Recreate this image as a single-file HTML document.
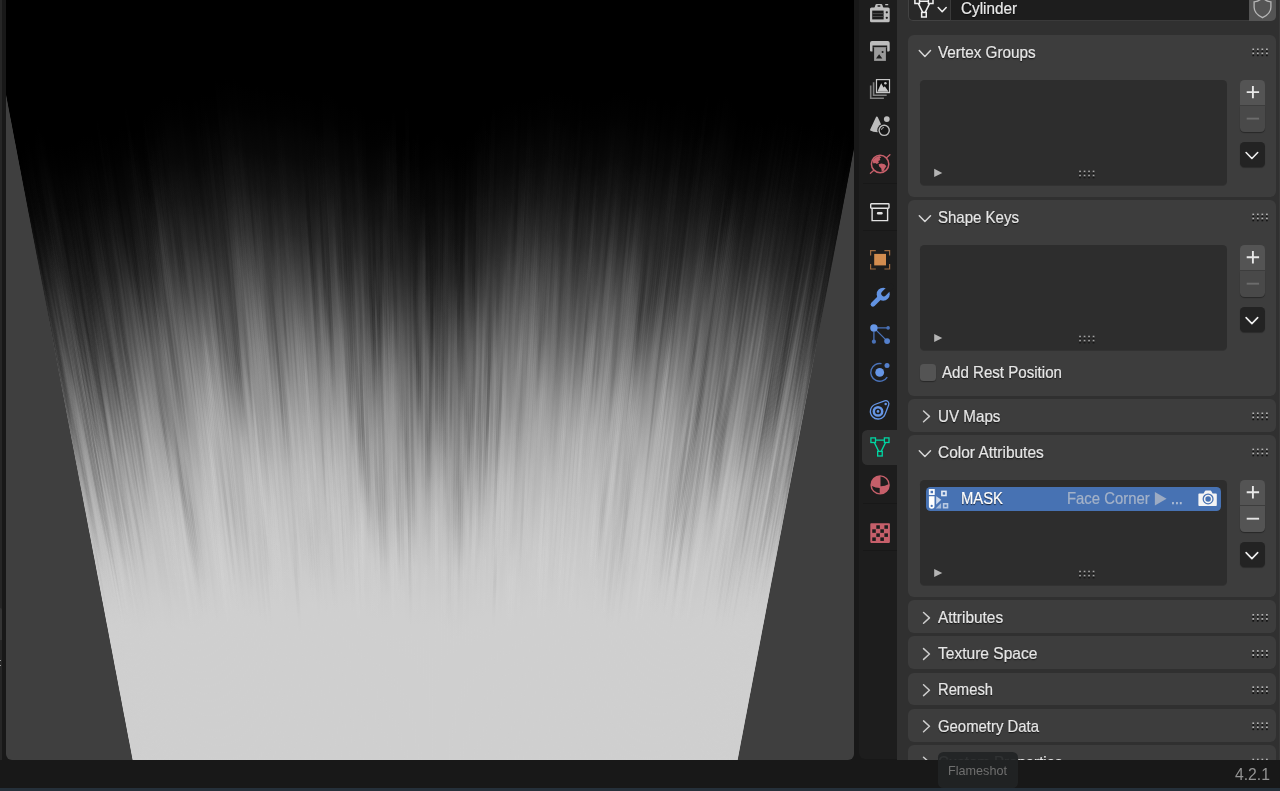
<!DOCTYPE html>
<html lang="en">
<head>
<meta charset="utf-8">
<title>Blender</title>
<style>
html,body{margin:0;padding:0;}
body{width:1280px;height:791px;overflow:hidden;background:#181818;position:relative;font-family:"Liberation Sans",sans-serif;color:#e4e4e4;}
.abs,.abs>*{position:absolute;}
#root{left:0;top:0;width:1280px;height:791px;overflow:hidden;}
#lstrip{left:0;top:0;width:2px;height:759.5px;background:#262626;}
#lblock{left:0;top:607.5px;width:2px;height:32px;background:#343434;border-radius:0 2px 0 0;}
#view{left:6.4px;top:0;width:847.8px;height:759.6px;background:#3f3f3f;border-radius:0 0 6px 6px;overflow:hidden;}
#view svg{position:absolute;left:0;top:0;}
#tabs{left:858.6px;top:0;width:38.8px;height:759.4px;background:#1d1d1d;border-radius:0 0 0 6px;}
#main{left:897.4px;top:0;width:382.6px;height:759.5px;background:#303030;overflow:hidden;}
#redge{left:1278.6px;top:0;width:1.4px;height:759.5px;background:#393939;}
#status{left:0;top:759.6px;width:1280px;height:28.4px;background:#181818;}
#bstrip{left:0;top:787.8px;width:1280px;height:3.2px;background:#25303a;}
.panel{background:#3d3d3d;border-radius:6px;left:907.8px;width:368.3px;}
.list{background:#2d2d2d;border-radius:4.5px;left:919.7px;width:307.3px;box-shadow:0 1px 0 rgba(0,0,0,.18);}
.btn{left:1239.9px;width:24.8px;background:#545454;}
.t{white-space:nowrap;font-size:16.4px;line-height:20px;height:20px;transform-origin:0 0;text-shadow:0 1px 1.2px rgba(0,0,0,.75);color:#e6e6e6;-webkit-text-stroke:0.22px currentColor;}
.ic{left:870px;width:20.4px;height:20.4px;overflow:visible;}
svg{overflow:visible;}
</style>
</head>
<body>
<div id="root" class="abs">
<div id="lstrip"></div><div id="lblock"></div>
<div style="left:0;top:660px;width:1px;height:1.4px;background:#9a9a9a"></div>
<div style="left:0;top:665px;width:1px;height:1.4px;background:#9a9a9a"></div>
<div id="view"><svg width="848" height="760" viewBox="0 0 848 760"><defs><linearGradient id="gb" gradientUnits="userSpaceOnUse" x1="0" x2="0" y1="112.0" y2="618.0"><stop offset="0" stop-color="rgb(0,0,0)"/><stop offset="0.05" stop-color="rgb(2,2,2)"/><stop offset="0.127" stop-color="rgb(9,9,9)"/><stop offset="0.2" stop-color="rgb(21,21,21)"/><stop offset="0.278" stop-color="rgb(40,40,40)"/><stop offset="0.353" stop-color="rgb(65,65,65)"/><stop offset="0.43" stop-color="rgb(92,92,92)"/><stop offset="0.5" stop-color="rgb(117,117,117)"/><stop offset="0.577" stop-color="rgb(142,142,142)"/><stop offset="0.653" stop-color="rgb(164,164,164)"/><stop offset="0.728" stop-color="rgb(180,180,180)"/><stop offset="0.8" stop-color="rgb(191,191,191)"/><stop offset="0.88" stop-color="rgb(200,200,200)"/><stop offset="0.954" stop-color="rgb(205,205,205)"/><stop offset="1" stop-color="rgb(207,207,207)"/></linearGradient><linearGradient id="md" x1="0" x2="0" y1="0" y2="1"><stop offset="0" stop-color="#000" stop-opacity="0"/><stop offset=".14" stop-color="#000" stop-opacity=".12"/><stop offset=".3" stop-color="#000" stop-opacity=".55"/><stop offset=".5" stop-color="#000" stop-opacity="1"/><stop offset=".7" stop-color="#000" stop-opacity=".55"/><stop offset=".86" stop-color="#000" stop-opacity=".12"/><stop offset="1" stop-color="#000" stop-opacity="0"/></linearGradient><linearGradient id="ml" x1="0" x2="0" y1="0" y2="1"><stop offset="0" stop-color="#fff" stop-opacity="0"/><stop offset=".14" stop-color="#fff" stop-opacity=".12"/><stop offset=".3" stop-color="#fff" stop-opacity=".55"/><stop offset=".5" stop-color="#fff" stop-opacity="1"/><stop offset=".7" stop-color="#fff" stop-opacity=".55"/><stop offset=".86" stop-color="#fff" stop-opacity=".12"/><stop offset="1" stop-color="#fff" stop-opacity="0"/></linearGradient><linearGradient id="g0" href="#gb" y1="156" y2="623"/><linearGradient id="g1" href="#gb" y1="157" y2="627"/><linearGradient id="g2" href="#gb" y1="157" y2="628"/><linearGradient id="g3" href="#gb" y1="157" y2="631"/><linearGradient id="g4" href="#gb" y1="150" y2="627"/><linearGradient id="g5" href="#gb" y1="151" y2="628"/><linearGradient id="g6" href="#gb" y1="152" y2="629"/><linearGradient id="g7" href="#gb" y1="146" y2="628"/><linearGradient id="g8" href="#gb" y1="142" y2="631"/><linearGradient id="g9" href="#gb" y1="141" y2="629"/><linearGradient id="g10" href="#gb" y1="143" y2="631"/><linearGradient id="g11" href="#gb" y1="140" y2="626"/><linearGradient id="g12" href="#gb" y1="147" y2="629"/><linearGradient id="g13" href="#gb" y1="148" y2="622"/><linearGradient id="g14" href="#gb" y1="151" y2="627"/><linearGradient id="g15" href="#gb" y1="147" y2="626"/><linearGradient id="g16" href="#gb" y1="144" y2="626"/><linearGradient id="g17" href="#gb" y1="142" y2="626"/><linearGradient id="g18" href="#gb" y1="136" y2="623"/><linearGradient id="g19" href="#gb" y1="132" y2="617"/><linearGradient id="g20" href="#gb" y1="132" y2="621"/><linearGradient id="g21" href="#gb" y1="131" y2="624"/><linearGradient id="g22" href="#gb" y1="126" y2="626"/><linearGradient id="g23" href="#gb" y1="129" y2="627"/><linearGradient id="g24" href="#gb" y1="132" y2="625"/><linearGradient id="g25" href="#gb" y1="136" y2="630"/><linearGradient id="g26" href="#gb" y1="143" y2="628"/><linearGradient id="g27" href="#gb" y1="145" y2="632"/><linearGradient id="g28" href="#gb" y1="146" y2="632"/><linearGradient id="g29" href="#gb" y1="144" y2="631"/><linearGradient id="g30" href="#gb" y1="146" y2="633"/><linearGradient id="g31" href="#gb" y1="150" y2="634"/><linearGradient id="g32" href="#gb" y1="149" y2="632"/><linearGradient id="g33" href="#gb" y1="149" y2="640"/><linearGradient id="g34" href="#gb" y1="145" y2="637"/><linearGradient id="g35" href="#gb" y1="146" y2="635"/><linearGradient id="g36" href="#gb" y1="148" y2="633"/><linearGradient id="g37" href="#gb" y1="147" y2="633"/><linearGradient id="g38" href="#gb" y1="148" y2="633"/><linearGradient id="g39" href="#gb" y1="145" y2="632"/><linearGradient id="g40" href="#gb" y1="147" y2="627"/><linearGradient id="g41" href="#gb" y1="143" y2="629"/><linearGradient id="g42" href="#gb" y1="147" y2="631"/><linearGradient id="g43" href="#gb" y1="143" y2="625"/><linearGradient id="g44" href="#gb" y1="141" y2="630"/><linearGradient id="g45" href="#gb" y1="137" y2="624"/><linearGradient id="g46" href="#gb" y1="137" y2="624"/><linearGradient id="g47" href="#gb" y1="136" y2="625"/><linearGradient id="g48" href="#gb" y1="137" y2="626"/><linearGradient id="g49" href="#gb" y1="135" y2="623"/><linearGradient id="g50" href="#gb" y1="138" y2="627"/><linearGradient id="g51" href="#gb" y1="134" y2="631"/><linearGradient id="g52" href="#gb" y1="142" y2="629"/><linearGradient id="g53" href="#gb" y1="138" y2="634"/><linearGradient id="g54" href="#gb" y1="139" y2="629"/><linearGradient id="g55" href="#gb" y1="137" y2="631"/><linearGradient id="g56" href="#gb" y1="132" y2="624"/><linearGradient id="g57" href="#gb" y1="132" y2="623"/><linearGradient id="g58" href="#gb" y1="137" y2="627"/><linearGradient id="g59" href="#gb" y1="142" y2="629"/><linearGradient id="g60" href="#gb" y1="136" y2="624"/><linearGradient id="g61" href="#gb" y1="136" y2="628"/><linearGradient id="g62" href="#gb" y1="135" y2="630"/><linearGradient id="g63" href="#gb" y1="128" y2="628"/><linearGradient id="g64" href="#gb" y1="126" y2="621"/><linearGradient id="g65" href="#gb" y1="129" y2="624"/><linearGradient id="g66" href="#gb" y1="129" y2="629"/><linearGradient id="g67" href="#gb" y1="128" y2="628"/><linearGradient id="g68" href="#gb" y1="133" y2="628"/><linearGradient id="g69" href="#gb" y1="129" y2="628"/><linearGradient id="g70" href="#gb" y1="130" y2="624"/><linearGradient id="g71" href="#gb" y1="133" y2="622"/><linearGradient id="g72" href="#gb" y1="130" y2="625"/><linearGradient id="g73" href="#gb" y1="115" y2="618"/><linearGradient id="g74" href="#gb" y1="113" y2="617"/><linearGradient id="g75" href="#gb" y1="114" y2="615"/><linearGradient id="g76" href="#gb" y1="107" y2="620"/><linearGradient id="g77" href="#gb" y1="108" y2="620"/><linearGradient id="g78" href="#gb" y1="105" y2="618"/><linearGradient id="g79" href="#gb" y1="101" y2="618"/><linearGradient id="g80" href="#gb" y1="96" y2="607"/><linearGradient id="g81" href="#gb" y1="96" y2="611"/><linearGradient id="g82" href="#gb" y1="98" y2="609"/><linearGradient id="g83" href="#gb" y1="100" y2="606"/><linearGradient id="g84" href="#gb" y1="99" y2="604"/><linearGradient id="g85" href="#gb" y1="94" y2="609"/><linearGradient id="g86" href="#gb" y1="100" y2="607"/><linearGradient id="g87" href="#gb" y1="101" y2="613"/><linearGradient id="g88" href="#gb" y1="105" y2="616"/><linearGradient id="g89" href="#gb" y1="103" y2="619"/><linearGradient id="g90" href="#gb" y1="97" y2="617"/><linearGradient id="g91" href="#gb" y1="102" y2="619"/><linearGradient id="g92" href="#gb" y1="94" y2="617"/><linearGradient id="g93" href="#gb" y1="95" y2="618"/><linearGradient id="g94" href="#gb" y1="96" y2="622"/><linearGradient id="g95" href="#gb" y1="94" y2="620"/><linearGradient id="g96" href="#gb" y1="95" y2="619"/><linearGradient id="g97" href="#gb" y1="80" y2="612"/><linearGradient id="g98" href="#gb" y1="82" y2="616"/><linearGradient id="g99" href="#gb" y1="81" y2="607"/><linearGradient id="g100" href="#gb" y1="78" y2="607"/><linearGradient id="g101" href="#gb" y1="82" y2="608"/><linearGradient id="g102" href="#gb" y1="78" y2="608"/><linearGradient id="g103" href="#gb" y1="83" y2="606"/><linearGradient id="g104" href="#gb" y1="85" y2="616"/><linearGradient id="g105" href="#gb" y1="85" y2="614"/><linearGradient id="g106" href="#gb" y1="87" y2="614"/><linearGradient id="g107" href="#gb" y1="88" y2="613"/><linearGradient id="g108" href="#gb" y1="85" y2="619"/><linearGradient id="g109" href="#gb" y1="89" y2="615"/><linearGradient id="g110" href="#gb" y1="87" y2="611"/><linearGradient id="g111" href="#gb" y1="92" y2="608"/><linearGradient id="g112" href="#gb" y1="93" y2="605"/><linearGradient id="g113" href="#gb" y1="91" y2="604"/><linearGradient id="g114" href="#gb" y1="90" y2="604"/><linearGradient id="g115" href="#gb" y1="89" y2="605"/><linearGradient id="g116" href="#gb" y1="91" y2="601"/><linearGradient id="g117" href="#gb" y1="92" y2="609"/><linearGradient id="g118" href="#gb" y1="95" y2="609"/><linearGradient id="g119" href="#gb" y1="92" y2="609"/><linearGradient id="g120" href="#gb" y1="95" y2="611"/><linearGradient id="g121" href="#gb" y1="97" y2="613"/><linearGradient id="g122" href="#gb" y1="97" y2="612"/><linearGradient id="g123" href="#gb" y1="100" y2="608"/><linearGradient id="g124" href="#gb" y1="104" y2="611"/><linearGradient id="g125" href="#gb" y1="101" y2="610"/><linearGradient id="g126" href="#gb" y1="91" y2="607"/><linearGradient id="g127" href="#gb" y1="92" y2="604"/><linearGradient id="g128" href="#gb" y1="94" y2="607"/><linearGradient id="g129" href="#gb" y1="98" y2="614"/><linearGradient id="g130" href="#gb" y1="106" y2="614"/><linearGradient id="g131" href="#gb" y1="105" y2="613"/><linearGradient id="g132" href="#gb" y1="106" y2="618"/><linearGradient id="g133" href="#gb" y1="108" y2="619"/><linearGradient id="g134" href="#gb" y1="104" y2="619"/><linearGradient id="g135" href="#gb" y1="109" y2="620"/><linearGradient id="g136" href="#gb" y1="115" y2="620"/><linearGradient id="g137" href="#gb" y1="123" y2="624"/><linearGradient id="g138" href="#gb" y1="121" y2="624"/><linearGradient id="g139" href="#gb" y1="120" y2="623"/><linearGradient id="g140" href="#gb" y1="118" y2="621"/><linearGradient id="g141" href="#gb" y1="117" y2="615"/><linearGradient id="g142" href="#gb" y1="118" y2="616"/><linearGradient id="g143" href="#gb" y1="119" y2="616"/><linearGradient id="g144" href="#gb" y1="121" y2="614"/><linearGradient id="g145" href="#gb" y1="131" y2="622"/><linearGradient id="g146" href="#gb" y1="135" y2="624"/><linearGradient id="g147" href="#gb" y1="138" y2="623"/><linearGradient id="g148" href="#gb" y1="143" y2="625"/><linearGradient id="g149" href="#gb" y1="144" y2="627"/><linearGradient id="g150" href="#gb" y1="141" y2="624"/><linearGradient id="g151" href="#gb" y1="145" y2="626"/><linearGradient id="g152" href="#gb" y1="142" y2="626"/><linearGradient id="g153" href="#gb" y1="140" y2="623"/><linearGradient id="g154" href="#gb" y1="137" y2="624"/><linearGradient id="g155" href="#gb" y1="133" y2="619"/><linearGradient id="g156" href="#gb" y1="136" y2="625"/><linearGradient id="g157" href="#gb" y1="140" y2="625"/><linearGradient id="g158" href="#gb" y1="143" y2="630"/><linearGradient id="g159" href="#gb" y1="143" y2="630"/><linearGradient id="g160" href="#gb" y1="147" y2="640"/><linearGradient id="g161" href="#gb" y1="141" y2="635"/><linearGradient id="g162" href="#gb" y1="144" y2="639"/><linearGradient id="g163" href="#gb" y1="135" y2="635"/><linearGradient id="g164" href="#gb" y1="135" y2="627"/><linearGradient id="g165" href="#gb" y1="130" y2="629"/><linearGradient id="g166" href="#gb" y1="124" y2="620"/><linearGradient id="g167" href="#gb" y1="116" y2="618"/><linearGradient id="g168" href="#gb" y1="124" y2="619"/><linearGradient id="g169" href="#gb" y1="113" y2="619"/><linearGradient id="g170" href="#gb" y1="110" y2="619"/><linearGradient id="g171" href="#gb" y1="108" y2="615"/><linearGradient id="g172" href="#gb" y1="104" y2="616"/><linearGradient id="g173" href="#gb" y1="103" y2="613"/><linearGradient id="g174" href="#gb" y1="102" y2="614"/><linearGradient id="g175" href="#gb" y1="100" y2="613"/><linearGradient id="g176" href="#gb" y1="106" y2="619"/><linearGradient id="g177" href="#gb" y1="100" y2="611"/><linearGradient id="g178" href="#gb" y1="101" y2="617"/><linearGradient id="g179" href="#gb" y1="100" y2="617"/><linearGradient id="g180" href="#gb" y1="100" y2="616"/><linearGradient id="g181" href="#gb" y1="96" y2="618"/><linearGradient id="g182" href="#gb" y1="95" y2="613"/><linearGradient id="g183" href="#gb" y1="95" y2="618"/><linearGradient id="g184" href="#gb" y1="90" y2="614"/><linearGradient id="g185" href="#gb" y1="93" y2="611"/><linearGradient id="g186" href="#gb" y1="92" y2="610"/><linearGradient id="g187" href="#gb" y1="93" y2="612"/><linearGradient id="g188" href="#gb" y1="96" y2="612"/><linearGradient id="g189" href="#gb" y1="94" y2="614"/><linearGradient id="g190" href="#gb" y1="99" y2="614"/><linearGradient id="g191" href="#gb" y1="102" y2="616"/><linearGradient id="g192" href="#gb" y1="97" y2="612"/><linearGradient id="g193" href="#gb" y1="105" y2="616"/><linearGradient id="g194" href="#gb" y1="101" y2="612"/><linearGradient id="g195" href="#gb" y1="104" y2="616"/><linearGradient id="g196" href="#gb" y1="103" y2="610"/><linearGradient id="g197" href="#gb" y1="103" y2="612"/><linearGradient id="g198" href="#gb" y1="100" y2="609"/><linearGradient id="g199" href="#gb" y1="101" y2="611"/><linearGradient id="g200" href="#gb" y1="97" y2="610"/><linearGradient id="g201" href="#gb" y1="91" y2="606"/><linearGradient id="g202" href="#gb" y1="92" y2="609"/><linearGradient id="g203" href="#gb" y1="90" y2="603"/><linearGradient id="g204" href="#gb" y1="91" y2="608"/><linearGradient id="g205" href="#gb" y1="91" y2="609"/><linearGradient id="g206" href="#gb" y1="101" y2="614"/><linearGradient id="g207" href="#gb" y1="99" y2="614"/><linearGradient id="g208" href="#gb" y1="103" y2="621"/><linearGradient id="g209" href="#gb" y1="98" y2="618"/><linearGradient id="g210" href="#gb" y1="101" y2="619"/><linearGradient id="g211" href="#gb" y1="93" y2="617"/><linearGradient id="g212" href="#gb" y1="99" y2="619"/><linearGradient id="g213" href="#gb" y1="97" y2="615"/><linearGradient id="g214" href="#gb" y1="104" y2="622"/><linearGradient id="g215" href="#gb" y1="108" y2="625"/><linearGradient id="g216" href="#gb" y1="100" y2="619"/><linearGradient id="g217" href="#gb" y1="102" y2="617"/><linearGradient id="g218" href="#gb" y1="106" y2="616"/><linearGradient id="g219" href="#gb" y1="104" y2="618"/><linearGradient id="g220" href="#gb" y1="99" y2="614"/><linearGradient id="g221" href="#gb" y1="103" y2="609"/><linearGradient id="g222" href="#gb" y1="102" y2="608"/><linearGradient id="g223" href="#gb" y1="109" y2="615"/><linearGradient id="g224" href="#gb" y1="110" y2="616"/><linearGradient id="g225" href="#gb" y1="108" y2="612"/><linearGradient id="g226" href="#gb" y1="110" y2="614"/><linearGradient id="g227" href="#gb" y1="115" y2="616"/><linearGradient id="g228" href="#gb" y1="108" y2="610"/><linearGradient id="g229" href="#gb" y1="110" y2="608"/><linearGradient id="g230" href="#gb" y1="110" y2="611"/><linearGradient id="g231" href="#gb" y1="107" y2="610"/><linearGradient id="g232" href="#gb" y1="106" y2="617"/><linearGradient id="g233" href="#gb" y1="98" y2="615"/><linearGradient id="g234" href="#gb" y1="104" y2="612"/><linearGradient id="g235" href="#gb" y1="95" y2="612"/><linearGradient id="g236" href="#gb" y1="97" y2="616"/><linearGradient id="g237" href="#gb" y1="102" y2="614"/><linearGradient id="g238" href="#gb" y1="107" y2="615"/><linearGradient id="g239" href="#gb" y1="108" y2="613"/><linearGradient id="g240" href="#gb" y1="113" y2="616"/><linearGradient id="g241" href="#gb" y1="123" y2="618"/><linearGradient id="g242" href="#gb" y1="120" y2="619"/><linearGradient id="g243" href="#gb" y1="118" y2="614"/><linearGradient id="g244" href="#gb" y1="124" y2="621"/><linearGradient id="g245" href="#gb" y1="121" y2="620"/><linearGradient id="g246" href="#gb" y1="122" y2="617"/><linearGradient id="g247" href="#gb" y1="126" y2="619"/><linearGradient id="g248" href="#gb" y1="119" y2="623"/><linearGradient id="g249" href="#gb" y1="122" y2="619"/><linearGradient id="g250" href="#gb" y1="124" y2="626"/><linearGradient id="g251" href="#gb" y1="127" y2="628"/><linearGradient id="g252" href="#gb" y1="127" y2="625"/><linearGradient id="g253" href="#gb" y1="123" y2="623"/><linearGradient id="g254" href="#gb" y1="120" y2="623"/><linearGradient id="g255" href="#gb" y1="120" y2="622"/><linearGradient id="g256" href="#gb" y1="114" y2="616"/><linearGradient id="g257" href="#gb" y1="121" y2="621"/><linearGradient id="g258" href="#gb" y1="119" y2="614"/><linearGradient id="g259" href="#gb" y1="122" y2="621"/><linearGradient id="g260" href="#gb" y1="121" y2="612"/><linearGradient id="g261" href="#gb" y1="126" y2="619"/><linearGradient id="g262" href="#gb" y1="121" y2="619"/><linearGradient id="g263" href="#gb" y1="119" y2="622"/><linearGradient id="g264" href="#gb" y1="122" y2="618"/><linearGradient id="g265" href="#gb" y1="122" y2="624"/><linearGradient id="g266" href="#gb" y1="126" y2="625"/><linearGradient id="g267" href="#gb" y1="129" y2="626"/><linearGradient id="g268" href="#gb" y1="125" y2="623"/><linearGradient id="g269" href="#gb" y1="127" y2="622"/><linearGradient id="g270" href="#gb" y1="126" y2="627"/><linearGradient id="g271" href="#gb" y1="128" y2="629"/><linearGradient id="g272" href="#gb" y1="127" y2="623"/><linearGradient id="g273" href="#gb" y1="125" y2="624"/><linearGradient id="g274" href="#gb" y1="124" y2="621"/><linearGradient id="g275" href="#gb" y1="125" y2="627"/><linearGradient id="g276" href="#gb" y1="120" y2="622"/><linearGradient id="g277" href="#gb" y1="123" y2="626"/><linearGradient id="g278" href="#gb" y1="121" y2="620"/><linearGradient id="g279" href="#gb" y1="125" y2="625"/><linearGradient id="g280" href="#gb" y1="125" y2="627"/><linearGradient id="g281" href="#gb" y1="126" y2="625"/><linearGradient id="g282" href="#gb" y1="126" y2="628"/><linearGradient id="g283" href="#gb" y1="132" y2="627"/><linearGradient id="g284" href="#gb" y1="130" y2="625"/><linearGradient id="g285" href="#gb" y1="130" y2="626"/><linearGradient id="g286" href="#gb" y1="126" y2="627"/><linearGradient id="g287" href="#gb" y1="130" y2="624"/><linearGradient id="g288" href="#gb" y1="122" y2="619"/><linearGradient id="g289" href="#gb" y1="136" y2="619"/><linearGradient id="g290" href="#gb" y1="133" y2="620"/><linearGradient id="g291" href="#gb" y1="135" y2="624"/><linearGradient id="g292" href="#gb" y1="132" y2="622"/><linearGradient id="g293" href="#gb" y1="133" y2="623"/><linearGradient id="g294" href="#gb" y1="137" y2="626"/><linearGradient id="g295" href="#gb" y1="135" y2="623"/><linearGradient id="g296" href="#gb" y1="135" y2="620"/><linearGradient id="g297" href="#gb" y1="134" y2="626"/><linearGradient id="g298" href="#gb" y1="130" y2="625"/><linearGradient id="g299" href="#gb" y1="123" y2="621"/><linearGradient id="g300" href="#gb" y1="129" y2="627"/><linearGradient id="g301" href="#gb" y1="131" y2="626"/><linearGradient id="g302" href="#gb" y1="134" y2="626"/><linearGradient id="g303" href="#gb" y1="133" y2="628"/><linearGradient id="g304" href="#gb" y1="139" y2="626"/><linearGradient id="g305" href="#gb" y1="146" y2="630"/><linearGradient id="g306" href="#gb" y1="146" y2="628"/><linearGradient id="g307" href="#gb" y1="144" y2="628"/><linearGradient id="g308" href="#gb" y1="136" y2="626"/><linearGradient id="g309" href="#gb" y1="138" y2="630"/><clipPath id="sil"><path d="M-18.0 0 L876.2 0 L731.6 760 L126.6 760 Z"/></clipPath><filter id="sb" x="-20" y="0" width="900" height="760" filterUnits="userSpaceOnUse" color-interpolation-filters="sRGB"><feGaussianBlur stdDeviation="0.7 0"/></filter></defs><g clip-path="url(#sil)"><path d="M-18.0 0 L876.2 0 L731.6 760 L126.6 760 Z" fill="url(#gb)"/><g filter="url(#sb)"><path d="M-18.0 0L-16.5 0L127.8 760L126.6 760Z" fill="url(#g0)"/><path d="M-17.1 0L-15.5 0L128.5 760L127.2 760Z" fill="url(#g1)"/><path d="M-16.1 0L-14.2 0L129.4 760L127.9 760Z" fill="url(#g2)"/><path d="M-14.8 0L-13.1 0L130.1 760L128.8 760Z" fill="url(#g3)"/><path d="M-13.7 0L-11.9 0L130.9 760L129.5 760Z" fill="url(#g4)"/><path d="M-12.5 0L-10.5 0L131.8 760L130.3 760Z" fill="url(#g5)"/><path d="M-11.1 0L-9.0 0L132.9 760L131.2 760Z" fill="url(#g6)"/><path d="M-9.6 0L-7.3 0L134.0 760L132.3 760Z" fill="url(#g7)"/><path d="M-7.9 0L-6.4 0L134.6 760L133.4 760Z" fill="url(#g8)"/><path d="M-7.0 0L-5.5 0L135.2 760L134.0 760Z" fill="url(#g9)"/><path d="M-6.1 0L-4.6 0L135.9 760L134.6 760Z" fill="url(#g10)"/><path d="M-5.2 0L-3.5 0L136.6 760L135.3 760Z" fill="url(#g11)"/><path d="M-4.1 0L-2.5 0L137.3 760L136.0 760Z" fill="url(#g12)"/><path d="M-3.1 0L-1.4 0L138.0 760L136.7 760Z" fill="url(#g13)"/><path d="M-2.0 0L-0.3 0L138.7 760L137.4 760Z" fill="url(#g14)"/><path d="M-0.9 0L0.8 0L139.5 760L138.1 760Z" fill="url(#g15)"/><path d="M0.2 0L2.0 0L140.3 760L138.9 760Z" fill="url(#g16)"/><path d="M1.4 0L3.2 0L141.2 760L139.7 760Z" fill="url(#g17)"/><path d="M2.6 0L4.5 0L142.0 760L140.6 760Z" fill="url(#g18)"/><path d="M3.9 0L5.8 0L142.9 760L141.4 760Z" fill="url(#g19)"/><path d="M5.2 0L7.1 0L143.8 760L142.3 760Z" fill="url(#g20)"/><path d="M6.5 0L8.5 0L144.7 760L143.2 760Z" fill="url(#g21)"/><path d="M7.9 0L9.9 0L145.7 760L144.1 760Z" fill="url(#g22)"/><path d="M9.3 0L11.3 0L146.6 760L145.1 760Z" fill="url(#g23)"/><path d="M10.7 0L12.8 0L147.6 760L146.0 760Z" fill="url(#g24)"/><path d="M12.2 0L14.3 0L148.6 760L147.0 760Z" fill="url(#g25)"/><path d="M13.7 0L15.9 0L149.7 760L148.0 760Z" fill="url(#g26)"/><path d="M15.3 0L17.4 0L150.8 760L149.1 760Z" fill="url(#g27)"/><path d="M16.8 0L19.1 0L151.9 760L150.2 760Z" fill="url(#g28)"/><path d="M18.5 0L20.7 0L153.0 760L151.3 760Z" fill="url(#g29)"/><path d="M20.1 0L22.4 0L154.1 760L152.4 760Z" fill="url(#g30)"/><path d="M21.8 0L24.1 0L155.3 760L153.5 760Z" fill="url(#g31)"/><path d="M23.5 0L25.9 0L156.5 760L154.7 760Z" fill="url(#g32)"/><path d="M25.3 0L27.7 0L157.7 760L155.9 760Z" fill="url(#g33)"/><path d="M27.1 0L29.5 0L158.9 760L157.1 760Z" fill="url(#g34)"/><path d="M28.9 0L31.3 0L160.2 760L158.3 760Z" fill="url(#g35)"/><path d="M30.7 0L33.2 0L161.5 760L159.6 760Z" fill="url(#g36)"/><path d="M32.6 0L35.2 0L162.8 760L160.9 760Z" fill="url(#g37)"/><path d="M34.6 0L37.1 0L164.1 760L162.2 760Z" fill="url(#g38)"/><path d="M36.5 0L39.1 0L165.4 760L163.5 760Z" fill="url(#g39)"/><path d="M38.5 0L41.1 0L166.8 760L164.8 760Z" fill="url(#g40)"/><path d="M40.5 0L43.2 0L168.2 760L166.2 760Z" fill="url(#g41)"/><path d="M42.6 0L45.3 0L169.6 760L167.6 760Z" fill="url(#g42)"/><path d="M44.7 0L47.4 0L171.0 760L169.0 760Z" fill="url(#g43)"/><path d="M46.8 0L49.6 0L172.5 760L170.4 760Z" fill="url(#g44)"/><path d="M49.0 0L51.8 0L174.0 760L171.9 760Z" fill="url(#g45)"/><path d="M51.2 0L54.0 0L175.5 760L173.4 760Z" fill="url(#g46)"/><path d="M53.4 0L56.2 0L177.0 760L174.9 760Z" fill="url(#g47)"/><path d="M55.6 0L58.5 0L178.6 760L176.4 760Z" fill="url(#g48)"/><path d="M57.9 0L60.9 0L180.1 760L178.0 760Z" fill="url(#g49)"/><path d="M60.3 0L63.2 0L181.7 760L179.5 760Z" fill="url(#g50)"/><path d="M62.6 0L65.6 0L183.3 760L181.1 760Z" fill="url(#g51)"/><path d="M65.0 0L68.0 0L185.0 760L182.7 760Z" fill="url(#g52)"/><path d="M67.4 0L70.4 0L186.6 760L184.4 760Z" fill="url(#g53)"/><path d="M69.8 0L72.9 0L188.3 760L186.0 760Z" fill="url(#g54)"/><path d="M72.3 0L75.4 0L190.0 760L187.7 760Z" fill="url(#g55)"/><path d="M74.8 0L78.0 0L191.7 760L189.4 760Z" fill="url(#g56)"/><path d="M77.4 0L80.5 0L193.4 760L191.1 760Z" fill="url(#g57)"/><path d="M79.9 0L83.1 0L195.2 760L192.8 760Z" fill="url(#g58)"/><path d="M82.5 0L85.7 0L197.0 760L194.6 760Z" fill="url(#g59)"/><path d="M85.1 0L88.4 0L198.8 760L196.4 760Z" fill="url(#g60)"/><path d="M87.8 0L91.1 0L200.6 760L198.2 760Z" fill="url(#g61)"/><path d="M90.5 0L93.8 0L202.4 760L200.0 760Z" fill="url(#g62)"/><path d="M93.2 0L96.5 0L204.3 760L201.8 760Z" fill="url(#g63)"/><path d="M95.9 0L99.3 0L206.1 760L203.7 760Z" fill="url(#g64)"/><path d="M98.7 0L102.1 0L208.0 760L205.5 760Z" fill="url(#g65)"/><path d="M101.5 0L104.9 0L210.0 760L207.4 760Z" fill="url(#g66)"/><path d="M104.3 0L107.8 0L211.9 760L209.4 760Z" fill="url(#g67)"/><path d="M107.2 0L110.7 0L213.8 760L211.3 760Z" fill="url(#g68)"/><path d="M110.1 0L113.6 0L215.8 760L213.2 760Z" fill="url(#g69)"/><path d="M113.0 0L116.5 0L217.8 760L215.2 760Z" fill="url(#g70)"/><path d="M115.9 0L119.5 0L219.8 760L217.2 760Z" fill="url(#g71)"/><path d="M118.9 0L122.4 0L221.8 760L219.2 760Z" fill="url(#g72)"/><path d="M121.8 0L125.5 0L223.9 760L221.2 760Z" fill="url(#g73)"/><path d="M124.9 0L128.5 0L225.9 760L223.3 760Z" fill="url(#g74)"/><path d="M127.9 0L131.6 0L228.0 760L225.3 760Z" fill="url(#g75)"/><path d="M131.0 0L134.7 0L230.1 760L227.4 760Z" fill="url(#g76)"/><path d="M134.1 0L137.8 0L232.2 760L229.5 760Z" fill="url(#g77)"/><path d="M137.2 0L140.9 0L234.3 760L231.6 760Z" fill="url(#g78)"/><path d="M140.3 0L144.1 0L236.4 760L233.7 760Z" fill="url(#g79)"/><path d="M143.5 0L147.3 0L238.6 760L235.8 760Z" fill="url(#g80)"/><path d="M146.7 0L150.5 0L240.8 760L238.0 760Z" fill="url(#g81)"/><path d="M149.9 0L153.7 0L243.0 760L240.2 760Z" fill="url(#g82)"/><path d="M153.1 0L157.0 0L245.2 760L242.4 760Z" fill="url(#g83)"/><path d="M156.4 0L160.3 0L247.4 760L244.6 760Z" fill="url(#g84)"/><path d="M159.7 0L163.6 0L249.6 760L246.8 760Z" fill="url(#g85)"/><path d="M163.0 0L166.9 0L251.9 760L249.0 760Z" fill="url(#g86)"/><path d="M166.3 0L170.3 0L254.2 760L251.3 760Z" fill="url(#g87)"/><path d="M169.7 0L173.6 0L256.4 760L253.6 760Z" fill="url(#g88)"/><path d="M173.0 0L177.0 0L258.7 760L255.8 760Z" fill="url(#g89)"/><path d="M176.4 0L180.5 0L261.1 760L258.1 760Z" fill="url(#g90)"/><path d="M179.9 0L183.9 0L263.4 760L260.5 760Z" fill="url(#g91)"/><path d="M183.3 0L187.4 0L265.7 760L262.8 760Z" fill="url(#g92)"/><path d="M186.8 0L190.8 0L268.1 760L265.1 760Z" fill="url(#g93)"/><path d="M190.2 0L194.3 0L270.5 760L267.5 760Z" fill="url(#g94)"/><path d="M193.7 0L197.9 0L272.8 760L269.9 760Z" fill="url(#g95)"/><path d="M197.3 0L201.4 0L275.2 760L272.2 760Z" fill="url(#g96)"/><path d="M200.8 0L205.0 0L277.6 760L274.6 760Z" fill="url(#g97)"/><path d="M204.4 0L208.5 0L280.1 760L277.0 760Z" fill="url(#g98)"/><path d="M207.9 0L212.1 0L282.5 760L279.5 760Z" fill="url(#g99)"/><path d="M211.5 0L215.8 0L285.0 760L281.9 760Z" fill="url(#g100)"/><path d="M215.2 0L219.4 0L287.4 760L284.4 760Z" fill="url(#g101)"/><path d="M218.8 0L223.1 0L289.9 760L286.8 760Z" fill="url(#g102)"/><path d="M222.5 0L226.7 0L292.4 760L289.3 760Z" fill="url(#g103)"/><path d="M226.1 0L230.4 0L294.9 760L291.8 760Z" fill="url(#g104)"/><path d="M229.8 0L234.1 0L297.4 760L294.3 760Z" fill="url(#g105)"/><path d="M233.5 0L237.8 0L299.9 760L296.8 760Z" fill="url(#g106)"/><path d="M237.2 0L241.6 0L302.4 760L299.3 760Z" fill="url(#g107)"/><path d="M241.0 0L245.3 0L305.0 760L301.8 760Z" fill="url(#g108)"/><path d="M244.7 0L249.1 0L307.5 760L304.4 760Z" fill="url(#g109)"/><path d="M248.5 0L252.9 0L310.1 760L306.9 760Z" fill="url(#g110)"/><path d="M252.3 0L256.7 0L312.6 760L309.5 760Z" fill="url(#g111)"/><path d="M256.1 0L260.5 0L315.2 760L312.0 760Z" fill="url(#g112)"/><path d="M259.9 0L264.3 0L317.8 760L314.6 760Z" fill="url(#g113)"/><path d="M263.7 0L268.2 0L320.4 760L317.2 760Z" fill="url(#g114)"/><path d="M267.6 0L272.1 0L323.0 760L319.8 760Z" fill="url(#g115)"/><path d="M271.5 0L275.9 0L325.7 760L322.4 760Z" fill="url(#g116)"/><path d="M275.3 0L279.8 0L328.3 760L325.1 760Z" fill="url(#g117)"/><path d="M279.2 0L283.7 0L330.9 760L327.7 760Z" fill="url(#g118)"/><path d="M283.1 0L287.6 0L333.6 760L330.3 760Z" fill="url(#g119)"/><path d="M287.0 0L291.5 0L336.2 760L333.0 760Z" fill="url(#g120)"/><path d="M290.9 0L295.5 0L338.9 760L335.6 760Z" fill="url(#g121)"/><path d="M294.9 0L299.4 0L341.6 760L338.3 760Z" fill="url(#g122)"/><path d="M298.8 0L303.4 0L344.2 760L341.0 760Z" fill="url(#g123)"/><path d="M302.8 0L307.3 0L346.9 760L343.6 760Z" fill="url(#g124)"/><path d="M306.7 0L311.3 0L349.6 760L346.3 760Z" fill="url(#g125)"/><path d="M310.7 0L315.3 0L352.3 760L349.0 760Z" fill="url(#g126)"/><path d="M314.7 0L319.3 0L355.0 760L351.7 760Z" fill="url(#g127)"/><path d="M318.7 0L323.3 0L357.7 760L354.4 760Z" fill="url(#g128)"/><path d="M322.7 0L327.3 0L360.4 760L357.1 760Z" fill="url(#g129)"/><path d="M326.7 0L331.4 0L363.2 760L359.8 760Z" fill="url(#g130)"/><path d="M330.8 0L335.4 0L365.9 760L362.6 760Z" fill="url(#g131)"/><path d="M334.8 0L339.4 0L368.6 760L365.3 760Z" fill="url(#g132)"/><path d="M338.8 0L343.5 0L371.4 760L368.0 760Z" fill="url(#g133)"/><path d="M342.9 0L347.5 0L374.1 760L370.8 760Z" fill="url(#g134)"/><path d="M346.9 0L351.6 0L376.9 760L373.5 760Z" fill="url(#g135)"/><path d="M351.0 0L355.7 0L379.6 760L376.3 760Z" fill="url(#g136)"/><path d="M355.1 0L359.8 0L382.4 760L379.0 760Z" fill="url(#g137)"/><path d="M359.2 0L363.8 0L385.1 760L381.8 760Z" fill="url(#g138)"/><path d="M363.2 0L367.9 0L387.9 760L384.5 760Z" fill="url(#g139)"/><path d="M367.3 0L372.0 0L390.7 760L387.3 760Z" fill="url(#g140)"/><path d="M371.4 0L376.1 0L393.5 760L390.1 760Z" fill="url(#g141)"/><path d="M375.5 0L380.2 0L396.2 760L392.9 760Z" fill="url(#g142)"/><path d="M379.6 0L384.3 0L399.0 760L395.6 760Z" fill="url(#g143)"/><path d="M383.7 0L388.4 0L401.8 760L398.4 760Z" fill="url(#g144)"/><path d="M387.8 0L392.6 0L404.6 760L401.2 760Z" fill="url(#g145)"/><path d="M392.0 0L396.7 0L407.4 760L404.0 760Z" fill="url(#g146)"/><path d="M396.1 0L400.8 0L410.1 760L406.8 760Z" fill="url(#g147)"/><path d="M400.2 0L404.9 0L412.9 760L409.5 760Z" fill="url(#g148)"/><path d="M404.3 0L409.1 0L415.7 760L412.3 760Z" fill="url(#g149)"/><path d="M408.5 0L413.2 0L418.5 760L415.1 760Z" fill="url(#g150)"/><path d="M412.6 0L417.3 0L421.3 760L417.9 760Z" fill="url(#g151)"/><path d="M416.7 0L421.4 0L424.1 760L420.7 760Z" fill="url(#g152)"/><path d="M420.8 0L425.6 0L426.9 760L423.5 760Z" fill="url(#g153)"/><path d="M425.0 0L429.7 0L429.7 760L426.3 760Z" fill="url(#g154)"/><path d="M429.1 0L433.8 0L432.5 760L429.1 760Z" fill="url(#g155)"/><path d="M433.2 0L438.0 0L435.3 760L431.9 760Z" fill="url(#g156)"/><path d="M437.4 0L442.1 0L438.1 760L434.7 760Z" fill="url(#g157)"/><path d="M441.5 0L446.2 0L440.9 760L437.5 760Z" fill="url(#g158)"/><path d="M445.6 0L450.3 0L443.7 760L440.3 760Z" fill="url(#g159)"/><path d="M449.7 0L454.5 0L446.5 760L443.1 760Z" fill="url(#g160)"/><path d="M453.9 0L458.6 0L449.3 760L445.9 760Z" fill="url(#g161)"/><path d="M458.0 0L462.7 0L452.0 760L448.7 760Z" fill="url(#g162)"/><path d="M462.1 0L466.8 0L454.8 760L451.4 760Z" fill="url(#g163)"/><path d="M466.2 0L471.0 0L457.6 760L454.2 760Z" fill="url(#g164)"/><path d="M470.4 0L475.1 0L460.4 760L457.0 760Z" fill="url(#g165)"/><path d="M474.5 0L479.2 0L463.2 760L459.8 760Z" fill="url(#g166)"/><path d="M478.6 0L483.3 0L465.9 760L462.6 760Z" fill="url(#g167)"/><path d="M482.7 0L487.4 0L468.7 760L465.3 760Z" fill="url(#g168)"/><path d="M486.8 0L491.5 0L471.5 760L468.1 760Z" fill="url(#g169)"/><path d="M490.9 0L495.6 0L474.3 760L470.9 760Z" fill="url(#g170)"/><path d="M495.0 0L499.6 0L477.0 760L473.7 760Z" fill="url(#g171)"/><path d="M499.0 0L503.7 0L479.8 760L476.4 760Z" fill="url(#g172)"/><path d="M503.1 0L507.8 0L482.5 760L479.2 760Z" fill="url(#g173)"/><path d="M507.2 0L511.9 0L485.3 760L481.9 760Z" fill="url(#g174)"/><path d="M511.3 0L515.9 0L488.0 760L484.7 760Z" fill="url(#g175)"/><path d="M515.3 0L520.0 0L490.8 760L487.4 760Z" fill="url(#g176)"/><path d="M519.4 0L524.0 0L493.5 760L490.2 760Z" fill="url(#g177)"/><path d="M523.4 0L528.0 0L496.2 760L492.9 760Z" fill="url(#g178)"/><path d="M527.4 0L532.1 0L499.0 760L495.6 760Z" fill="url(#g179)"/><path d="M531.5 0L536.1 0L501.7 760L498.4 760Z" fill="url(#g180)"/><path d="M535.5 0L540.1 0L504.4 760L501.1 760Z" fill="url(#g181)"/><path d="M539.5 0L544.1 0L507.1 760L503.8 760Z" fill="url(#g182)"/><path d="M543.5 0L548.1 0L509.8 760L506.5 760Z" fill="url(#g183)"/><path d="M547.5 0L552.1 0L512.5 760L509.2 760Z" fill="url(#g184)"/><path d="M551.5 0L556.0 0L515.2 760L511.9 760Z" fill="url(#g185)"/><path d="M555.4 0L560.0 0L517.8 760L514.6 760Z" fill="url(#g186)"/><path d="M559.4 0L563.9 0L520.5 760L517.2 760Z" fill="url(#g187)"/><path d="M563.3 0L567.9 0L523.2 760L519.9 760Z" fill="url(#g188)"/><path d="M567.3 0L571.8 0L525.8 760L522.6 760Z" fill="url(#g189)"/><path d="M571.2 0L575.7 0L528.5 760L525.2 760Z" fill="url(#g190)"/><path d="M575.1 0L579.6 0L531.1 760L527.9 760Z" fill="url(#g191)"/><path d="M579.0 0L583.5 0L533.7 760L530.5 760Z" fill="url(#g192)"/><path d="M582.9 0L587.3 0L536.4 760L533.1 760Z" fill="url(#g193)"/><path d="M586.7 0L591.2 0L539.0 760L535.8 760Z" fill="url(#g194)"/><path d="M590.6 0L595.1 0L541.6 760L538.4 760Z" fill="url(#g195)"/><path d="M594.5 0L598.9 0L544.2 760L541.0 760Z" fill="url(#g196)"/><path d="M598.3 0L602.7 0L546.8 760L543.6 760Z" fill="url(#g197)"/><path d="M602.1 0L606.5 0L549.3 760L546.2 760Z" fill="url(#g198)"/><path d="M605.9 0L610.3 0L551.9 760L548.7 760Z" fill="url(#g199)"/><path d="M609.7 0L614.1 0L554.4 760L551.3 760Z" fill="url(#g200)"/><path d="M613.5 0L617.8 0L557.0 760L553.8 760Z" fill="url(#g201)"/><path d="M617.2 0L621.6 0L559.5 760L556.4 760Z" fill="url(#g202)"/><path d="M621.0 0L625.3 0L562.0 760L558.9 760Z" fill="url(#g203)"/><path d="M624.7 0L629.0 0L564.5 760L561.4 760Z" fill="url(#g204)"/><path d="M628.4 0L632.7 0L567.0 760L563.9 760Z" fill="url(#g205)"/><path d="M632.1 0L636.3 0L569.5 760L566.4 760Z" fill="url(#g206)"/><path d="M635.7 0L640.0 0L572.0 760L568.9 760Z" fill="url(#g207)"/><path d="M639.4 0L643.6 0L574.4 760L571.4 760Z" fill="url(#g208)"/><path d="M643.0 0L647.3 0L576.9 760L573.8 760Z" fill="url(#g209)"/><path d="M646.7 0L650.9 0L579.3 760L576.3 760Z" fill="url(#g210)"/><path d="M650.3 0L654.4 0L581.8 760L578.7 760Z" fill="url(#g211)"/><path d="M653.8 0L658.0 0L584.2 760L581.2 760Z" fill="url(#g212)"/><path d="M657.4 0L661.5 0L586.6 760L583.6 760Z" fill="url(#g213)"/><path d="M660.9 0L665.1 0L588.9 760L586.0 760Z" fill="url(#g214)"/><path d="M664.5 0L668.6 0L591.3 760L588.3 760Z" fill="url(#g215)"/><path d="M668.0 0L672.0 0L593.7 760L590.7 760Z" fill="url(#g216)"/><path d="M671.4 0L675.5 0L596.0 760L593.1 760Z" fill="url(#g217)"/><path d="M674.9 0L678.9 0L598.3 760L595.4 760Z" fill="url(#g218)"/><path d="M678.3 0L682.4 0L600.7 760L597.7 760Z" fill="url(#g219)"/><path d="M681.8 0L685.8 0L603.0 760L600.1 760Z" fill="url(#g220)"/><path d="M685.2 0L689.1 0L605.2 760L602.4 760Z" fill="url(#g221)"/><path d="M688.5 0L692.5 0L607.5 760L604.6 760Z" fill="url(#g222)"/><path d="M691.9 0L695.8 0L609.8 760L606.9 760Z" fill="url(#g223)"/><path d="M695.2 0L699.1 0L612.0 760L609.2 760Z" fill="url(#g224)"/><path d="M698.5 0L702.4 0L614.2 760L611.4 760Z" fill="url(#g225)"/><path d="M701.8 0L705.7 0L616.4 760L613.6 760Z" fill="url(#g226)"/><path d="M705.1 0L708.9 0L618.6 760L615.8 760Z" fill="url(#g227)"/><path d="M708.3 0L712.1 0L620.8 760L618.0 760Z" fill="url(#g228)"/><path d="M711.5 0L715.3 0L623.0 760L620.2 760Z" fill="url(#g229)"/><path d="M714.7 0L718.5 0L625.1 760L622.4 760Z" fill="url(#g230)"/><path d="M717.9 0L721.6 0L627.2 760L624.5 760Z" fill="url(#g231)"/><path d="M721.0 0L724.7 0L629.3 760L626.6 760Z" fill="url(#g232)"/><path d="M724.1 0L727.8 0L631.4 760L628.7 760Z" fill="url(#g233)"/><path d="M727.2 0L730.9 0L633.5 760L630.8 760Z" fill="url(#g234)"/><path d="M730.3 0L733.9 0L635.5 760L632.9 760Z" fill="url(#g235)"/><path d="M733.3 0L737.0 0L637.6 760L634.9 760Z" fill="url(#g236)"/><path d="M736.4 0L739.9 0L639.6 760L637.0 760Z" fill="url(#g237)"/><path d="M739.3 0L742.9 0L641.6 760L639.0 760Z" fill="url(#g238)"/><path d="M742.3 0L745.8 0L643.6 760L641.0 760Z" fill="url(#g239)"/><path d="M745.2 0L748.7 0L645.6 760L643.0 760Z" fill="url(#g240)"/><path d="M748.1 0L751.6 0L647.5 760L645.0 760Z" fill="url(#g241)"/><path d="M751.0 0L754.5 0L649.4 760L646.9 760Z" fill="url(#g242)"/><path d="M753.9 0L757.3 0L651.4 760L648.8 760Z" fill="url(#g243)"/><path d="M756.7 0L760.1 0L653.3 760L650.8 760Z" fill="url(#g244)"/><path d="M759.5 0L762.9 0L655.1 760L652.7 760Z" fill="url(#g245)"/><path d="M762.3 0L765.6 0L657.0 760L654.5 760Z" fill="url(#g246)"/><path d="M765.0 0L768.3 0L658.8 760L656.4 760Z" fill="url(#g247)"/><path d="M767.7 0L771.0 0L660.6 760L658.2 760Z" fill="url(#g248)"/><path d="M770.4 0L773.7 0L662.4 760L660.0 760Z" fill="url(#g249)"/><path d="M773.1 0L776.3 0L664.2 760L661.8 760Z" fill="url(#g250)"/><path d="M775.7 0L778.9 0L666.0 760L663.6 760Z" fill="url(#g251)"/><path d="M778.3 0L781.4 0L667.7 760L665.4 760Z" fill="url(#g252)"/><path d="M780.8 0L784.0 0L669.4 760L667.1 760Z" fill="url(#g253)"/><path d="M783.4 0L786.5 0L671.1 760L668.8 760Z" fill="url(#g254)"/><path d="M785.9 0L789.0 0L672.8 760L670.5 760Z" fill="url(#g255)"/><path d="M788.4 0L791.4 0L674.4 760L672.2 760Z" fill="url(#g256)"/><path d="M790.8 0L793.8 0L676.1 760L673.8 760Z" fill="url(#g257)"/><path d="M793.2 0L796.2 0L677.7 760L675.5 760Z" fill="url(#g258)"/><path d="M795.6 0L798.5 0L679.3 760L677.1 760Z" fill="url(#g259)"/><path d="M797.9 0L800.9 0L680.8 760L678.7 760Z" fill="url(#g260)"/><path d="M800.3 0L803.2 0L682.4 760L680.2 760Z" fill="url(#g261)"/><path d="M802.6 0L805.4 0L683.9 760L681.8 760Z" fill="url(#g262)"/><path d="M804.8 0L807.6 0L685.4 760L683.3 760Z" fill="url(#g263)"/><path d="M807.0 0L809.8 0L686.9 760L684.8 760Z" fill="url(#g264)"/><path d="M809.2 0L812.0 0L688.4 760L686.3 760Z" fill="url(#g265)"/><path d="M811.4 0L814.1 0L689.8 760L687.8 760Z" fill="url(#g266)"/><path d="M813.5 0L816.2 0L691.2 760L689.2 760Z" fill="url(#g267)"/><path d="M815.6 0L818.3 0L692.6 760L690.6 760Z" fill="url(#g268)"/><path d="M817.7 0L820.3 0L694.0 760L692.0 760Z" fill="url(#g269)"/><path d="M819.7 0L822.3 0L695.3 760L693.4 760Z" fill="url(#g270)"/><path d="M821.7 0L824.2 0L696.6 760L694.7 760Z" fill="url(#g271)"/><path d="M823.6 0L826.2 0L697.9 760L696.0 760Z" fill="url(#g272)"/><path d="M825.6 0L828.1 0L699.2 760L697.3 760Z" fill="url(#g273)"/><path d="M827.5 0L829.9 0L700.5 760L698.6 760Z" fill="url(#g274)"/><path d="M829.3 0L831.7 0L701.7 760L699.9 760Z" fill="url(#g275)"/><path d="M831.1 0L833.5 0L702.9 760L701.1 760Z" fill="url(#g276)"/><path d="M832.9 0L835.3 0L704.1 760L702.3 760Z" fill="url(#g277)"/><path d="M834.7 0L837.0 0L705.3 760L703.5 760Z" fill="url(#g278)"/><path d="M836.4 0L838.7 0L706.4 760L704.7 760Z" fill="url(#g279)"/><path d="M838.1 0L840.3 0L707.5 760L705.8 760Z" fill="url(#g280)"/><path d="M839.7 0L842.0 0L708.6 760L706.9 760Z" fill="url(#g281)"/><path d="M841.4 0L843.5 0L709.7 760L708.0 760Z" fill="url(#g282)"/><path d="M842.9 0L845.1 0L710.8 760L709.1 760Z" fill="url(#g283)"/><path d="M844.5 0L846.6 0L711.8 760L710.2 760Z" fill="url(#g284)"/><path d="M846.0 0L848.1 0L712.8 760L711.2 760Z" fill="url(#g285)"/><path d="M847.5 0L849.5 0L713.7 760L712.2 760Z" fill="url(#g286)"/><path d="M848.9 0L850.9 0L714.7 760L713.1 760Z" fill="url(#g287)"/><path d="M850.3 0L852.3 0L715.6 760L714.1 760Z" fill="url(#g288)"/><path d="M851.7 0L853.6 0L716.5 760L715.0 760Z" fill="url(#g289)"/><path d="M853.0 0L854.9 0L717.4 760L715.9 760Z" fill="url(#g290)"/><path d="M854.3 0L856.2 0L718.2 760L716.8 760Z" fill="url(#g291)"/><path d="M855.6 0L857.4 0L719.1 760L717.6 760Z" fill="url(#g292)"/><path d="M856.8 0L858.6 0L719.9 760L718.5 760Z" fill="url(#g293)"/><path d="M858.0 0L859.7 0L720.7 760L719.3 760Z" fill="url(#g294)"/><path d="M859.1 0L860.8 0L721.4 760L720.1 760Z" fill="url(#g295)"/><path d="M860.2 0L861.9 0L722.1 760L720.8 760Z" fill="url(#g296)"/><path d="M861.3 0L862.9 0L722.8 760L721.5 760Z" fill="url(#g297)"/><path d="M862.3 0L864.0 0L723.5 760L722.2 760Z" fill="url(#g298)"/><path d="M863.4 0L864.9 0L724.2 760L722.9 760Z" fill="url(#g299)"/><path d="M864.3 0L865.8 0L724.8 760L723.6 760Z" fill="url(#g300)"/><path d="M865.2 0L866.7 0L725.4 760L724.2 760Z" fill="url(#g301)"/><path d="M866.1 0L867.6 0L726.0 760L724.8 760Z" fill="url(#g302)"/><path d="M867.0 0L869.2 0L727.0 760L725.4 760Z" fill="url(#g303)"/><path d="M868.6 0L870.6 0L728.0 760L726.4 760Z" fill="url(#g304)"/><path d="M870.0 0L871.9 0L728.9 760L727.4 760Z" fill="url(#g305)"/><path d="M871.3 0L873.1 0L729.7 760L728.3 760Z" fill="url(#g306)"/><path d="M872.5 0L874.0 0L730.3 760L729.1 760Z" fill="url(#g307)"/><path d="M873.4 0L875.2 0L731.2 760L729.7 760Z" fill="url(#g308)"/><path d="M874.6 0L876.8 0L732.2 760L730.6 760Z" fill="url(#g309)"/><g fill="url(#md)" fill-opacity="0.031"><path d="M40.7 110L42.6 110L83.5 347L81.7 347Z"/><path d="M98.7 96L101.3 96L133.7 318L131.3 318Z"/><path d="M110.4 147L113.0 147L136.4 309L133.9 309Z"/><path d="M112.4 131L115.1 131L139.4 302L136.9 302Z"/><path d="M115.7 138L118.4 138L147.8 347L145.3 347Z"/><path d="M133.4 135L136.3 135L164.5 348L161.9 348Z"/><path d="M166.0 93L169.1 93L193.0 300L190.0 300Z"/><path d="M171.8 121L175.0 121L199.9 339L197.0 339Z"/><path d="M237.5 132L240.9 132L257.4 325L254.2 325Z"/><path d="M274.1 92L277.8 92L292.4 311L289.1 311Z"/><path d="M279.8 129L283.4 129L296.5 329L293.2 329Z"/><path d="M344.2 150L348.0 150L353.6 304L350.1 304Z"/><path d="M412.2 83L416.1 83L417.3 294L413.7 294Z"/><path d="M429.1 115L432.9 115L432.7 296L429.1 296Z"/><path d="M435.8 107L439.7 107L438.6 333L435.1 333Z"/><path d="M448.9 136L452.7 136L450.8 318L447.3 318Z"/><path d="M452.0 159L455.8 159L453.8 328L450.2 328Z"/><path d="M512.1 115L515.8 115L507.9 322L504.4 322Z"/><path d="M559.1 139L562.7 139L552.2 314L548.8 314Z"/><path d="M606.9 156L610.3 156L595.3 338L592.1 338Z"/><path d="M683.7 167L686.8 167L668.0 326L665.1 326Z"/><path d="M742.5 90L745.3 90L718.6 281L716.0 281Z"/><path d="M744.2 95L747.0 95L715.9 316L713.3 316Z"/><path d="M742.1 141L744.8 141L718.5 325L716.0 325Z"/><path d="M750.3 115L753.0 115L723.1 321L720.6 321Z"/><path d="M781.4 123L783.7 123L755.8 299L753.6 299Z"/><path d="M816.0 94L818.0 94L787.2 273L785.3 273Z"/><path d="M840.6 103L842.0 103L809.6 279L808.3 279Z"/><path d="M833.8 149L835.1 149L799.4 343L798.1 343Z"/><path d="M854.9 102L856.3 102L814.3 323L813.1 323Z"/></g><g fill="url(#md)" fill-opacity="0.063"><path d="M38.5 149L40.2 149L69.8 316L68.2 316Z"/><path d="M31.4 102L33.1 102L66.8 292L65.1 292Z"/><path d="M37.1 97L39.0 97L80.4 336L78.6 336Z"/><path d="M69.3 121L71.6 121L101.0 304L98.9 304Z"/><path d="M107.4 111L110.1 111L140.0 321L137.5 321Z"/><path d="M170.8 89L174.1 89L197.0 292L194.0 292Z"/><path d="M183.7 107L187.0 107L209.5 316L206.5 316Z"/><path d="M254.3 117L257.9 117L275.4 345L272.2 345Z"/><path d="M254.7 82L258.3 82L274.0 291L270.7 291Z"/><path d="M575.9 120L579.6 120L563.8 354L560.5 354Z"/><path d="M736.5 83L739.3 83L707.6 315L705.0 315Z"/><path d="M744.7 107L747.5 107L721.3 292L718.7 292Z"/><path d="M761.3 127L763.8 127L738.9 292L736.5 292Z"/><path d="M808.6 102L810.6 102L777.0 301L775.1 301Z"/><path d="M836.0 83L837.6 83L794.9 320L793.4 320Z"/><path d="M829.0 128L830.5 128L802.9 281L801.4 281Z"/><path d="M841.8 131L843.6 131L804.9 339L803.2 339Z"/></g><g fill="url(#md)" fill-opacity="0.094"><path d="M27.0 128L28.5 128L69.4 354L67.9 354Z"/><path d="M38.1 125L39.8 125L72.3 310L70.6 310Z"/><path d="M47.4 124L49.3 124L76.8 285L75.0 285Z"/><path d="M54.0 128L56.1 128L95.3 362L93.4 362Z"/><path d="M62.5 101L64.7 101L103.4 339L101.4 339Z"/><path d="M74.3 163L76.5 163L101.6 318L99.5 318Z"/><path d="M180.8 154L184.0 154L203.0 324L200.1 324Z"/><path d="M332.7 107L336.5 107L345.0 312L341.6 312Z"/><path d="M709.7 139L712.7 139L691.3 307L688.5 307Z"/><path d="M726.1 88L729.1 88L702.0 293L699.2 293Z"/><path d="M810.7 99L812.7 99L776.8 310L775.0 310Z"/><path d="M809.9 113L811.9 113L773.3 338L771.5 338Z"/><path d="M804.9 150L806.8 150L775.1 335L773.3 335Z"/><path d="M818.6 111L820.5 111L785.4 313L783.6 313Z"/><path d="M836.9 102L838.4 102L802.9 297L801.5 297Z"/><path d="M847.6 92L849.6 92L809.9 305L808.1 305Z"/><path d="M856.2 89L857.8 89L816.0 310L814.5 310Z"/><path d="M854.0 111L855.6 111L812.6 337L811.2 337Z"/></g><g fill="url(#md)" fill-opacity="0.126"><path d="M7.8 131L9.4 131L41.4 300L39.9 300Z"/><path d="M4.9 111L6.5 111L50.0 341L48.6 341Z"/><path d="M22.0 88L23.6 88L63.7 311L62.2 311Z"/><path d="M38.9 158L40.6 158L69.8 322L68.2 322Z"/><path d="M62.2 130L64.4 130L101.9 358L99.9 358Z"/><path d="M73.5 102L75.9 102L113.1 339L110.9 339Z"/><path d="M294.8 119L298.4 119L310.3 320L306.9 320Z"/><path d="M721.2 88L724.1 88L693.9 321L691.1 321Z"/><path d="M733.0 125L735.8 125L714.7 279L712.1 279Z"/><path d="M813.6 125L815.4 125L782.0 318L780.2 318Z"/><path d="M831.3 127L832.8 127L804.8 281L803.4 281Z"/><path d="M836.9 107L838.4 107L803.4 299L802.0 299Z"/><path d="M838.8 102L840.2 102L797.6 336L796.2 336Z"/></g><g fill="url(#md)" fill-opacity="0.157"><path d="M12.5 141L13.9 141L45.1 306L43.7 306Z"/><path d="M0.9 69L2.6 69L46.2 301L44.6 301Z"/><path d="M6.9 94L8.7 94L47.6 303L46.0 303Z"/><path d="M23.6 145L25.0 145L54.6 306L53.3 306Z"/><path d="M30.7 154L32.2 154L63.3 326L61.9 326Z"/><path d="M29.2 134L30.7 134L66.3 332L64.9 332Z"/><path d="M40.4 132L42.2 132L80.3 349L78.6 349Z"/><path d="M72.9 87L75.4 87L112.1 321L109.8 321Z"/><path d="M101.1 127L103.7 127L134.9 339L132.5 339Z"/><path d="M717.1 139L720.0 139L695.1 328L692.4 328Z"/><path d="M815.4 122L817.3 122L775.6 361L773.9 361Z"/><path d="M839.0 126L840.3 126L801.3 337L800.1 337Z"/></g><g fill="url(#md)" fill-opacity="0.189"><path d="M4.2 101L5.6 101L47.6 324L46.3 324Z"/><path d="M18.5 135L20.6 135L57.1 333L55.2 333Z"/><path d="M20.8 125L22.2 125L57.3 317L56.0 317Z"/><path d="M22.6 120L24.0 120L52.7 277L51.3 277Z"/><path d="M41.0 104L42.9 104L72.9 278L71.1 278Z"/><path d="M41.8 100L43.7 100L82.0 324L80.2 324Z"/><path d="M44.2 97L46.2 97L81.2 303L79.4 303Z"/><path d="M60.2 137L62.3 137L88.6 295L86.6 295Z"/><path d="M59.3 122L61.4 122L88.9 288L86.9 288Z"/><path d="M416.0 157L419.8 157L420.5 312L416.9 312Z"/><path d="M419.2 130L423.0 130L423.4 292L419.9 292Z"/><path d="M425.7 91L429.6 91L429.6 293L426.0 293Z"/></g><g fill="url(#md)" fill-opacity="0.220"><path d="M17.1 142L18.9 142L51.2 315L49.4 315Z"/><path d="M10.0 97L12.0 97L56.3 336L54.5 336Z"/><path d="M13.4 98L14.7 98L49.7 288L48.5 288Z"/><path d="M15.9 108L17.3 108L46.2 265L44.9 265Z"/><path d="M21.5 124L22.9 124L58.9 321L57.6 321Z"/><path d="M22.0 121L23.4 121L64.4 346L63.0 346Z"/><path d="M33.3 105L35.1 105L65.9 281L64.2 281Z"/><path d="M43.3 141L45.1 141L71.5 292L69.8 292Z"/><path d="M75.4 137L77.7 137L105.1 309L102.9 309Z"/><path d="M69.6 89L72.0 89L109.9 329L107.7 329Z"/><path d="M78.0 107L80.5 107L106.9 277L104.6 277Z"/><path d="M422.5 153L426.3 153L426.6 327L423.1 327Z"/><path d="M714.1 124L717.0 124L688.3 347L685.6 347Z"/><path d="M719.0 160L721.8 160L699.5 328L696.8 328Z"/><path d="M731.6 84L734.5 84L706.5 291L703.9 291Z"/><path d="M726.4 140L729.2 140L707.3 302L704.7 302Z"/></g><g fill="url(#ml)" fill-opacity="0.003"><path d="M33.9 142L35.5 142L71.8 345L70.3 345Z"/><path d="M55.1 144L57.1 144L87.9 326L86.0 326Z"/><path d="M69.4 111L71.7 111L102.9 306L100.7 306Z"/><path d="M85.3 129L87.8 129L118.8 331L116.5 331Z"/><path d="M88.3 136L90.8 136L119.5 324L117.2 324Z"/><path d="M86.9 114L89.4 114L121.8 327L119.5 327Z"/><path d="M91.7 119L94.3 119L126.9 337L124.6 337Z"/><path d="M94.2 122L96.7 122L119.4 274L117.0 274Z"/><path d="M89.5 77L92.1 77L124.3 294L121.9 294Z"/><path d="M129.0 83L131.9 83L160.0 297L157.2 297Z"/><path d="M160.3 133L163.4 133L184.9 313L182.1 313Z"/><path d="M161.5 122L164.6 122L188.7 325L185.9 325Z"/><path d="M199.8 155L203.1 155L220.7 326L217.7 326Z"/><path d="M240.1 127L243.5 127L259.8 322L256.6 322Z"/><path d="M281.7 112L285.3 112L298.6 318L295.3 318Z"/><path d="M285.5 122L289.1 122L301.2 313L297.8 313Z"/><path d="M289.0 128L292.7 128L306.5 353L303.2 353Z"/><path d="M295.6 79L299.3 79L311.3 288L307.9 288Z"/><path d="M322.8 104L326.6 104L336.3 317L332.9 317Z"/><path d="M332.3 170L335.9 170L342.4 321L339.0 321Z"/><path d="M335.6 97L339.4 97L348.2 317L344.7 317Z"/><path d="M339.9 123L343.7 123L350.9 310L347.4 310Z"/><path d="M352.0 95L355.8 95L362.0 284L358.5 284Z"/><path d="M366.6 140L370.4 140L374.7 301L371.1 301Z"/><path d="M368.6 93L372.4 93L378.3 325L374.8 325Z"/><path d="M388.8 97L392.6 97L395.7 287L392.2 287Z"/><path d="M456.2 83L460.1 83L456.9 315L453.4 315Z"/><path d="M458.6 155L462.4 155L460.0 316L456.4 316Z"/><path d="M465.9 109L469.7 109L466.9 265L463.3 265Z"/><path d="M502.3 111L506.1 111L499.9 294L496.3 294Z"/><path d="M601.6 146L605.1 146L592.3 307L589.0 307Z"/><path d="M613.9 106L617.4 106L603.4 273L600.1 273Z"/><path d="M627.1 92L630.6 92L611.4 307L608.2 307Z"/><path d="M643.8 73L647.2 73L624.9 306L621.8 306Z"/><path d="M735.3 125L738.1 125L713.1 306L710.5 306Z"/><path d="M747.2 121L749.9 121L716.9 351L714.4 351Z"/><path d="M767.0 155L769.4 155L745.0 313L742.7 313Z"/><path d="M802.7 99L804.9 99L773.8 285L771.8 285Z"/><path d="M846.6 125L848.1 125L813.5 309L812.1 309Z"/><path d="M853.7 93L855.2 93L815.5 303L814.2 303Z"/></g><g fill="url(#ml)" fill-opacity="0.006"><path d="M27.5 142L29.0 142L65.7 344L64.3 344Z"/><path d="M60.8 150L62.9 150L94.1 337L92.1 337Z"/><path d="M116.6 129L119.3 129L140.7 282L138.1 282Z"/><path d="M149.7 89L152.8 89L181.4 322L178.6 322Z"/><path d="M166.2 140L169.3 140L191.0 324L188.1 324Z"/><path d="M166.4 119L169.5 119L193.2 323L190.4 323Z"/><path d="M184.7 140L187.9 140L208.5 328L205.5 328Z"/><path d="M189.6 84L192.9 84L213.8 284L210.8 284Z"/><path d="M201.2 114L204.5 114L223.1 299L220.0 299Z"/><path d="M201.9 93L205.3 93L226.9 311L223.8 311Z"/><path d="M210.7 124L214.1 124L234.4 334L231.3 334Z"/><path d="M218.5 84L221.9 84L243.4 319L240.3 319Z"/><path d="M234.5 131L237.9 131L253.6 312L250.4 312Z"/><path d="M245.3 154L248.8 154L262.7 323L259.4 323Z"/><path d="M250.8 111L254.3 111L272.0 337L268.8 337Z"/><path d="M263.9 123L267.5 123L283.3 341L280.0 341Z"/><path d="M292.5 134L296.1 134L308.2 333L304.8 333Z"/><path d="M304.0 113L307.7 113L319.4 329L316.0 329Z"/><path d="M322.2 157L325.8 157L333.3 315L329.9 315Z"/><path d="M345.4 94L349.2 94L355.9 283L352.4 283Z"/><path d="M356.7 138L360.5 138L366.3 322L362.8 322Z"/><path d="M360.3 146L364.0 146L369.6 335L366.2 335Z"/><path d="M402.6 132L406.4 132L408.0 284L404.4 284Z"/><path d="M432.4 128L436.2 128L435.6 358L432.1 358Z"/><path d="M497.3 166L501.0 166L495.9 324L492.4 324Z"/><path d="M510.2 74L514.1 74L505.9 294L502.4 294Z"/><path d="M625.0 82L628.5 82L610.7 285L607.5 285Z"/><path d="M632.8 128L636.2 128L618.0 324L614.8 324Z"/><path d="M660.5 107L663.9 107L638.8 347L635.8 347Z"/><path d="M677.1 132L680.3 132L655.7 349L652.8 349Z"/><path d="M679.4 159L682.5 159L662.4 333L659.5 333Z"/><path d="M694.7 95L697.8 95L672.3 309L669.4 309Z"/><path d="M755.2 111L757.8 111L728.7 310L726.2 310Z"/><path d="M762.1 107L764.7 107L734.6 309L732.2 309Z"/><path d="M783.1 135L785.3 135L751.5 346L749.4 346Z"/><path d="M791.9 92L794.2 92L762.2 290L760.0 290Z"/><path d="M790.4 112L792.7 112L766.4 274L764.3 274Z"/><path d="M798.0 147L800.1 147L774.1 301L772.2 301Z"/><path d="M833.3 85L835.0 85L797.8 293L796.2 293Z"/><path d="M832.9 113L834.4 113L807.1 264L805.6 264Z"/><path d="M843.7 104L845.8 104L807.3 312L805.4 312Z"/><path d="M836.9 165L838.6 165L810.4 315L808.8 315Z"/></g><g fill="url(#ml)" fill-opacity="0.009"><path d="M6.3 127L7.6 127L51.8 360L50.6 360Z"/><path d="M32.9 143L34.5 143L68.4 332L66.9 332Z"/><path d="M130.7 78L133.7 78L162.6 300L159.9 300Z"/><path d="M184.7 164L187.8 164L205.8 327L202.9 327Z"/><path d="M251.1 153L254.6 153L269.4 339L266.2 339Z"/><path d="M266.1 112L269.7 112L283.9 310L280.6 310Z"/><path d="M373.6 157L377.3 157L381.1 317L377.6 317Z"/><path d="M405.6 102L409.5 102L411.2 301L407.7 301Z"/><path d="M409.0 104L412.8 104L414.0 265L410.4 265Z"/><path d="M445.6 138L449.4 138L448.0 302L444.4 302Z"/><path d="M469.6 88L473.5 88L468.9 321L465.4 321Z"/><path d="M492.6 106L496.4 106L490.4 306L486.9 306Z"/><path d="M495.8 109L499.6 109L493.1 318L489.6 318Z"/><path d="M504.5 144L508.3 144L502.1 316L498.6 316Z"/><path d="M533.3 147L537.0 147L527.7 338L524.3 338Z"/><path d="M538.4 108L542.1 108L532.6 297L529.2 297Z"/><path d="M548.0 109L551.7 109L541.1 305L537.7 305Z"/><path d="M554.3 113L557.9 113L544.2 352L540.9 352Z"/><path d="M586.3 149L589.8 149L577.5 319L574.2 319Z"/><path d="M588.7 157L592.3 157L580.8 312L577.4 312Z"/><path d="M600.5 122L604.0 122L586.3 349L583.1 349Z"/><path d="M616.2 115L619.7 115L605.6 281L602.3 281Z"/><path d="M626.7 131L630.1 131L609.8 355L606.7 355Z"/><path d="M655.8 126L659.1 126L639.7 315L636.6 315Z"/><path d="M682.5 108L685.7 108L664.3 295L661.4 295Z"/><path d="M689.5 94L692.7 94L671.7 273L668.8 273Z"/><path d="M696.5 102L699.6 102L676.7 293L673.8 293Z"/><path d="M704.5 101L707.5 101L680.3 321L677.5 321Z"/><path d="M709.6 121L712.6 121L682.6 357L679.9 357Z"/><path d="M769.4 127L771.8 127L737.9 347L735.7 347Z"/><path d="M775.7 123L778.1 123L747.9 316L745.7 316Z"/><path d="M787.8 94L790.1 94L752.0 333L749.9 333Z"/><path d="M802.1 113L804.2 113L769.2 322L767.2 322Z"/><path d="M817.9 131L819.7 131L789.7 301L788.0 301Z"/><path d="M825.5 95L827.3 95L794.0 284L792.3 284Z"/><path d="M822.4 120L824.1 120L786.7 331L785.1 331Z"/><path d="M822.8 131L824.5 131L784.6 355L783.0 355Z"/><path d="M820.5 163L822.1 163L793.0 326L791.4 326Z"/><path d="M839.7 102L841.2 102L808.2 282L806.9 282Z"/><path d="M847.6 130L849.0 130L807.1 352L805.9 352Z"/></g><g fill="url(#ml)" fill-opacity="0.013"><path d="M38.1 160L39.8 160L69.9 329L68.3 329Z"/><path d="M85.2 90L87.7 90L117.5 286L115.1 286Z"/><path d="M131.0 151L133.8 151L154.8 307L152.1 307Z"/><path d="M132.2 143L135.0 143L156.0 300L153.3 300Z"/><path d="M146.4 103L149.4 103L170.2 269L167.3 269Z"/><path d="M155.0 152L158.0 152L177.8 312L175.0 312Z"/><path d="M158.4 139L161.5 139L179.7 289L176.8 289Z"/><path d="M192.0 133L195.3 133L217.8 347L214.9 347Z"/><path d="M214.8 137L218.2 137L239.1 356L236.0 356Z"/><path d="M213.5 94L216.9 94L238.7 324L235.5 324Z"/><path d="M262.4 144L266.0 144L279.3 324L276.0 324Z"/><path d="M267.8 92L271.4 92L285.7 295L282.3 295Z"/><path d="M271.9 105L275.5 105L287.3 277L283.9 277Z"/><path d="M306.8 107L310.5 107L319.9 283L316.4 283Z"/><path d="M318.1 138L321.8 138L330.5 317L327.0 317Z"/><path d="M325.8 98L329.6 98L339.0 309L335.5 309Z"/><path d="M375.7 112L379.6 112L383.6 294L380.1 294Z"/><path d="M392.9 142L396.6 142L399.6 339L396.1 339Z"/><path d="M442.4 121L446.2 121L444.5 356L441.0 356Z"/><path d="M475.1 147L478.9 147L475.1 315L471.6 315Z"/><path d="M479.5 95L483.4 95L477.9 325L474.4 325Z"/><path d="M552.3 90L556.0 90L544.3 300L540.8 300Z"/><path d="M563.8 114L567.4 114L554.4 324L551.1 324Z"/><path d="M575.0 86L578.7 86L564.0 309L560.7 309Z"/><path d="M597.0 128L600.5 128L583.8 346L580.5 346Z"/><path d="M645.9 141L649.2 141L629.1 343L626.0 343Z"/><path d="M651.6 140L654.9 140L637.5 310L634.4 310Z"/><path d="M665.5 140L668.7 140L647.2 339L644.2 339Z"/><path d="M699.8 117L702.9 117L674.5 349L671.7 349Z"/><path d="M707.9 114L710.9 114L687.0 304L684.2 304Z"/><path d="M750.9 125L753.6 125L724.6 324L722.2 324Z"/><path d="M759.4 97L762.1 97L733.6 289L731.2 289Z"/><path d="M753.3 153L755.8 153L730.9 321L728.5 321Z"/><path d="M762.6 145L765.0 145L734.4 347L732.1 347Z"/><path d="M772.0 96L774.5 96L741.4 312L739.1 312Z"/></g><g fill="url(#ml)" fill-opacity="0.016"><path d="M205.5 101L208.9 101L230.0 316L226.9 316Z"/><path d="M215.5 84L218.9 84L240.1 311L236.9 311Z"/><path d="M227.0 113L230.5 113L250.8 342L247.7 342Z"/><path d="M349.3 112L353.1 112L359.6 301L356.1 301Z"/><path d="M482.7 103L486.5 103L480.9 326L477.4 326Z"/><path d="M486.6 79L490.5 79L484.8 289L481.3 289Z"/><path d="M518.3 122L522.1 122L515.2 287L511.7 287Z"/><path d="M525.9 97L529.7 97L520.7 298L517.2 298Z"/><path d="M540.5 130L544.2 130L534.6 316L531.2 316Z"/><path d="M546.7 74L550.4 74L537.8 311L534.4 311Z"/><path d="M558.6 92L562.3 92L548.8 323L545.4 323Z"/><path d="M583.7 98L587.3 98L572.2 313L568.9 313Z"/><path d="M608.5 98L612.0 98L596.2 294L592.9 294Z"/><path d="M634.9 136L638.3 136L619.0 341L615.9 341Z"/><path d="M653.0 97L656.4 97L637.8 282L634.7 282Z"/><path d="M672.9 122L676.1 122L656.9 296L653.8 296Z"/><path d="M775.2 114L777.6 114L749.7 293L747.5 293Z"/><path d="M784.6 91L787.0 91L749.4 328L747.2 328Z"/><path d="M786.9 144L789.1 144L764.3 297L762.2 297Z"/><path d="M794.0 122L796.2 122L761.4 333L759.3 333Z"/><path d="M794.4 139L796.6 139L765.2 328L763.2 328Z"/></g><g fill="url(#ml)" fill-opacity="0.019"><path d="M114.6 83L117.5 83L147.8 303L145.2 303Z"/><path d="M125.2 126L128.0 126L149.9 287L147.2 287Z"/><path d="M140.4 133L143.3 133L171.7 353L169.1 353Z"/><path d="M195.3 85L198.7 85L222.3 316L219.2 316Z"/><path d="M246.4 131L249.9 131L265.0 319L261.8 319Z"/><path d="M310.3 111L314.0 111L325.3 330L321.9 330Z"/><path d="M313.5 111L317.2 111L328.1 329L324.7 329Z"/><path d="M382.3 110L386.2 110L389.5 284L386.0 284Z"/><path d="M385.3 90L389.1 90L392.6 284L389.0 284Z"/><path d="M395.8 117L399.6 117L402.1 306L398.6 306Z"/><path d="M398.7 84L402.5 84L405.0 287L401.4 287Z"/><path d="M523.3 80L527.1 80L517.0 316L513.5 316Z"/><path d="M527.4 136L531.1 136L523.9 293L520.4 293Z"/><path d="M567.1 110L570.8 110L558.2 309L554.9 309Z"/><path d="M568.2 144L571.8 144L560.9 312L557.6 312Z"/><path d="M578.2 133L581.8 133L568.1 333L564.7 333Z"/><path d="M586.5 103L590.1 103L573.8 331L570.5 331Z"/><path d="M660.9 157L664.1 157L645.7 329L642.7 329Z"/><path d="M676.1 117L679.3 117L661.5 276L658.5 276Z"/><path d="M703.1 69L706.2 69L677.5 306L674.7 306Z"/><path d="M759.0 155L761.5 155L734.3 335L732.0 335Z"/><path d="M775.8 134L778.2 134L744.0 352L741.8 352Z"/><path d="M789.7 138L791.9 138L756.2 356L754.2 356Z"/></g><g fill="url(#ml)" fill-opacity="0.022"><path d="M117.6 120L120.3 120L148.8 326L146.3 326Z"/><path d="M121.9 118L124.7 118L155.9 347L153.3 347Z"/><path d="M142.3 129L145.2 129L167.4 302L164.6 302Z"/><path d="M145.0 131L147.9 131L174.0 337L171.3 337Z"/><path d="M148.0 136L151.0 136L170.5 291L167.7 291Z"/><path d="M224.1 113L227.5 113L247.0 329L243.9 329Z"/><path d="M229.5 107L232.9 107L253.8 346L250.7 346Z"/><path d="M379.1 116L383.0 116L386.4 280L382.8 280Z"/><path d="M439.0 138L442.8 138L441.6 344L438.1 344Z"/><path d="M472.5 113L476.3 113L472.0 317L468.5 317Z"/><path d="M515.0 123L518.8 123L509.9 345L506.4 345Z"/><path d="M592.2 151L595.7 151L582.6 325L579.3 325Z"/><path d="M642.8 114L646.2 114L624.3 339L621.2 339Z"/><path d="M670.2 121L673.5 121L654.5 295L651.4 295Z"/><path d="M703.9 126L706.9 126L683.4 315L680.6 315Z"/><path d="M798.8 103L800.9 103L764.5 323L762.5 323Z"/></g><g fill="url(#md)" fill-opacity="0.034"><path d="M27.1 233L28.6 233L59.4 395L57.9 395Z"/><path d="M26.9 208L28.3 208L66.6 412L65.3 412Z"/><path d="M33.2 202L35.0 202L74.4 416L72.8 416Z"/><path d="M79.2 197L81.1 197L117.0 419L115.3 419Z"/><path d="M76.8 165L78.7 165L115.7 396L113.9 396Z"/><path d="M83.4 198L85.3 198L114.9 383L113.1 383Z"/><path d="M76.7 147L78.6 147L113.2 364L111.4 364Z"/><path d="M88.8 197L90.8 197L126.1 421L124.3 421Z"/><path d="M98.4 150L100.5 150L136.2 389L134.3 389Z"/><path d="M106.5 138L108.7 138L142.3 369L140.3 369Z"/><path d="M126.4 205L128.6 205L154.7 391L152.6 391Z"/><path d="M126.6 181L128.8 181L155.8 376L153.7 376Z"/><path d="M129.4 189L131.7 189L157.6 377L155.5 377Z"/><path d="M133.7 168L136.1 168L164.4 379L162.3 379Z"/><path d="M159.7 178L162.2 178L188.5 392L186.3 392Z"/><path d="M176.9 169L179.5 169L206.8 407L204.4 407Z"/><path d="M188.4 234L190.9 234L209.2 396L206.8 396Z"/><path d="M205.1 174L207.8 174L224.4 337L221.9 337Z"/><path d="M221.4 228L224.1 228L241.0 402L238.5 402Z"/><path d="M249.0 156L251.8 156L268.4 361L265.8 361Z"/><path d="M305.0 198L308.0 198L318.8 389L316.0 389Z"/><path d="M345.3 146L348.4 146L356.6 368L353.8 368Z"/><path d="M350.7 222L353.7 222L360.1 400L357.3 400Z"/><path d="M395.7 196L398.7 196L401.4 385L398.6 385Z"/><path d="M403.1 176L406.2 176L408.7 403L405.8 403Z"/><path d="M439.4 199L442.5 199L441.3 392L438.5 392Z"/><path d="M473.0 187L476.0 187L472.7 341L469.9 341Z"/><path d="M492.1 146L495.2 146L488.1 385L485.3 385Z"/><path d="M547.9 205L550.8 205L542.2 358L539.4 358Z"/><path d="M599.5 158L602.4 158L586.2 363L583.6 363Z"/><path d="M599.7 215L602.5 215L587.2 404L584.6 404Z"/><path d="M639.4 202L642.1 202L619.5 429L617.1 429Z"/><path d="M674.0 197L676.5 197L652.9 404L650.5 404Z"/><path d="M691.8 200L694.3 200L667.1 421L664.8 421Z"/><path d="M699.7 168L702.2 168L674.9 386L672.6 386Z"/><path d="M756.4 213L758.4 213L729.8 399L728.0 399Z"/><path d="M771.0 168L773.0 168L740.1 377L738.3 377Z"/><path d="M773.4 180L775.3 180L747.9 352L746.1 352Z"/><path d="M787.3 154L789.2 154L751.3 386L749.6 386Z"/><path d="M791.9 151L793.7 151L757.4 370L755.8 370Z"/><path d="M795.7 159L797.4 159L758.1 393L756.5 393Z"/><path d="M793.5 179L795.2 179L755.1 417L753.6 417Z"/><path d="M787.2 223L788.9 223L763.1 376L761.5 376Z"/><path d="M794.4 195L796.1 195L762.1 395L760.6 395Z"/><path d="M815.7 185L817.1 185L775.8 416L774.5 416Z"/><path d="M822.8 210L824.6 210L791.5 389L789.8 389Z"/><path d="M830.8 180L832.5 180L790.2 408L788.7 408Z"/><path d="M825.2 217L826.8 217L794.1 392L792.6 392Z"/><path d="M826.0 218L827.6 218L798.0 376L796.6 376Z"/></g><g fill="url(#md)" fill-opacity="0.069"><path d="M19.3 171L20.6 171L51.9 338L50.7 338Z"/><path d="M26.4 184L28.0 184L57.0 341L55.5 341Z"/><path d="M28.5 145L30.6 145L71.8 373L69.9 373Z"/><path d="M43.7 182L45.2 182L85.3 408L83.9 408Z"/><path d="M55.0 213L56.5 213L87.7 392L86.3 392Z"/><path d="M55.8 175L57.5 175L86.4 344L84.9 344Z"/><path d="M102.0 225L104.0 225L128.8 386L126.9 386Z"/><path d="M100.5 185L102.6 185L126.5 343L124.5 343Z"/><path d="M118.3 172L120.5 172L152.0 394L150.0 394Z"/><path d="M135.1 191L137.4 191L159.8 357L157.6 357Z"/><path d="M168.0 180L170.5 180L198.5 415L196.2 415Z"/><path d="M182.7 166L185.3 166L211.4 399L209.1 399Z"/><path d="M200.5 192L203.2 192L223.5 386L221.1 386Z"/><path d="M197.8 146L200.5 146L225.3 385L222.9 385Z"/><path d="M201.4 160L204.1 160L223.5 348L221.0 348Z"/><path d="M208.2 183L210.9 183L229.0 363L226.5 363Z"/><path d="M259.2 224L262.0 224L274.8 386L272.2 386Z"/><path d="M286.9 217L289.8 217L301.4 394L298.7 394Z"/><path d="M289.8 189L292.7 189L303.3 356L300.6 356Z"/><path d="M319.0 182L322.0 182L330.9 361L328.1 361Z"/><path d="M322.7 205L325.6 205L335.6 412L332.9 412Z"/><path d="M377.7 196L380.8 196L385.2 389L382.3 389Z"/><path d="M400.7 192L403.8 192L406.6 425L403.8 425Z"/><path d="M442.0 184L445.1 184L443.5 413L440.7 413Z"/><path d="M444.7 169L447.8 169L446.0 384L443.2 384Z"/><path d="M465.0 202L468.1 202L464.8 384L462.0 384Z"/><path d="M485.4 202L488.5 202L482.8 407L480.0 407Z"/><path d="M496.5 171L499.6 171L492.0 407L489.2 407Z"/><path d="M558.9 183L561.9 183L548.2 407L545.5 407Z"/><path d="M592.9 214L595.7 214L582.7 381L580.1 381Z"/><path d="M699.5 153L702.0 153L675.1 370L672.8 370Z"/><path d="M716.9 154L719.3 154L692.6 357L690.4 357Z"/><path d="M746.2 220L748.3 220L724.0 382L722.1 382Z"/><path d="M751.9 192L754.0 192L724.1 391L722.2 391Z"/><path d="M756.5 193L758.5 193L723.2 425L721.3 425Z"/><path d="M763.6 206L765.5 206L738.1 381L736.3 381Z"/><path d="M774.0 158L776.0 158L742.3 371L740.5 371Z"/><path d="M794.7 142L796.4 142L758.9 368L757.2 368Z"/></g><g fill="url(#md)" fill-opacity="0.103"><path d="M19.1 195L20.4 195L65.0 430L63.8 430Z"/><path d="M38.9 184L40.2 184L83.2 423L82.0 423Z"/><path d="M39.4 182L40.7 182L74.9 373L73.6 373Z"/><path d="M46.2 186L47.7 186L83.9 391L82.6 391Z"/><path d="M48.5 170L50.0 170L85.6 375L84.2 375Z"/><path d="M59.7 191L61.3 191L96.5 398L95.0 398Z"/><path d="M98.6 222L100.6 222L127.0 393L125.2 393Z"/><path d="M96.9 201L98.9 201L123.8 363L121.9 363Z"/><path d="M126.2 191L128.4 191L153.4 370L151.3 370Z"/><path d="M141.8 215L144.1 215L171.2 417L169.0 417Z"/><path d="M211.3 192L214.0 192L236.0 413L233.6 413Z"/><path d="M255.7 209L258.5 209L275.2 418L272.6 418Z"/><path d="M326.9 190L329.9 190L337.0 343L334.1 343Z"/><path d="M331.7 185L334.7 185L342.3 358L339.5 358Z"/><path d="M358.0 215L361.0 215L366.0 371L363.2 371Z"/><path d="M436.7 227L439.7 227L438.9 400L436.1 400Z"/><path d="M457.8 169L460.9 169L457.4 407L454.6 407Z"/><path d="M576.5 176L579.5 176L566.4 365L563.7 365Z"/><path d="M608.5 135L611.4 135L591.9 373L589.2 373Z"/><path d="M641.9 198L644.6 198L621.4 431L618.9 431Z"/><path d="M683.0 190L685.6 190L660.7 400L658.4 400Z"/><path d="M744.4 188L746.6 188L720.5 365L718.5 365Z"/><path d="M776.9 193L778.8 193L753.8 348L752.0 348Z"/><path d="M786.5 167L788.4 167L750.5 397L748.9 397Z"/><path d="M789.3 182L791.0 182L760.0 368L758.4 368Z"/><path d="M797.7 183L799.3 183L769.2 359L767.6 359Z"/><path d="M806.0 167L807.6 167L772.0 372L770.5 372Z"/><path d="M811.8 186L813.3 186L783.2 356L781.8 356Z"/><path d="M812.9 186L814.4 186L780.6 375L779.2 375Z"/><path d="M820.2 155L821.6 155L784.1 365L782.7 365Z"/><path d="M820.1 180L821.5 180L787.4 369L786.1 369Z"/><path d="M823.8 197L825.6 197L792.5 377L790.8 377Z"/><path d="M825.1 205L826.8 205L785.6 427L784.0 427Z"/></g><g fill="url(#md)" fill-opacity="0.137"><path d="M15.7 163L17.1 163L53.4 355L52.0 355Z"/><path d="M25.4 190L26.9 190L60.1 368L58.7 368Z"/><path d="M42.9 211L44.2 211L78.7 402L77.4 402Z"/><path d="M37.5 152L39.0 152L75.4 358L74.1 358Z"/><path d="M53.2 185L54.8 185L89.8 387L88.3 387Z"/><path d="M87.8 162L89.8 162L124.4 385L122.6 385Z"/><path d="M160.3 167L162.8 167L185.8 355L183.5 355Z"/><path d="M161.0 156L163.6 156L190.6 379L188.3 379Z"/><path d="M177.6 211L180.1 211L199.1 374L196.8 374Z"/><path d="M302.4 195L305.3 195L314.3 350L311.5 350Z"/><path d="M314.7 195L317.7 195L329.9 430L327.2 430Z"/><path d="M341.2 171L344.2 171L351.9 366L349.1 366Z"/><path d="M355.4 213L358.4 213L363.6 368L360.8 368Z"/><path d="M375.8 219L378.8 219L383.3 410L380.5 410Z"/><path d="M387.1 151L390.2 151L394.2 373L391.4 373Z"/><path d="M392.8 175L395.8 175L398.5 349L395.7 349Z"/><path d="M408.2 167L411.3 167L413.0 367L410.1 367Z"/><path d="M450.0 161L453.1 161L451.0 362L448.1 362Z"/><path d="M470.4 190L473.4 190L469.0 410L466.1 410Z"/><path d="M476.0 165L479.1 165L474.5 369L471.6 369Z"/><path d="M492.8 210L495.8 210L489.9 402L487.1 402Z"/><path d="M647.9 225L650.5 225L633.4 389L630.9 389Z"/><path d="M660.9 162L663.5 162L641.3 371L638.8 371Z"/><path d="M670.6 152L673.3 152L650.6 356L648.2 356Z"/><path d="M670.4 210L673.0 210L655.7 362L653.3 362Z"/><path d="M674.0 232L676.5 232L658.4 388L656.0 388Z"/><path d="M682.0 181L684.6 181L660.6 385L658.2 385Z"/><path d="M784.6 218L786.3 218L758.0 387L756.4 387Z"/><path d="M798.8 182L800.5 182L762.4 405L760.9 405Z"/><path d="M801.2 176L802.8 176L767.8 379L766.3 379Z"/><path d="M797.6 209L799.2 209L768.2 389L766.7 389Z"/><path d="M813.3 223L814.5 223L781.3 406L780.1 406Z"/><path d="M822.1 182L824.1 182L794.0 348L792.1 348Z"/><path d="M835.2 179L836.6 179L796.1 396L794.8 396Z"/></g><g fill="url(#md)" fill-opacity="0.171"><path d="M25.2 208L26.8 208L58.1 375L56.6 375Z"/><path d="M34.4 150L35.8 150L75.1 370L73.8 370Z"/><path d="M49.7 210L51.1 210L88.3 421L87.0 421Z"/><path d="M54.6 200L56.2 200L87.3 379L85.8 379Z"/><path d="M61.0 218L62.6 218L90.4 379L88.9 379Z"/><path d="M64.1 197L65.8 197L100.9 404L99.3 404Z"/><path d="M73.7 211L75.4 211L103.1 378L101.4 378Z"/><path d="M74.1 190L75.9 190L101.9 349L100.2 349Z"/><path d="M77.3 194L79.1 194L115.2 416L113.5 416Z"/><path d="M119.5 204L121.7 204L146.2 375L144.2 375Z"/><path d="M132.0 195L134.3 195L157.8 367L155.7 367Z"/><path d="M199.2 220L201.8 220L221.9 408L219.5 408Z"/><path d="M210.7 164L213.4 164L235.3 386L232.8 386Z"/><path d="M296.8 142L299.8 142L313.4 373L310.6 373Z"/><path d="M337.5 204L340.5 204L346.9 358L344.1 358Z"/><path d="M405.9 190L409.0 190L411.0 399L408.1 399Z"/><path d="M421.3 189L424.4 189L424.9 389L422.1 389Z"/><path d="M653.5 212L656.1 212L640.2 363L637.7 363Z"/><path d="M665.2 162L667.8 162L645.2 370L642.7 370Z"/><path d="M662.8 204L665.4 204L645.5 385L643.1 385Z"/><path d="M671.2 185L673.8 185L649.8 398L647.4 398Z"/><path d="M778.8 190L780.7 190L742.6 424L740.9 424Z"/><path d="M792.2 141L794.0 141L754.7 379L753.0 379Z"/><path d="M804.6 162L806.3 162L765.5 399L764.0 399Z"/><path d="M820.6 186L821.9 186L778.6 425L777.4 425Z"/><path d="M827.1 232L828.8 232L798.5 392L797.0 392Z"/></g><g fill="url(#md)" fill-opacity="0.206"><path d="M33.8 230L35.4 230L64.8 388L63.3 388Z"/><path d="M41.1 183L42.5 183L79.5 390L78.2 390Z"/><path d="M46.0 205L47.4 205L75.7 364L74.4 364Z"/><path d="M67.0 227L68.6 227L98.3 402L96.8 402Z"/><path d="M75.3 189L77.1 189L109.8 390L108.1 390Z"/><path d="M89.9 195L91.9 195L126.2 413L124.4 413Z"/><path d="M92.5 202L94.4 202L120.2 367L118.4 367Z"/><path d="M116.3 193L118.4 193L143.4 366L141.3 366Z"/><path d="M116.7 173L118.9 173L142.1 335L140.0 335Z"/><path d="M123.6 197L125.8 197L156.4 414L154.3 414Z"/><path d="M127.0 146L129.4 146L161.8 384L159.6 384Z"/><path d="M162.5 151L165.0 151L189.8 358L187.5 358Z"/><path d="M309.7 148L312.7 148L325.2 383L322.4 383Z"/><path d="M315.5 162L318.5 162L329.8 384L327.0 384Z"/><path d="M328.5 170L331.5 170L339.9 356L337.1 356Z"/><path d="M333.4 168L336.5 168L344.9 365L342.1 365Z"/><path d="M338.9 176L341.9 176L348.9 349L346.1 349Z"/><path d="M418.8 191L421.9 191L422.5 366L419.6 366Z"/><path d="M431.7 184L434.8 184L434.2 415L431.4 415Z"/><path d="M434.3 164L437.4 164L436.7 371L433.8 371Z"/><path d="M468.1 174L471.1 174L467.4 372L464.5 372Z"/><path d="M644.5 216L647.2 216L630.5 380L628.0 380Z"/><path d="M653.8 189L656.4 189L632.0 422L629.5 422Z"/><path d="M680.5 158L683.1 158L657.4 381L655.0 381Z"/><path d="M795.9 232L797.4 232L769.3 394L767.8 394Z"/><path d="M809.9 175L811.4 175L770.2 410L768.8 410Z"/><path d="M827.0 164L829.0 164L788.7 384L786.9 384Z"/><path d="M831.9 202L833.3 202L797.4 393L796.1 393Z"/><path d="M833.1 211L834.4 211L797.0 409L795.8 409Z"/></g><g fill="url(#md)" fill-opacity="0.240"><path d="M19.0 185L20.3 185L52.4 354L51.1 354Z"/><path d="M44.7 171L46.2 171L79.4 360L78.0 360Z"/><path d="M46.7 177L48.2 177L75.7 334L74.3 334Z"/><path d="M41.5 142L43.0 142L83.7 374L82.3 374Z"/><path d="M60.5 221L62.1 221L91.3 390L89.8 390Z"/><path d="M58.9 199L60.5 199L89.8 370L88.3 370Z"/><path d="M53.2 139L54.9 139L93.8 369L92.2 369Z"/><path d="M62.4 180L64.1 180L94.0 357L92.4 357Z"/><path d="M71.4 226L73.1 226L102.4 400L100.8 400Z"/><path d="M72.2 224L73.9 224L99.2 375L97.6 375Z"/><path d="M66.8 185L68.6 185L103.1 392L101.5 392Z"/><path d="M67.2 179L69.0 179L97.2 349L95.5 349Z"/><path d="M68.5 172L70.3 172L97.4 336L95.7 336Z"/><path d="M66.1 150L67.9 150L106.2 383L104.6 383Z"/><path d="M359.3 176L362.3 176L369.2 398L366.4 398Z"/><path d="M363.4 225L366.4 225L371.6 401L368.8 401Z"/><path d="M364.7 185L367.7 185L372.0 335L369.1 335Z"/><path d="M368.8 239L371.8 239L375.9 392L373.1 392Z"/><path d="M370.9 225L373.9 225L378.1 384L375.2 384Z"/><path d="M371.8 164L374.9 164L379.4 343L376.5 343Z"/><path d="M380.1 186L383.1 186L388.0 414L385.2 414Z"/><path d="M382.0 156L385.1 156L389.2 358L386.3 358Z"/><path d="M385.2 186L388.3 186L392.5 408L389.7 408Z"/><path d="M424.0 222L427.1 222L427.3 401L424.4 401Z"/><path d="M426.5 177L429.6 177L429.6 392L426.8 392Z"/><path d="M429.1 152L432.2 152L432.0 375L429.1 375Z"/><path d="M452.0 220L455.0 220L453.0 393L450.1 393Z"/><path d="M455.2 163L458.3 163L455.7 361L452.9 361Z"/><path d="M642.7 213L645.3 213L624.6 418L622.1 418Z"/><path d="M661.3 179L663.9 179L641.5 386L639.1 386Z"/><path d="M807.0 174L808.5 174L772.7 379L771.3 379Z"/><path d="M810.9 157L812.4 157L773.1 383L771.7 383Z"/><path d="M801.3 218L802.8 218L768.6 414L767.1 414Z"/><path d="M810.2 179L811.7 179L776.3 380L774.9 380Z"/><path d="M805.7 231L807.1 231L778.8 390L777.4 390Z"/><path d="M826.1 177L828.0 177L785.3 410L783.6 410Z"/><path d="M836.2 189L837.7 189L792.4 429L791.0 429Z"/><path d="M845.3 151L846.7 151L803.0 382L801.6 382Z"/><path d="M841.8 175L843.4 175L801.4 396L799.9 396Z"/></g><g fill="url(#ml)" fill-opacity="0.010"><path d="M33.7 217L35.4 217L65.1 378L63.6 378Z"/><path d="M25.2 165L27.0 165L70.9 403L69.3 403Z"/><path d="M35.7 192L37.7 192L71.9 381L70.0 381Z"/><path d="M75.0 163L76.8 163L114.3 395L112.6 395Z"/><path d="M99.6 169L101.7 169L136.7 402L134.8 402Z"/><path d="M116.4 228L118.5 228L143.7 400L141.8 400Z"/><path d="M157.6 192L160.1 192L184.4 387L182.2 387Z"/><path d="M171.2 191L173.8 191L193.2 355L190.8 355Z"/><path d="M173.4 192L176.0 192L198.5 384L196.2 384Z"/><path d="M192.4 233L194.9 233L212.1 388L209.7 388Z"/><path d="M188.2 177L190.8 177L208.7 339L206.2 339Z"/><path d="M196.3 212L198.9 212L217.8 388L215.4 388Z"/><path d="M261.5 224L264.3 224L276.7 384L274.1 384Z"/><path d="M271.4 200L274.3 200L287.8 388L285.2 388Z"/><path d="M276.5 171L279.4 171L292.5 361L289.8 361Z"/><path d="M287.6 192L290.5 192L303.1 388L300.4 388Z"/><path d="M290.2 157L293.2 157L306.1 364L303.4 364Z"/><path d="M305.4 162L308.4 162L320.6 381L317.8 381Z"/><path d="M306.8 140L309.8 140L322.5 375L319.7 375Z"/><path d="M351.7 179L354.8 179L363.0 417L360.2 417Z"/><path d="M411.1 203L414.2 203L415.7 415L412.9 415Z"/><path d="M447.0 205L450.1 205L448.2 399L445.4 399Z"/><path d="M488.3 190L491.3 190L484.6 425L481.9 425Z"/><path d="M502.0 162L505.0 162L497.6 376L494.8 376Z"/><path d="M534.6 225L537.5 225L529.6 380L526.9 380Z"/><path d="M585.0 159L587.9 159L574.3 348L571.5 348Z"/><path d="M584.4 200L587.3 200L573.7 386L571.0 386Z"/><path d="M591.2 173L594.1 173L577.6 391L575.0 391Z"/><path d="M624.5 142L627.4 142L606.6 373L604.0 373Z"/><path d="M619.6 222L622.4 222L605.7 406L603.2 406Z"/><path d="M640.4 168L643.2 168L622.5 379L620.0 379Z"/><path d="M690.1 181L692.6 181L672.3 348L670.0 348Z"/><path d="M716.6 172L718.9 172L694.5 355L692.3 355Z"/><path d="M744.5 164L746.7 164L712.4 400L710.4 400Z"/><path d="M740.9 223L743.0 223L717.2 398L715.2 398Z"/><path d="M760.9 174L762.9 174L728.6 398L726.8 398Z"/><path d="M813.6 212L814.9 212L786.3 371L785.0 371Z"/></g><g fill="url(#ml)" fill-opacity="0.020"><path d="M33.5 196L35.4 196L65.3 359L63.5 359Z"/><path d="M40.5 202L41.8 202L80.7 418L79.5 418Z"/><path d="M96.3 178L98.3 178L121.5 330L119.6 330Z"/><path d="M155.0 202L157.4 202L181.0 388L178.7 388Z"/><path d="M212.1 155L214.8 155L236.5 377L233.9 377Z"/><path d="M219.9 190L222.6 190L243.9 412L241.4 412Z"/><path d="M261.8 167L264.7 167L281.8 394L279.2 394Z"/><path d="M278.3 162L281.2 162L296.9 393L294.2 393Z"/><path d="M297.4 232L300.3 232L310.3 396L307.6 396Z"/><path d="M344.9 200L347.9 200L355.8 409L353.1 409Z"/><path d="M479.2 141L482.3 141L476.6 380L473.7 380Z"/><path d="M479.6 234L482.6 234L478.5 398L475.7 398Z"/><path d="M483.8 163L486.9 163L480.9 393L478.1 393Z"/><path d="M507.3 156L510.4 156L502.2 379L499.4 379Z"/><path d="M508.5 193L511.5 193L503.4 407L500.7 407Z"/><path d="M537.8 208L540.8 208L532.0 378L529.2 378Z"/><path d="M570.3 196L573.2 196L558.3 420L555.7 420Z"/><path d="M600.9 171L603.8 171L589.9 344L587.2 344Z"/><path d="M615.6 164L618.4 164L602.4 350L599.7 350Z"/><path d="M614.7 201L617.5 201L597.5 430L595.0 430Z"/><path d="M705.3 201L707.6 201L684.8 377L682.6 377Z"/><path d="M717.8 177L720.1 177L692.3 385L690.1 385Z"/><path d="M739.4 164L741.6 164L708.1 398L706.1 398Z"/><path d="M739.0 213L741.2 213L715.6 389L713.6 389Z"/><path d="M750.9 210L752.9 210L724.2 400L722.3 400Z"/><path d="M775.9 155L777.8 155L746.1 356L744.3 356Z"/><path d="M780.6 144L782.6 144L745.1 378L743.3 378Z"/><path d="M772.3 205L774.2 205L747.1 373L745.4 373Z"/></g><g fill="url(#ml)" fill-opacity="0.030"><path d="M35.9 202L37.8 202L71.2 385L69.4 385Z"/><path d="M80.4 162L82.3 162L112.2 350L110.4 350Z"/><path d="M112.1 220L114.2 220L142.4 411L140.4 411Z"/><path d="M115.6 233L117.7 233L141.1 392L139.1 392Z"/><path d="M138.1 173L140.4 173L162.6 340L160.4 340Z"/><path d="M140.3 162L142.7 162L167.6 352L165.4 352Z"/><path d="M157.0 172L159.5 172L180.6 342L178.3 342Z"/><path d="M189.9 173L192.6 173L212.6 357L210.2 357Z"/><path d="M229.7 199L232.4 199L250.3 394L247.8 394Z"/><path d="M229.8 175L232.6 175L249.7 364L247.1 364Z"/><path d="M238.2 193L241.0 193L257.9 386L255.3 386Z"/><path d="M247.8 169L250.6 169L264.5 338L261.8 338Z"/><path d="M263.9 226L266.8 226L279.2 389L276.6 389Z"/><path d="M265.1 180L268.0 180L282.3 372L279.6 372Z"/><path d="M274.4 176L277.3 176L288.8 339L286.0 339Z"/><path d="M323.3 167L326.3 167L336.2 377L333.4 377Z"/><path d="M413.6 183L416.6 183L417.8 376L414.9 376Z"/><path d="M460.7 145L463.8 145L460.2 380L457.3 380Z"/><path d="M511.1 191L514.1 191L505.2 419L502.5 419Z"/><path d="M518.9 185L522.0 185L513.2 391L510.4 391Z"/><path d="M526.1 194L529.1 194L520.5 381L517.7 381Z"/><path d="M540.8 199L543.8 199L533.9 384L531.2 384Z"/><path d="M544.2 181L547.2 181L537.7 356L534.9 356Z"/><path d="M552.3 169L555.3 169L544.4 359L541.6 359Z"/><path d="M554.9 210L557.9 210L546.3 403L543.5 403Z"/><path d="M564.8 169L567.7 169L554.2 383L551.4 383Z"/><path d="M567.4 204L570.3 204L559.1 375L556.4 375Z"/><path d="M574.9 235L577.7 235L566.7 392L564.0 392Z"/><path d="M591.3 203L594.1 203L578.5 408L575.8 408Z"/><path d="M612.2 177L615.0 177L598.1 375L595.5 375Z"/><path d="M616.2 210L619.0 210L600.9 415L598.3 415Z"/><path d="M697.4 217L699.8 217L675.6 409L673.3 409Z"/><path d="M707.6 152L710.1 152L682.9 365L680.6 365Z"/><path d="M739.1 153L741.4 153L710.4 371L708.3 371Z"/><path d="M751.2 218L753.2 218L723.8 411L721.9 411Z"/><path d="M786.6 234L788.3 234L762.0 389L760.4 389Z"/><path d="M815.8 194L817.2 194L784.7 375L783.5 375Z"/><path d="M829.5 205L831.0 205L800.7 367L799.3 367Z"/></g><g fill="url(#ml)" fill-opacity="0.040"><path d="M98.8 184L100.9 184L133.9 402L132.0 402Z"/><path d="M147.8 176L150.2 176L178.7 397L176.5 397Z"/><path d="M223.9 161L226.7 161L246.6 375L244.0 375Z"/><path d="M234.3 200L237.1 200L252.2 369L249.6 369Z"/><path d="M238.4 169L241.2 169L256.4 345L253.8 345Z"/><path d="M241.0 145L243.8 145L263.5 378L260.8 378Z"/><path d="M297.8 200L300.7 200L313.4 412L310.7 412Z"/><path d="M503.5 192L506.5 192L501.2 343L498.3 343Z"/><path d="M532.4 167L535.4 167L526.9 343L524.0 343Z"/><path d="M568.1 155L571.0 155L557.5 365L554.8 365Z"/><path d="M688.5 161L691.0 161L662.7 398L660.4 398Z"/><path d="M722.2 184L724.6 184L696.3 392L694.1 392Z"/><path d="M735.0 206L737.2 206L706.4 421L704.4 421Z"/><path d="M803.0 231L804.4 231L777.5 383L776.1 383Z"/></g><g fill="url(#ml)" fill-opacity="0.050"><path d="M139.5 170L141.9 170L169.6 380L167.4 380Z"/><path d="M149.5 174L152.0 174L180.4 397L178.1 397Z"/><path d="M244.6 214L247.4 214L264.5 415L262.0 415Z"/><path d="M246.3 180L249.2 180L265.2 374L262.6 374Z"/><path d="M513.6 193L516.6 193L509.8 361L507.0 361Z"/><path d="M517.4 160L520.5 160L512.6 350L509.8 350Z"/><path d="M522.6 158L525.7 158L515.2 397L512.4 397Z"/><path d="M545.8 198L548.7 198L537.5 402L534.8 402Z"/><path d="M591.1 142L594.0 142L576.9 372L574.2 372Z"/><path d="M606.0 195L608.8 195L591.8 399L589.2 399Z"/><path d="M611.7 154L614.6 154L595.4 381L592.8 381Z"/><path d="M625.1 212L627.8 212L612.1 382L609.5 382Z"/><path d="M632.8 224L635.5 224L620.6 378L618.0 378Z"/><path d="M696.8 207L699.2 207L674.5 404L672.2 404Z"/><path d="M710.2 147L712.6 147L682.2 384L680.0 384Z"/><path d="M715.8 219L718.1 219L697.4 372L695.3 372Z"/><path d="M725.7 172L728.0 172L702.4 360L700.2 360Z"/><path d="M729.0 175L731.2 175L703.8 373L701.7 373Z"/><path d="M735.1 157L737.4 157L708.5 363L706.4 363Z"/><path d="M733.5 181L735.8 181L706.9 385L704.8 385Z"/><path d="M761.0 204L763.0 204L733.7 392L731.8 392Z"/><path d="M763.9 194L765.9 194L737.3 377L735.5 377Z"/></g><g fill="url(#ml)" fill-opacity="0.060"><path d="M146.1 192L148.5 192L172.7 378L170.5 378Z"/><path d="M143.0 153L145.4 153L171.4 354L169.2 354Z"/><path d="M220.9 177L223.6 177L246.0 413L243.5 413Z"/><path d="M236.1 195L238.9 195L259.2 425L256.7 425Z"/><path d="M523.4 199L526.4 199L519.5 351L516.7 351Z"/><path d="M533.6 194L536.6 194L527.2 384L524.4 384Z"/><path d="M634.8 180L637.5 180L618.3 380L615.8 380Z"/><path d="M723.2 150L725.6 150L695.5 374L693.3 374Z"/><path d="M725.5 187L727.8 187L697.7 405L695.6 405Z"/></g><g fill="url(#ml)" fill-opacity="0.070"><path d="M224.2 188L226.9 188L241.1 340L238.6 340Z"/><path d="M416.2 183L419.2 183L420.0 343L417.1 343Z"/><path d="M529.4 177L532.4 177L522.4 389L519.6 389Z"/><path d="M552.1 217L555.0 217L545.5 378L542.8 378Z"/><path d="M627.7 158L630.5 158L609.6 386L607.0 386Z"/><path d="M627.4 210L630.2 210L613.5 388L610.9 388Z"/><path d="M633.2 172L636.0 172L614.7 397L612.2 397Z"/><path d="M733.0 158L735.3 158L702.3 396L700.2 396Z"/></g><g fill="url(#md)" fill-opacity="0.033"><path d="M30.4 250L31.8 250L61.5 407L60.2 407Z"/><path d="M40.0 267L41.3 267L80.3 476L79.0 476Z"/><path d="M40.7 266L42.2 266L78.6 462L77.2 462Z"/><path d="M55.6 278L57.6 278L94.0 481L92.2 481Z"/><path d="M93.9 254L95.6 254L128.0 457L126.4 457Z"/><path d="M116.0 206L118.0 206L152.6 444L150.8 444Z"/><path d="M142.2 286L144.2 286L170.8 478L168.9 478Z"/><path d="M158.9 270L161.0 270L183.7 446L181.7 446Z"/><path d="M170.9 260L173.1 260L201.4 491L199.4 491Z"/><path d="M206.0 291L208.3 291L227.5 469L225.3 469Z"/><path d="M223.5 223L226.0 223L248.3 457L246.1 457Z"/><path d="M232.0 251L234.5 251L252.0 439L249.7 439Z"/><path d="M281.7 268L284.2 268L298.6 474L296.2 474Z"/><path d="M306.3 262L309.0 262L318.2 422L315.8 422Z"/><path d="M308.4 261L311.0 261L320.9 435L318.5 435Z"/><path d="M358.6 274L361.3 274L368.2 486L365.8 486Z"/><path d="M358.7 212L361.4 212L368.6 436L366.1 436Z"/><path d="M366.3 241L369.1 241L375.4 460L372.9 460Z"/><path d="M406.3 216L409.1 216L411.4 455L408.9 455Z"/><path d="M534.2 274L536.8 274L529.0 424L526.6 424Z"/><path d="M560.9 253L563.5 253L549.6 471L547.2 471Z"/><path d="M572.6 204L575.2 204L559.0 444L556.5 444Z"/><path d="M586.1 251L588.6 251L576.8 407L574.4 407Z"/><path d="M595.6 285L598.1 285L583.4 465L581.1 465Z"/><path d="M605.2 216L607.8 216L587.9 454L585.6 454Z"/><path d="M619.8 278L622.2 278L606.2 451L603.9 451Z"/><path d="M653.3 246L655.7 246L637.9 412L635.7 412Z"/><path d="M653.4 263L655.7 263L637.9 427L635.7 427Z"/><path d="M656.1 304L658.4 304L641.6 455L639.4 455Z"/><path d="M663.8 267L666.1 267L648.8 420L646.6 420Z"/><path d="M702.3 296L704.4 296L683.2 454L681.3 454Z"/><path d="M721.4 289L723.4 289L700.6 449L698.8 449Z"/><path d="M723.9 282L725.8 282L703.1 441L701.3 441Z"/><path d="M729.7 252L731.7 252L709.6 405L707.8 405Z"/><path d="M740.2 286L742.0 286L713.2 476L711.5 476Z"/><path d="M744.7 291L746.5 291L718.0 476L716.3 476Z"/><path d="M778.3 253L779.9 253L747.3 448L745.8 448Z"/><path d="M778.5 258L780.1 258L750.0 438L748.5 438Z"/><path d="M782.5 240L784.1 240L755.8 409L754.3 409Z"/><path d="M787.9 273L789.3 273L752.9 484L751.5 484Z"/><path d="M826.4 237L827.9 237L792.6 424L791.3 424Z"/></g><g fill="url(#md)" fill-opacity="0.066"><path d="M45.3 286L46.8 286L76.5 446L75.1 446Z"/><path d="M37.6 239L39.1 239L76.8 443L75.4 443Z"/><path d="M56.6 263L57.9 263L94.4 468L93.2 468Z"/><path d="M82.5 287L84.0 287L111.0 448L109.5 448Z"/><path d="M90.8 250L92.5 250L120.8 426L119.2 426Z"/><path d="M98.0 287L99.7 287L126.4 454L124.8 454Z"/><path d="M104.1 280L105.9 280L137.1 480L135.4 480Z"/><path d="M105.8 223L107.6 223L138.9 430L137.2 430Z"/><path d="M112.6 250L114.5 250L147.0 467L145.2 467Z"/><path d="M115.2 258L117.1 258L144.6 443L142.9 443Z"/><path d="M150.3 254L152.4 254L181.4 473L179.4 473Z"/><path d="M152.7 260L154.8 260L185.6 494L183.7 494Z"/><path d="M253.5 247L256.0 247L269.1 405L266.7 405Z"/><path d="M257.8 250L260.3 250L274.4 425L272.1 425Z"/><path d="M266.7 286L269.2 286L284.9 487L282.5 487Z"/><path d="M268.5 283L271.0 283L285.0 465L282.7 465Z"/><path d="M320.8 253L323.4 253L331.6 414L329.1 414Z"/><path d="M335.7 246L338.4 246L346.8 441L344.3 441Z"/><path d="M355.8 257L358.5 257L364.8 442L362.3 442Z"/><path d="M388.7 242L391.4 242L395.0 441L392.5 441Z"/><path d="M397.7 247L400.4 247L402.9 426L400.4 426Z"/><path d="M433.6 262L436.3 262L435.5 497L433.1 497Z"/><path d="M440.3 249L443.1 249L441.7 456L439.2 456Z"/><path d="M468.6 288L471.3 288L467.4 482L464.9 482Z"/><path d="M479.4 294L482.1 294L478.1 450L475.6 450Z"/><path d="M541.0 226L543.7 226L531.7 448L529.3 448Z"/><path d="M543.9 212L546.6 212L533.7 447L531.3 447Z"/><path d="M557.3 276L559.9 276L546.4 491L544.0 491Z"/><path d="M561.6 275L564.2 275L552.6 453L550.2 453Z"/><path d="M570.0 273L572.6 273L557.6 491L555.2 491Z"/><path d="M573.3 285L575.9 285L562.2 478L559.8 478Z"/><path d="M614.3 251L616.8 251L595.9 486L593.6 486Z"/><path d="M613.0 288L615.5 288L598.6 475L596.4 475Z"/><path d="M639.1 276L641.4 276L625.8 429L623.6 429Z"/><path d="M665.9 232L668.2 232L644.4 444L642.3 444Z"/><path d="M665.3 286L667.5 286L646.4 469L644.3 469Z"/><path d="M706.6 275L708.7 275L686.3 442L684.4 442Z"/><path d="M707.6 280L709.7 280L684.4 466L682.5 466Z"/><path d="M714.9 249L717.0 249L687.7 463L685.8 463Z"/><path d="M733.4 246L735.4 246L701.4 480L699.6 480Z"/><path d="M751.0 259L752.8 259L729.4 410L727.7 410Z"/><path d="M777.6 251L779.1 251L739.2 491L737.7 491Z"/><path d="M789.3 213L790.8 213L751.4 446L750.0 446Z"/><path d="M780.7 288L782.1 288L749.2 480L747.8 480Z"/><path d="M784.8 281L786.2 281L758.4 442L757.0 442Z"/><path d="M801.4 242L802.7 242L772.8 411L771.5 411Z"/><path d="M798.1 269L799.4 269L763.6 471L762.3 471Z"/><path d="M807.5 226L808.7 226L769.1 448L767.9 448Z"/><path d="M811.6 244L813.4 244L775.7 451L774.0 451Z"/><path d="M818.2 263L819.5 263L782.8 459L781.5 459Z"/><path d="M818.0 268L819.3 268L785.1 451L783.8 451Z"/></g><g fill="url(#md)" fill-opacity="0.099"><path d="M42.5 228L44.3 228L84.6 450L82.9 450Z"/><path d="M60.3 242L61.7 242L96.6 442L95.3 442Z"/><path d="M73.3 245L74.8 245L112.4 468L111.0 468Z"/><path d="M73.4 239L74.9 239L109.6 445L108.1 445Z"/><path d="M153.9 257L156.0 257L186.3 488L184.3 488Z"/><path d="M206.3 260L208.7 260L231.8 479L229.7 479Z"/><path d="M203.6 216L206.0 216L229.6 442L227.4 442Z"/><path d="M214.1 281L216.4 281L236.5 475L234.3 475Z"/><path d="M215.4 276L217.8 276L233.4 428L231.1 428Z"/><path d="M229.3 263L231.7 263L250.2 458L248.0 458Z"/><path d="M303.2 245L305.9 245L317.9 449L315.4 449Z"/><path d="M317.8 236L320.4 236L329.8 417L327.3 417Z"/><path d="M335.2 285L337.9 285L345.2 451L342.8 451Z"/><path d="M368.4 237L371.2 237L377.7 473L375.2 473Z"/><path d="M371.4 265L374.1 265L379.7 475L377.2 475Z"/><path d="M402.6 279L405.3 279L407.7 485L405.2 485Z"/><path d="M431.3 290L434.0 290L433.6 456L431.1 456Z"/><path d="M453.1 301L455.8 301L453.8 455L451.3 455Z"/><path d="M456.1 240L458.9 240L455.6 471L453.1 471Z"/><path d="M457.8 283L460.5 283L457.7 466L455.2 466Z"/><path d="M482.6 256L485.3 256L481.1 415L478.5 415Z"/><path d="M486.7 266L489.4 266L484.1 453L481.6 453Z"/><path d="M557.9 232L560.6 232L546.8 454L544.4 454Z"/><path d="M577.2 258L579.8 258L566.8 440L564.4 440Z"/><path d="M593.4 287L595.9 287L582.3 456L580.0 456Z"/><path d="M617.5 261L619.9 261L599.2 488L597.0 488Z"/><path d="M643.0 255L645.4 255L625.9 444L623.7 444Z"/><path d="M650.0 260L652.4 260L634.7 426L632.5 426Z"/><path d="M697.7 245L699.9 245L679.1 406L677.1 406Z"/><path d="M723.3 233L725.3 233L695.6 446L693.7 446Z"/><path d="M759.8 268L761.5 268L734.2 439L732.6 439Z"/><path d="M790.5 242L792.0 242L756.1 450L754.7 450Z"/><path d="M805.4 255L807.3 255L778.0 418L776.1 418Z"/><path d="M821.5 254L822.7 254L794.3 405L793.1 405Z"/><path d="M818.3 275L819.8 275L790.0 434L788.5 434Z"/></g><g fill="url(#md)" fill-opacity="0.131"><path d="M37.6 265L39.3 265L75.4 458L73.9 458Z"/><path d="M43.3 240L45.1 240L84.3 455L82.6 455Z"/><path d="M56.8 277L58.8 277L87.0 435L85.2 435Z"/><path d="M60.4 237L61.8 237L95.9 433L94.6 433Z"/><path d="M65.6 257L67.0 257L99.3 443L98.0 443Z"/><path d="M69.3 273L70.7 273L101.2 449L99.8 449Z"/><path d="M82.6 275L84.1 275L117.2 474L115.8 474Z"/><path d="M89.7 221L91.5 221L125.2 433L123.6 433Z"/><path d="M97.6 214L99.4 214L133.6 435L131.9 435Z"/><path d="M117.3 307L119.1 307L142.0 458L140.3 458Z"/><path d="M217.7 280L220.1 280L238.9 466L236.7 466Z"/><path d="M219.5 279L221.9 279L240.5 465L238.3 465Z"/><path d="M232.8 279L235.2 279L252.9 468L250.6 468Z"/><path d="M271.3 240L273.9 240L286.4 410L284.0 410Z"/><path d="M341.4 226L344.1 226L353.1 449L350.6 449Z"/><path d="M344.8 256L347.5 256L356.1 476L353.7 476Z"/><path d="M349.9 276L352.6 276L360.2 480L357.7 480Z"/><path d="M350.8 239L353.5 239L359.7 412L357.2 412Z"/><path d="M362.3 255L365.0 255L372.1 483L369.6 483Z"/><path d="M364.0 239L366.8 239L372.5 433L370.0 433Z"/><path d="M413.6 281L416.4 281L417.7 493L415.2 493Z"/><path d="M437.9 279L440.6 279L439.6 483L437.1 483Z"/><path d="M536.6 268L539.2 268L531.0 425L528.5 425Z"/><path d="M597.2 289L599.7 289L586.0 455L583.7 455Z"/><path d="M672.7 310L674.9 310L656.6 463L654.6 463Z"/><path d="M697.4 260L699.6 260L672.6 469L670.6 469Z"/><path d="M701.3 255L703.4 255L676.9 458L675.0 458Z"/><path d="M734.6 228L736.6 228L702.5 464L700.7 464Z"/><path d="M745.0 245L746.9 245L720.7 418L719.0 418Z"/><path d="M748.3 241L750.2 241L714.6 475L712.9 475Z"/><path d="M745.7 268L747.5 268L721.5 438L719.7 438Z"/><path d="M771.5 267L773.2 267L741.4 460L739.9 460Z"/><path d="M773.2 264L774.8 264L737.9 487L736.4 487Z"/><path d="M796.9 262L798.2 262L771.4 414L770.1 414Z"/><path d="M810.9 255L812.7 255L776.7 451L775.1 451Z"/><path d="M811.4 294L812.8 294L783.0 454L781.7 454Z"/></g><g fill="url(#md)" fill-opacity="0.164"><path d="M34.4 253L36.0 253L64.8 407L63.4 407Z"/><path d="M63.0 281L64.3 281L96.5 463L95.2 463Z"/><path d="M58.4 251L59.7 251L89.7 421L88.4 421Z"/><path d="M80.6 237L82.3 237L120.6 471L119.1 471Z"/><path d="M86.9 268L88.5 268L116.9 442L115.4 442Z"/><path d="M85.6 225L87.3 225L123.6 450L122.0 450Z"/><path d="M105.2 295L106.9 295L133.7 465L132.0 465Z"/><path d="M109.9 285L111.7 285L135.2 437L133.5 437Z"/><path d="M211.1 270L213.4 270L230.5 434L228.3 434Z"/><path d="M260.4 231L262.9 231L281.6 469L279.3 469Z"/><path d="M339.1 276L341.8 276L350.5 481L348.0 481Z"/><path d="M422.5 278L425.2 278L425.6 485L423.1 485Z"/><path d="M435.7 283L438.4 283L437.7 448L435.2 448Z"/><path d="M584.7 241L587.3 241L574.4 414L572.0 414Z"/><path d="M771.2 283L772.8 283L747.7 434L746.2 434Z"/><path d="M786.1 261L787.6 261L748.0 493L746.6 493Z"/><path d="M794.1 232L795.6 232L757.5 452L756.2 452Z"/><path d="M784.6 298L786.0 298L758.3 457L756.9 457Z"/><path d="M794.3 247L795.7 247L754.1 486L752.8 486Z"/><path d="M791.7 277L793.1 277L764.1 442L762.9 442Z"/><path d="M795.4 266L796.8 266L767.7 431L766.5 431Z"/><path d="M806.3 266L808.1 266L769.2 480L767.5 480Z"/><path d="M818.2 235L819.9 235L782.3 438L780.8 438Z"/><path d="M824.7 251L826.1 251L793.1 426L791.9 426Z"/></g><g fill="url(#md)" fill-opacity="0.197"><path d="M32.2 251L33.5 251L68.2 435L67.0 435Z"/><path d="M41.2 247L42.8 247L72.1 406L70.5 406Z"/><path d="M46.4 235L48.3 235L90.8 471L89.1 471Z"/><path d="M57.8 261L59.1 261L87.4 421L86.2 421Z"/><path d="M86.9 307L88.4 307L114.7 465L113.3 465Z"/><path d="M82.1 266L83.7 266L109.8 424L108.3 424Z"/><path d="M79.2 236L80.9 236L118.1 461L116.6 461Z"/><path d="M100.0 277L101.7 277L136.2 495L134.6 495Z"/><path d="M105.6 274L107.4 274L131.9 431L130.2 431Z"/><path d="M221.0 276L223.4 276L239.1 434L236.8 434Z"/><path d="M221.0 237L223.4 237L240.6 413L238.3 413Z"/><path d="M340.2 249L342.8 249L351.1 450L348.7 450Z"/><path d="M429.1 257L431.8 257L431.6 460L429.1 460Z"/><path d="M484.5 267L487.2 267L481.3 480L478.8 480Z"/><path d="M714.7 239L716.8 239L687.3 456L685.4 456Z"/><path d="M780.3 272L781.8 272L752.2 447L750.8 447Z"/><path d="M792.9 260L794.3 260L762.3 444L761.0 444Z"/><path d="M812.7 252L814.4 252L777.1 455L775.5 455Z"/><path d="M807.3 288L808.9 288L776.1 466L774.6 466Z"/><path d="M825.9 250L827.4 250L789.7 448L788.4 448Z"/></g><g fill="url(#md)" fill-opacity="0.230"><path d="M29.8 251L31.0 251L67.2 442L66.1 442Z"/><path d="M34.4 267L35.8 267L72.9 463L71.6 463Z"/><path d="M37.8 276L39.3 276L69.9 439L68.5 439Z"/><path d="M34.6 217L36.2 217L75.9 433L74.4 433Z"/><path d="M49.9 289L51.5 289L81.9 454L80.3 454Z"/><path d="M56.1 296L57.9 296L87.5 459L85.7 459Z"/><path d="M61.6 295L62.9 295L93.1 465L91.9 465Z"/><path d="M50.8 226L52.1 226L88.1 429L86.9 429Z"/><path d="M50.0 213L51.4 213L92.2 443L91.0 443Z"/><path d="M54.0 221L55.4 221L94.9 446L93.6 446Z"/><path d="M60.4 252L61.8 252L96.2 449L95.0 449Z"/><path d="M58.2 235L59.6 235L99.8 465L98.5 465Z"/><path d="M61.3 221L62.8 221L101.0 443L99.7 443Z"/><path d="M63.4 228L64.8 228L102.7 448L101.4 448Z"/><path d="M73.4 280L74.8 280L105.5 459L104.1 459Z"/><path d="M65.3 228L66.8 228L106.4 459L105.0 459Z"/><path d="M78.5 299L79.9 299L108.6 467L107.2 467Z"/><path d="M75.5 276L77.0 276L108.3 460L106.9 460Z"/><path d="M70.6 241L72.1 241L104.9 434L103.5 434Z"/><path d="M75.6 265L77.2 265L109.0 453L107.5 453Z"/><path d="M89.7 279L91.3 279L125.5 488L123.9 488Z"/><path d="M91.4 282L93.0 282L118.5 439L117.0 439Z"/><path d="M88.7 259L90.4 259L125.2 473L123.6 473Z"/><path d="M91.3 268L93.0 268L128.6 488L127.0 488Z"/><path d="M92.3 221L94.0 221L127.9 435L126.2 435Z"/><path d="M222.5 272L224.9 272L243.2 457L241.0 457Z"/><path d="M409.1 272L411.9 272L413.3 436L410.7 436Z"/><path d="M411.6 297L414.3 297L415.4 448L412.9 448Z"/><path d="M424.5 208L427.3 208L427.6 445L425.0 445Z"/><path d="M697.2 274L699.3 274L678.9 431L676.9 431Z"/><path d="M786.8 240L788.3 240L758.3 416L756.9 416Z"/><path d="M777.4 301L778.9 301L750.8 466L749.4 466Z"/><path d="M796.9 242L798.3 242L762.3 448L761.0 448Z"/><path d="M787.0 309L788.3 309L761.5 462L760.2 462Z"/><path d="M801.3 247L802.7 247L767.5 445L766.3 445Z"/><path d="M819.7 233L821.3 233L787.6 415L786.1 415Z"/><path d="M809.4 294L810.9 294L780.7 457L779.3 457Z"/><path d="M823.7 223L825.2 223L782.1 454L780.7 454Z"/><path d="M825.5 257L826.9 257L785.7 474L784.4 474Z"/><path d="M832.7 224L834.1 224L792.0 445L790.7 445Z"/></g><g fill="url(#ml)" fill-opacity="0.016"><path d="M118.5 262L120.4 262L143.1 415L141.3 415Z"/><path d="M115.6 233L117.5 233L152.0 467L150.2 467Z"/><path d="M127.7 305L129.6 305L153.3 467L151.5 467Z"/><path d="M134.0 269L135.9 269L158.3 428L156.4 428Z"/><path d="M154.0 245L156.1 245L184.1 461L182.1 461Z"/><path d="M162.2 271L164.3 271L191.0 479L189.0 479Z"/><path d="M175.2 239L177.4 239L205.1 471L203.1 471Z"/><path d="M181.0 259L183.3 259L208.4 472L206.4 472Z"/><path d="M180.6 240L182.8 240L207.9 454L205.8 454Z"/><path d="M190.2 246L192.5 246L210.0 401L207.9 401Z"/><path d="M204.2 257L206.5 257L226.9 449L224.8 449Z"/><path d="M269.5 270L272.0 270L288.9 492L286.6 492Z"/><path d="M277.4 266L279.9 266L296.6 498L294.3 498Z"/><path d="M301.0 279L303.6 279L315.4 472L313.0 472Z"/><path d="M321.6 227L324.3 227L335.8 458L333.4 458Z"/><path d="M331.0 239L333.7 239L343.0 445L340.6 445Z"/><path d="M352.4 223L355.1 223L363.2 454L360.7 454Z"/><path d="M374.3 290L377.0 290L381.5 466L379.0 466Z"/><path d="M378.3 275L381.0 275L384.8 435L382.2 435Z"/><path d="M386.6 252L389.4 252L393.4 465L390.9 465Z"/><path d="M393.9 287L396.6 287L399.1 443L396.6 443Z"/><path d="M404.2 232L407.0 232L409.2 440L406.7 440Z"/><path d="M420.2 270L422.9 270L423.6 481L421.1 481Z"/><path d="M460.8 226L463.6 226L459.8 459L457.3 459Z"/><path d="M465.1 242L467.8 242L464.0 449L461.5 449Z"/><path d="M466.9 262L469.6 262L466.3 434L463.8 434Z"/><path d="M475.4 281L478.1 281L473.6 471L471.1 471Z"/><path d="M496.1 247L498.8 247L491.3 476L488.8 476Z"/><path d="M512.3 227L515.0 227L506.2 447L503.7 447Z"/><path d="M525.2 235L527.9 235L519.2 422L516.7 422Z"/><path d="M551.4 269L554.0 269L541.2 484L538.8 484Z"/><path d="M551.2 308L553.8 308L544.4 463L541.9 463Z"/><path d="M572.3 270L574.8 270L562.3 450L559.9 450Z"/><path d="M583.1 235L585.7 235L570.2 445L567.8 445Z"/><path d="M606.4 251L608.9 251L595.9 403L593.5 403Z"/><path d="M620.3 251L622.8 251L608.2 409L605.9 409Z"/><path d="M622.2 273L624.6 273L607.4 457L605.1 457Z"/><path d="M634.6 264L637.0 264L615.4 481L613.2 481Z"/><path d="M661.0 210L663.4 210L638.6 436L636.4 436Z"/><path d="M661.9 235L664.3 235L638.3 469L636.2 469Z"/><path d="M666.8 256L669.1 256L650.0 424L647.8 424Z"/><path d="M679.0 243L681.3 243L653.6 475L651.5 475Z"/><path d="M686.1 242L688.3 242L668.4 405L666.3 405Z"/><path d="M692.6 217L694.9 217L665.1 456L663.1 456Z"/><path d="M695.9 245L698.1 245L668.0 481L666.0 481Z"/><path d="M708.1 241L710.2 241L681.7 454L679.8 454Z"/><path d="M717.2 266L719.3 266L696.9 427L695.0 427Z"/><path d="M733.2 268L735.1 268L710.7 434L708.9 434Z"/><path d="M749.3 253L751.1 253L725.0 423L723.2 423Z"/><path d="M752.0 261L753.8 261L721.7 467L720.1 467Z"/><path d="M753.2 261L755.0 261L722.1 472L720.4 472Z"/><path d="M754.2 263L755.9 263L724.4 465L722.7 465Z"/><path d="M769.1 275L770.8 275L741.0 456L739.5 456Z"/></g><g fill="url(#ml)" fill-opacity="0.031"><path d="M108.0 255L109.8 255L139.7 451L137.9 451Z"/><path d="M125.8 222L127.8 222L157.6 433L155.8 433Z"/><path d="M171.9 240L174.1 240L194.4 408L192.3 408Z"/><path d="M177.9 276L180.1 276L199.5 437L197.4 437Z"/><path d="M177.6 244L179.8 244L200.0 415L197.9 415Z"/><path d="M187.8 287L190.1 287L212.8 483L210.8 483Z"/><path d="M189.7 225L192.0 225L217.7 455L215.6 455Z"/><path d="M200.0 269L202.3 269L222.6 455L220.5 455Z"/><path d="M239.3 288L241.8 288L258.6 473L256.3 473Z"/><path d="M262.3 280L264.8 280L279.9 471L277.6 471Z"/><path d="M383.9 229L386.7 229L391.4 462L388.9 462Z"/><path d="M391.4 268L394.1 268L397.9 490L395.4 490Z"/><path d="M400.3 272L403.0 272L405.4 459L402.9 459Z"/><path d="M417.9 245L420.6 245L421.6 474L419.1 474Z"/><path d="M426.9 267L429.6 267L429.6 464L427.1 464Z"/><path d="M446.8 274L449.5 274L448.0 438L445.4 438Z"/><path d="M473.7 256L476.4 256L471.3 487L468.8 487Z"/><path d="M494.1 240L496.8 240L489.4 474L486.9 474Z"/><path d="M508.5 212L511.2 212L502.6 436L500.1 436Z"/><path d="M564.1 299L566.7 299L555.6 465L553.2 465Z"/><path d="M607.5 261L610.0 261L591.7 473L589.4 473Z"/><path d="M625.3 261L627.7 261L605.7 492L603.5 492Z"/><path d="M628.6 267L631.0 267L612.4 459L610.1 459Z"/><path d="M643.5 287L645.8 287L626.6 470L624.4 470Z"/><path d="M670.4 272L672.6 272L647.6 486L645.6 486Z"/><path d="M680.3 276L682.5 276L661.4 449L659.3 449Z"/><path d="M690.1 265L692.2 265L670.1 441L668.1 441Z"/><path d="M704.7 254L706.8 254L684.5 423L682.5 423Z"/><path d="M724.7 256L726.7 256L697.8 459L696.0 459Z"/><path d="M730.4 277L732.3 277L707.2 449L705.4 449Z"/><path d="M764.9 227L766.7 227L730.8 453L729.2 453Z"/><path d="M767.4 235L769.2 235L734.4 451L732.8 451Z"/><path d="M767.8 240L769.5 240L739.8 424L738.2 424Z"/><path d="M773.4 227L775.1 227L742.4 428L740.8 428Z"/><path d="M799.7 278L801.7 278L769.6 457L767.8 457Z"/></g><g fill="url(#ml)" fill-opacity="0.047"><path d="M116.5 285L118.3 285L146.3 470L144.6 470Z"/><path d="M128.6 262L130.5 262L161.7 480L159.9 480Z"/><path d="M146.3 271L148.3 271L172.9 453L171.0 453Z"/><path d="M155.4 231L157.6 231L185.8 450L183.8 450Z"/><path d="M166.6 253L168.7 253L190.0 424L188.0 424Z"/><path d="M192.6 283L194.9 283L212.4 437L210.2 437Z"/><path d="M195.0 257L197.3 257L223.1 489L221.0 489Z"/><path d="M197.2 227L199.6 227L224.0 453L221.9 453Z"/><path d="M243.4 290L245.8 290L260.2 451L257.9 451Z"/><path d="M302.3 265L304.9 265L314.5 426L312.1 426Z"/><path d="M324.8 246L327.4 246L336.3 429L333.9 429Z"/><path d="M329.5 254L332.2 254L340.6 435L338.1 435Z"/><path d="M380.2 264L383.0 264L387.1 448L384.5 448Z"/><path d="M462.1 284L464.8 284L462.0 452L459.5 452Z"/><path d="M510.3 222L513.0 222L504.7 434L502.2 434Z"/><path d="M512.9 269L515.6 269L506.5 487L504.1 487Z"/><path d="M564.1 267L566.7 267L554.0 461L551.6 461Z"/><path d="M585.3 288L587.8 288L576.0 442L573.6 442Z"/><path d="M626.9 263L629.4 263L607.7 490L605.5 490Z"/><path d="M631.1 260L633.5 260L613.6 464L611.4 464Z"/><path d="M635.6 233L638.1 233L617.9 438L615.6 438Z"/><path d="M674.3 222L676.6 222L651.2 441L649.1 441Z"/><path d="M681.6 251L683.9 251L663.5 419L661.4 419Z"/><path d="M707.7 218L709.9 218L678.5 457L676.6 457Z"/><path d="M744.2 241L746.0 241L718.1 428L716.3 428Z"/><path d="M763.5 252L765.2 252L727.8 486L726.2 486Z"/><path d="M767.7 270L769.3 270L738.7 458L737.1 458Z"/><path d="M811.4 229L813.3 229L772.6 454L770.8 454Z"/></g><g fill="url(#ml)" fill-opacity="0.063"><path d="M119.1 237L121.0 237L151.4 445L149.6 445Z"/><path d="M123.3 246L125.3 246L156.3 461L154.5 461Z"/><path d="M128.4 251L130.4 251L160.3 461L158.5 461Z"/><path d="M137.3 261L139.3 261L163.7 437L161.9 437Z"/><path d="M146.0 302L148.0 302L169.5 458L167.6 458Z"/><path d="M144.7 282L146.7 282L168.8 443L166.9 443Z"/><path d="M146.0 246L148.1 246L170.2 411L168.2 411Z"/><path d="M190.0 291L192.2 291L211.3 456L209.2 456Z"/><path d="M246.9 264L249.4 264L264.5 438L262.2 438Z"/><path d="M245.7 226L248.2 226L265.3 426L262.9 426Z"/><path d="M250.2 256L252.7 256L267.0 425L264.6 425Z"/><path d="M273.1 236L275.7 236L291.8 458L289.5 458Z"/><path d="M284.9 255L287.5 255L299.8 437L297.4 437Z"/><path d="M288.8 282L291.4 282L301.6 436L299.2 436Z"/><path d="M287.2 227L289.8 227L303.3 433L300.9 433Z"/><path d="M296.6 274L299.2 274L310.5 455L308.1 455Z"/><path d="M312.7 262L315.4 262L328.4 500L326.0 500Z"/><path d="M375.2 239L377.9 239L383.8 479L381.3 479Z"/><path d="M415.7 261L418.5 261L419.4 444L416.9 444Z"/><path d="M442.5 253L445.3 253L443.7 464L441.2 464Z"/><path d="M471.7 246L474.4 246L470.8 414L468.3 414Z"/><path d="M498.7 300L501.4 300L495.5 469L493.0 469Z"/><path d="M502.8 245L505.5 245L497.2 476L494.7 476Z"/><path d="M519.8 259L522.5 259L515.6 414L513.1 414Z"/><path d="M530.8 255L533.5 255L522.0 487L519.6 487Z"/><path d="M593.1 266L595.6 266L582.3 433L579.9 433Z"/><path d="M605.8 234L608.3 234L592.7 419L590.4 419Z"/><path d="M632.1 308L634.4 308L618.6 466L616.4 466Z"/><path d="M660.2 234L662.6 234L637.2 464L635.1 464Z"/><path d="M722.6 249L724.6 249L699.0 431L697.1 431Z"/><path d="M722.3 262L724.3 262L693.2 483L691.3 483Z"/><path d="M769.6 244L771.3 244L740.0 437L738.4 437Z"/></g><g fill="url(#ml)" fill-opacity="0.079"><path d="M170.9 247L173.1 247L196.7 440L194.6 440Z"/><path d="M189.4 270L191.7 270L211.3 442L209.2 442Z"/><path d="M232.3 233L234.8 233L253.3 434L251.0 434Z"/><path d="M253.9 275L256.3 275L271.2 453L268.9 453Z"/><path d="M278.5 253L281.1 253L297.1 479L294.7 479Z"/><path d="M308.9 233L311.6 233L322.7 432L320.2 432Z"/><path d="M316.4 290L319.0 290L328.6 470L326.2 470Z"/><path d="M317.4 270L320.1 270L328.7 434L326.2 434Z"/><path d="M381.7 231L384.5 231L389.2 453L386.7 453Z"/><path d="M449.2 256L451.9 256L450.0 437L447.5 437Z"/><path d="M490.5 287L493.2 287L488.2 449L485.7 449Z"/><path d="M498.7 237L501.4 237L494.7 432L492.2 432Z"/><path d="M522.5 247L525.2 247L515.3 465L512.8 465Z"/><path d="M532.4 267L535.0 267L525.7 451L523.3 451Z"/><path d="M589.9 254L592.5 254L577.1 452L574.7 452Z"/><path d="M591.6 258L594.2 258L581.2 424L578.8 424Z"/><path d="M611.0 267L613.5 267L598.1 441L595.8 441Z"/><path d="M738.0 254L739.9 254L710.0 457L708.2 457Z"/><path d="M742.2 245L744.1 245L708.6 483L706.9 483Z"/></g><g fill="url(#ml)" fill-opacity="0.094"><path d="M147.5 245L149.6 245L177.8 457L175.9 457Z"/><path d="M166.4 277L168.5 277L193.6 476L191.6 476Z"/><path d="M165.4 257L167.6 257L197.4 495L195.4 495Z"/><path d="M169.1 260L171.3 260L199.4 487L197.4 487Z"/><path d="M242.5 258L245.0 258L265.8 494L263.6 494Z"/><path d="M243.7 250L246.2 250L265.8 475L263.6 475Z"/><path d="M477.8 270L480.5 270L476.2 446L473.7 446Z"/><path d="M526.2 262L528.8 262L519.3 461L516.9 461Z"/><path d="M739.9 232L741.8 232L713.4 425L711.6 425Z"/><path d="M735.4 282L737.3 282L706.9 485L705.2 485Z"/></g><g fill="url(#ml)" fill-opacity="0.110"><path d="M138.2 223L140.3 223L168.0 427L166.0 427Z"/><path d="M148.8 278L150.9 278L171.7 433L169.8 433Z"/><path d="M195.8 247L198.1 247L219.2 439L217.1 439Z"/><path d="M236.8 238L239.2 238L260.6 475L258.3 475Z"/><path d="M283.0 258L285.6 258L301.3 486L298.9 486Z"/><path d="M292.5 276L295.1 276L308.0 474L305.6 474Z"/><path d="M489.1 261L491.8 261L485.1 486L482.6 486Z"/><path d="M514.9 272L517.6 272L509.5 463L507.0 463Z"/><path d="M516.9 276L519.5 276L512.7 434L510.2 434Z"/><path d="M530.1 225L532.8 225L521.8 452L519.3 452Z"/><path d="M609.2 264L611.7 264L592.8 481L590.5 481Z"/><path d="M670.1 289L672.4 289L652.7 456L650.6 456Z"/><path d="M763.5 228L765.3 228L728.2 462L726.6 462Z"/><path d="M766.8 254L768.5 254L737.2 447L735.6 447Z"/></g><g fill="url(#md)" fill-opacity="0.026"><path d="M42.5 285L43.8 285L87.0 516L85.8 516Z"/><path d="M53.1 328L54.5 328L96.9 556L95.5 556Z"/><path d="M52.8 316L54.4 316L94.3 533L92.9 533Z"/><path d="M56.9 321L58.6 321L88.3 483L86.7 483Z"/><path d="M64.2 306L65.4 306L102.4 513L101.2 513Z"/><path d="M75.3 328L76.7 328L113.1 536L111.8 536Z"/><path d="M73.9 299L75.3 299L115.2 530L113.9 530Z"/><path d="M87.1 321L88.6 321L128.7 559L127.3 559Z"/><path d="M95.3 351L96.8 351L124.8 519L123.3 519Z"/><path d="M97.1 296L98.7 296L135.7 525L134.1 525Z"/><path d="M109.1 312L110.8 312L146.9 542L145.3 542Z"/><path d="M143.8 359L145.7 359L172.3 545L170.5 545Z"/><path d="M151.7 322L153.7 322L185.3 554L183.4 554Z"/><path d="M157.8 334L159.9 334L182.6 503L180.7 503Z"/><path d="M156.3 299L158.4 299L186.6 513L184.7 513Z"/><path d="M174.7 343L176.8 343L196.1 496L194.1 496Z"/><path d="M175.0 333L177.1 333L204.0 548L202.0 548Z"/><path d="M230.4 332L232.7 332L256.1 572L254.0 572Z"/><path d="M239.8 293L242.2 293L263.1 522L260.9 522Z"/><path d="M253.8 343L256.2 343L271.2 516L268.9 516Z"/><path d="M251.2 290L253.7 290L273.7 525L271.5 525Z"/><path d="M257.6 297L260.1 297L276.4 494L274.1 494Z"/><path d="M263.1 316L265.6 316L280.7 502L278.4 502Z"/><path d="M287.6 324L290.1 324L303.1 512L300.8 512Z"/><path d="M324.6 326L327.2 326L339.1 563L336.8 563Z"/><path d="M334.2 353L336.8 353L344.6 521L342.2 521Z"/><path d="M359.1 350L361.7 350L367.4 518L364.9 518Z"/><path d="M359.5 300L362.1 300L368.9 508L366.5 508Z"/><path d="M361.4 293L364.0 293L370.6 500L368.2 500Z"/><path d="M367.6 284L370.3 284L376.8 510L374.3 510Z"/><path d="M400.5 286L403.2 286L406.2 521L403.7 521Z"/><path d="M411.6 303L414.3 303L415.7 485L413.2 485Z"/><path d="M488.2 366L490.7 366L485.3 541L482.9 541Z"/><path d="M512.8 322L515.4 322L508.7 483L506.2 483Z"/><path d="M551.1 309L553.7 309L543.5 477L541.1 477Z"/><path d="M677.9 349L680.1 349L657.5 529L655.5 529Z"/><path d="M708.9 357L710.8 357L686.6 529L684.8 529Z"/><path d="M716.2 326L718.2 326L693.4 500L691.6 500Z"/><path d="M724.7 306L726.7 306L698.5 500L696.7 500Z"/><path d="M737.1 324L738.9 324L705.9 540L704.2 540Z"/><path d="M740.6 309L742.4 309L707.2 539L705.6 539Z"/><path d="M737.2 348L739.0 348L707.1 554L705.5 554Z"/><path d="M752.7 327L754.4 327L725.0 510L723.5 510Z"/><path d="M759.4 320L761.1 320L729.9 512L728.3 512Z"/><path d="M768.1 301L769.7 301L734.5 513L733.1 513Z"/><path d="M762.9 339L764.4 339L729.6 548L728.2 548Z"/><path d="M764.2 344L765.7 344L734.1 532L732.7 532Z"/><path d="M768.2 350L769.6 350L741.0 518L739.6 518Z"/><path d="M788.6 328L789.8 328L750.7 547L749.5 547Z"/><path d="M795.1 304L797.0 304L754.4 541L752.6 541Z"/><path d="M794.1 318L796.0 318L759.6 519L757.8 519Z"/><path d="M793.8 373L795.3 373L766.2 531L764.8 531Z"/><path d="M805.7 319L807.2 319L768.0 530L766.7 530Z"/><path d="M808.7 308L810.1 308L776.8 487L775.5 487Z"/><path d="M813.5 325L814.9 325L777.5 522L776.2 522Z"/></g><g fill="url(#md)" fill-opacity="0.051"><path d="M52.7 331L54.1 331L88.2 514L86.9 514Z"/><path d="M59.8 359L61.2 359L89.0 509L87.6 509Z"/><path d="M68.8 296L70.2 296L109.3 519L108.0 519Z"/><path d="M91.9 338L93.5 338L119.5 494L118.1 494Z"/><path d="M89.8 312L91.4 312L120.4 487L118.9 487Z"/><path d="M94.3 327L95.9 327L130.2 535L128.8 535Z"/><path d="M95.3 292L97.0 292L130.6 501L129.1 501Z"/><path d="M104.6 335L106.2 335L131.5 493L129.9 493Z"/><path d="M116.8 345L118.6 345L150.6 552L149.0 552Z"/><path d="M146.7 297L148.7 297L179.8 524L178.0 524Z"/><path d="M164.7 327L166.8 327L190.9 513L189.0 513Z"/><path d="M168.4 319L170.5 319L191.0 480L189.0 480Z"/><path d="M241.2 329L243.6 329L260.8 515L258.6 515Z"/><path d="M243.3 310L245.7 310L263.9 512L261.7 512Z"/><path d="M245.9 318L248.3 318L269.4 554L267.2 554Z"/><path d="M245.1 287L247.5 287L266.3 500L264.0 500Z"/><path d="M274.0 328L276.4 328L289.4 499L287.0 499Z"/><path d="M355.4 365L358.0 365L364.5 544L362.1 544Z"/><path d="M388.8 359L391.4 359L394.5 522L392.1 522Z"/><path d="M390.5 337L393.1 337L396.3 514L393.9 514Z"/><path d="M403.0 311L405.7 311L408.3 537L405.9 537Z"/><path d="M414.3 365L416.9 365L418.1 547L415.6 547Z"/><path d="M424.8 316L427.4 316L427.7 533L425.2 533Z"/><path d="M426.9 286L429.6 286L429.6 501L427.1 501Z"/><path d="M431.2 337L433.9 337L433.4 548L431.0 548Z"/><path d="M448.7 312L451.3 312L448.9 538L446.5 538Z"/><path d="M452.4 365L455.0 365L453.0 523L450.5 523Z"/><path d="M478.7 322L481.4 322L476.9 498L474.4 498Z"/><path d="M505.8 339L508.4 339L502.4 492L500.0 492Z"/><path d="M513.8 350L516.4 350L509.2 515L506.8 515Z"/><path d="M520.5 292L523.1 292L512.8 520L510.4 520Z"/><path d="M685.5 314L687.7 314L664.8 495L662.8 495Z"/><path d="M684.6 334L686.7 334L667.2 487L665.2 487Z"/><path d="M698.5 336L700.5 336L673.1 540L671.2 540Z"/><path d="M727.7 377L729.4 377L706.4 529L704.7 529Z"/><path d="M741.5 360L743.2 360L713.8 547L712.2 547Z"/><path d="M752.8 304L754.5 304L722.3 506L720.8 506Z"/><path d="M791.9 304L793.2 304L760.1 491L758.8 491Z"/><path d="M795.0 335L796.8 335L755.9 559L754.3 559Z"/><path d="M802.8 330L804.3 330L768.2 524L766.8 524Z"/><path d="M813.6 311L814.9 311L775.2 521L773.9 521Z"/></g><g fill="url(#md)" fill-opacity="0.077"><path d="M67.3 364L69.0 364L101.4 543L99.8 543Z"/><path d="M75.6 348L76.9 348L106.2 514L105.0 514Z"/><path d="M77.3 329L78.7 329L108.5 501L107.2 501Z"/><path d="M95.5 365L97.0 365L122.9 519L121.5 519Z"/><path d="M113.4 315L115.2 315L139.7 474L138.1 474Z"/><path d="M115.7 314L117.5 314L144.3 489L142.7 489Z"/><path d="M141.6 333L143.5 333L166.1 492L164.2 492Z"/><path d="M141.1 299L143.1 299L176.6 539L174.8 539Z"/><path d="M145.0 316L147.0 316L168.8 474L167.0 474Z"/><path d="M147.4 323L149.4 323L175.1 509L173.3 509Z"/><path d="M249.8 319L252.2 319L268.3 503L266.1 503Z"/><path d="M273.3 345L275.7 345L289.9 530L287.6 530Z"/><path d="M310.9 373L313.4 373L323.0 538L320.7 538Z"/><path d="M319.5 347L322.1 347L331.7 527L329.4 527Z"/><path d="M345.7 331L348.3 331L356.9 544L354.5 544Z"/><path d="M374.0 357L376.6 357L381.6 547L379.2 547Z"/><path d="M394.4 316L397.1 316L399.8 485L397.3 485Z"/><path d="M433.5 311L436.1 311L435.5 523L433.0 523Z"/><path d="M435.6 305L438.3 305L437.4 517L435.0 517Z"/><path d="M439.8 343L442.4 343L441.2 535L438.8 535Z"/><path d="M492.1 307L494.7 307L487.9 521L485.5 521Z"/><path d="M516.9 325L519.5 325L512.6 482L510.1 482Z"/><path d="M688.0 321L690.1 321L665.4 513L663.5 513Z"/><path d="M695.8 345L697.8 345L670.8 547L669.0 547Z"/><path d="M702.5 362L704.4 362L679.8 540L678.0 540Z"/><path d="M731.6 377L733.3 377L709.5 532L707.8 532Z"/><path d="M751.5 327L753.2 327L718.2 545L716.7 545Z"/><path d="M765.5 290L767.1 290L732.4 502L730.9 502Z"/><path d="M766.9 302L768.5 302L730.4 532L728.9 532Z"/><path d="M788.4 296L789.8 296L748.3 532L747.1 532Z"/><path d="M796.3 289L797.5 289L757.4 513L756.3 513Z"/><path d="M794.8 329L796.6 329L759.8 531L758.2 531Z"/><path d="M807.3 294L808.9 294L767.6 518L766.1 518Z"/><path d="M805.6 335L806.9 335L770.2 530L769.0 530Z"/></g><g fill="url(#md)" fill-opacity="0.103"><path d="M51.1 337L52.7 337L90.1 537L88.7 537Z"/><path d="M55.7 351L57.0 351L89.5 525L88.2 525Z"/><path d="M63.3 321L65.2 321L95.9 492L94.1 492Z"/><path d="M61.1 292L62.3 292L99.7 502L98.5 502Z"/><path d="M70.5 332L71.8 332L112.3 561L111.1 561Z"/><path d="M80.7 373L82.0 373L108.5 523L107.2 523Z"/><path d="M74.6 333L75.9 333L106.3 506L105.0 506Z"/><path d="M80.9 324L82.3 324L116.1 521L114.8 521Z"/><path d="M102.0 361L103.6 361L130.9 527L129.4 527Z"/><path d="M106.5 340L108.1 340L137.6 524L136.0 524Z"/><path d="M104.9 315L106.5 315L134.7 493L133.2 493Z"/><path d="M144.3 290L146.3 290L175.4 502L173.6 502Z"/><path d="M159.4 367L161.3 367L184.1 535L182.2 535Z"/><path d="M162.0 294L164.1 294L191.0 503L189.1 503Z"/><path d="M266.6 310L269.1 310L285.1 513L282.8 513Z"/><path d="M355.7 316L358.4 316L366.8 556L364.4 556Z"/><path d="M391.8 290L394.5 290L398.4 519L395.9 519Z"/><path d="M409.6 322L412.3 322L413.8 497L411.3 497Z"/><path d="M429.1 323L431.8 323L431.6 492L429.1 492Z"/><path d="M437.6 370L440.2 370L439.3 532L436.9 532Z"/><path d="M459.5 314L462.2 314L459.0 510L456.6 510Z"/><path d="M468.2 312L470.9 312L466.9 507L464.5 507Z"/><path d="M657.4 309L659.6 309L635.5 523L633.4 523Z"/><path d="M704.4 358L706.4 358L684.4 517L682.5 517Z"/><path d="M714.8 305L716.8 305L688.0 510L686.2 510Z"/><path d="M747.7 288L749.5 288L715.5 507L713.9 507Z"/><path d="M756.9 308L758.6 308L727.9 498L726.3 498Z"/><path d="M757.4 326L759.1 326L729.0 511L727.5 511Z"/><path d="M756.6 358L758.1 358L725.9 554L724.4 554Z"/><path d="M770.0 333L771.4 333L740.5 516L739.1 516Z"/><path d="M784.7 297L786.1 297L750.1 505L748.8 505Z"/><path d="M776.7 348L778.1 348L748.5 518L747.2 518Z"/><path d="M779.0 345L780.3 345L743.7 555L742.4 555Z"/><path d="M791.0 343L792.8 343L757.5 538L755.8 538Z"/><path d="M803.8 307L805.5 307L763.3 536L761.8 536Z"/></g><g fill="url(#md)" fill-opacity="0.129"><path d="M69.0 367L70.8 367L99.3 524L97.6 524Z"/><path d="M70.2 293L71.6 293L110.1 515L108.8 515Z"/><path d="M71.4 279L72.8 279L112.7 511L111.4 511Z"/><path d="M112.5 326L114.3 326L147.0 536L145.4 536Z"/><path d="M348.7 352L351.2 352L358.0 524L355.6 524Z"/><path d="M397.3 362L399.9 362L402.3 522L399.9 522Z"/><path d="M398.9 329L401.6 329L404.6 548L402.2 548Z"/><path d="M422.6 313L425.3 313L425.7 517L423.2 517Z"/><path d="M461.6 314L464.3 314L460.9 516L458.4 516Z"/><path d="M465.8 324L468.5 324L465.0 506L462.5 506Z"/><path d="M471.9 339L474.6 339L470.6 517L468.2 517Z"/><path d="M475.7 361L478.3 361L473.8 543L471.4 543Z"/><path d="M480.3 344L482.9 344L477.6 544L475.2 544Z"/><path d="M487.9 303L490.5 303L483.8 529L481.4 529Z"/><path d="M693.0 331L695.0 331L667.8 538L665.9 538Z"/><path d="M696.8 314L698.8 314L669.2 538L667.3 538Z"/><path d="M701.4 326L703.4 326L681.4 489L679.5 489Z"/><path d="M708.9 304L710.9 304L685.6 489L683.7 489Z"/><path d="M712.1 345L714.1 345L690.6 510L688.8 510Z"/><path d="M730.1 308L732.0 308L697.4 542L695.7 542Z"/><path d="M733.6 330L735.4 330L707.6 514L705.9 514Z"/><path d="M754.2 339L755.8 339L728.9 505L727.3 505Z"/><path d="M758.8 338L760.4 338L723.9 560L722.5 560Z"/><path d="M814.0 318L815.4 318L785.0 478L783.7 478Z"/></g><g fill="url(#md)" fill-opacity="0.154"><path d="M78.0 328L79.4 328L114.1 529L112.8 529Z"/><path d="M75.1 296L76.5 296L110.4 493L109.0 493Z"/><path d="M84.5 339L85.9 339L117.1 522L115.7 522Z"/><path d="M77.6 294L79.0 294L118.4 525L117.1 525Z"/><path d="M121.8 361L123.5 361L148.0 520L146.3 520Z"/><path d="M143.1 324L145.0 324L173.5 526L171.7 526Z"/><path d="M339.4 329L342.0 329L348.6 481L346.1 481Z"/><path d="M350.3 340L352.9 340L359.5 514L357.1 514Z"/><path d="M444.2 325L446.9 325L445.5 484L443.0 484Z"/><path d="M474.8 306L477.5 306L473.0 496L470.5 496Z"/><path d="M493.4 331L496.1 331L488.7 554L486.3 554Z"/><path d="M776.4 277L777.9 277L738.2 514L736.7 514Z"/><path d="M781.7 324L783.1 324L752.7 499L751.4 499Z"/><path d="M785.7 331L787.0 331L757.4 498L756.2 498Z"/><path d="M810.6 331L812.0 331L772.8 538L771.5 538Z"/></g><g fill="url(#md)" fill-opacity="0.180"><path d="M38.2 296L39.5 296L84.5 533L83.4 533Z"/><path d="M42.0 311L43.3 311L76.9 489L75.6 489Z"/><path d="M40.2 298L41.6 298L81.9 511L80.6 511Z"/><path d="M47.7 333L49.0 333L78.6 490L77.4 490Z"/><path d="M41.8 297L43.2 297L79.4 489L78.0 489Z"/><path d="M44.7 308L46.2 308L83.6 507L82.2 507Z"/><path d="M62.5 345L64.2 345L97.6 528L96.0 528Z"/><path d="M61.1 316L63.0 316L103.5 541L101.8 541Z"/><path d="M72.6 365L74.5 365L105.6 538L103.8 538Z"/><path d="M71.9 345L73.2 345L103.9 517L102.7 517Z"/><path d="M68.2 315L69.4 315L98.1 477L96.9 477Z"/><path d="M73.1 338L74.4 338L101.2 490L100.0 490Z"/><path d="M95.1 338L96.6 338L125.9 514L124.4 514Z"/><path d="M141.0 319L143.0 319L175.0 546L173.2 546Z"/><path d="M351.9 326L354.5 326L362.6 544L360.2 544Z"/><path d="M418.2 314L420.9 314L421.9 547L419.5 547Z"/><path d="M420.6 356L423.2 356L423.7 522L421.3 522Z"/><path d="M463.0 361L465.6 361L462.7 525L460.2 525Z"/><path d="M482.8 329L485.5 329L480.3 518L477.8 518Z"/><path d="M496.8 294L499.4 294L492.3 504L489.9 504Z"/><path d="M700.8 342L702.8 342L681.7 496L679.9 496Z"/><path d="M706.3 312L708.3 312L679.7 521L677.9 521Z"/><path d="M721.3 311L723.2 311L691.1 534L689.3 534Z"/><path d="M721.7 337L723.6 337L699.4 503L697.6 503Z"/><path d="M728.6 299L730.5 299L696.2 533L694.4 533Z"/><path d="M730.3 298L732.1 298L703.0 495L701.2 495Z"/><path d="M723.9 359L725.7 359L697.5 549L695.8 549Z"/><path d="M727.7 342L729.6 342L703.7 515L702.0 515Z"/><path d="M731.5 326L733.3 326L701.1 541L699.4 541Z"/><path d="M731.9 332L733.8 332L703.7 531L702.0 531Z"/><path d="M753.0 339L754.6 339L723.4 533L721.9 533Z"/><path d="M773.1 327L774.5 327L745.7 496L744.3 496Z"/><path d="M769.6 352L771.1 352L743.7 512L742.4 512Z"/><path d="M776.2 320L777.6 320L744.6 512L743.3 512Z"/><path d="M782.1 291L783.6 291L743.8 522L742.5 522Z"/><path d="M775.5 335L776.9 335L749.7 493L748.3 493Z"/><path d="M776.2 336L777.6 336L748.7 503L747.4 503Z"/><path d="M782.6 304L784.0 304L745.1 528L743.8 528Z"/><path d="M788.1 303L789.4 303L754.2 503L752.9 503Z"/><path d="M790.3 295L791.6 295L755.9 498L754.7 498Z"/><path d="M793.0 284L794.3 284L754.1 512L752.9 512Z"/><path d="M789.0 316L790.3 316L757.1 503L755.9 503Z"/><path d="M809.0 312L810.4 312L778.2 484L776.9 484Z"/><path d="M802.9 353L804.1 353L771.1 529L769.9 529Z"/><path d="M803.5 354L805.0 354L773.1 523L771.7 523Z"/><path d="M802.2 366L803.6 366L774.6 520L773.3 520Z"/></g><g fill="url(#ml)" fill-opacity="0.019"><path d="M52.3 307L53.9 307L89.0 499L87.6 499Z"/><path d="M92.9 312L94.5 312L123.1 486L121.6 486Z"/><path d="M104.3 354L105.9 354L133.2 523L131.7 523Z"/><path d="M100.1 278L101.8 278L138.7 511L137.1 511Z"/><path d="M110.7 337L112.4 337L141.7 523L140.1 523Z"/><path d="M134.9 306L136.8 306L170.3 540L168.5 540Z"/><path d="M170.9 287L173.0 287L200.5 508L198.6 508Z"/><path d="M217.4 364L219.6 364L237.7 534L235.6 534Z"/><path d="M230.1 310L232.4 310L255.0 544L252.9 544Z"/><path d="M267.5 345L269.9 345L285.1 535L282.8 535Z"/><path d="M272.5 360L274.9 360L288.3 532L286.1 532Z"/><path d="M299.9 327L302.5 327L312.5 487L310.2 487Z"/><path d="M305.2 313L307.8 313L319.0 500L316.6 500Z"/><path d="M311.5 350L314.0 350L325.8 554L323.5 554Z"/><path d="M316.6 332L319.2 332L330.8 545L328.5 545Z"/><path d="M326.9 330L329.4 330L340.1 545L337.7 545Z"/><path d="M338.0 346L340.6 346L349.0 536L346.7 536Z"/><path d="M365.9 366L368.5 366L373.3 523L370.9 523Z"/><path d="M367.2 340L369.8 340L375.1 519L372.7 519Z"/><path d="M371.5 345L374.2 345L379.1 524L376.7 524Z"/><path d="M378.7 377L381.3 377L385.0 530L382.6 530Z"/><path d="M381.0 294L383.6 294L388.9 531L386.5 531Z"/><path d="M470.1 325L472.7 325L468.0 545L465.6 545Z"/><path d="M496.9 353L499.5 353L492.9 543L490.5 543Z"/><path d="M503.0 359L505.6 359L498.2 551L495.9 551Z"/><path d="M510.2 336L512.8 336L505.1 522L502.7 522Z"/><path d="M520.6 336L523.2 336L512.7 562L510.3 562Z"/><path d="M523.4 322L526.0 322L517.2 506L514.8 506Z"/><path d="M523.9 355L526.5 355L517.7 536L515.3 536Z"/><path d="M530.5 305L533.1 305L524.0 485L521.6 485Z"/><path d="M555.9 332L558.4 332L547.2 508L544.8 508Z"/><path d="M590.8 295L593.3 295L576.0 512L573.7 512Z"/><path d="M642.3 333L644.6 333L621.2 552L619.1 552Z"/><path d="M645.9 332L648.2 332L624.5 551L622.5 551Z"/><path d="M643.9 368L646.1 368L627.1 542L625.0 542Z"/><path d="M652.6 320L654.9 320L633.8 509L631.7 509Z"/><path d="M690.2 328L692.3 328L672.2 483L670.3 483Z"/><path d="M717.7 326L719.6 326L692.0 519L690.2 519Z"/><path d="M747.0 301L748.7 301L714.7 519L713.1 519Z"/><path d="M751.7 303L753.4 303L721.2 506L719.6 506Z"/><path d="M792.3 357L794.0 357L761.8 533L760.2 533Z"/><path d="M796.2 342L797.9 342L768.0 505L766.5 505Z"/></g><g fill="url(#ml)" fill-opacity="0.037"><path d="M84.8 324L86.2 324L118.8 517L117.4 517Z"/><path d="M103.3 355L104.9 355L130.4 512L128.9 512Z"/><path d="M137.6 363L139.5 363L162.4 521L160.7 521Z"/><path d="M131.1 300L133.0 300L162.4 503L160.6 503Z"/><path d="M136.1 325L138.0 325L166.1 520L164.4 520Z"/><path d="M154.4 320L156.5 320L183.4 520L181.5 520Z"/><path d="M164.2 347L166.2 347L194.2 559L192.3 559Z"/><path d="M169.6 341L171.7 341L197.8 544L195.9 544Z"/><path d="M175.6 312L177.8 312L207.3 550L205.3 550Z"/><path d="M182.0 324L184.2 324L203.4 483L201.4 483Z"/><path d="M186.2 331L188.4 331L215.9 561L214.0 561Z"/><path d="M219.3 348L221.6 348L241.3 538L239.2 538Z"/><path d="M217.8 316L220.1 316L241.2 522L239.1 522Z"/><path d="M240.0 356L242.4 356L257.7 519L255.5 519Z"/><path d="M254.4 305L256.9 305L276.7 540L274.5 540Z"/><path d="M322.2 320L324.7 320L334.7 512L332.3 512Z"/><path d="M341.3 327L343.9 327L351.9 516L349.5 516Z"/><path d="M455.1 321L457.7 321L455.1 508L452.7 508Z"/><path d="M499.0 353L501.6 353L494.7 546L492.3 546Z"/><path d="M548.2 289L550.8 289L537.7 511L535.4 511Z"/><path d="M548.2 325L550.7 325L536.6 561L534.3 561Z"/><path d="M575.3 342L577.8 342L566.4 496L564.1 496Z"/><path d="M625.2 321L627.6 321L610.7 495L608.4 495Z"/><path d="M657.7 321L659.9 321L633.2 557L631.2 557Z"/><path d="M680.6 301L682.8 301L653.6 537L651.6 537Z"/><path d="M683.5 368L685.5 368L665.0 527L663.1 527Z"/></g><g fill="url(#ml)" fill-opacity="0.056"><path d="M227.8 362L230.1 362L247.5 535L245.3 535Z"/><path d="M228.3 330L230.6 330L253.4 561L251.3 561Z"/><path d="M257.9 323L260.3 323L277.1 524L274.8 524Z"/><path d="M262.4 331L264.8 331L281.6 536L279.3 536Z"/><path d="M288.6 367L291.1 367L303.1 539L300.8 539Z"/><path d="M295.1 345L297.6 345L307.5 496L305.1 496Z"/><path d="M299.2 347L301.7 347L315.7 566L313.4 566Z"/><path d="M301.2 315L303.8 315L317.9 543L315.6 543Z"/><path d="M304.0 327L306.6 327L317.1 501L314.8 501Z"/><path d="M309.7 283L312.3 283L325.1 508L322.7 508Z"/><path d="M322.0 356L324.6 356L333.2 520L330.9 520Z"/><path d="M345.0 365L347.6 365L354.6 535L352.2 535Z"/><path d="M374.3 290L377.0 290L382.5 505L380.0 505Z"/><path d="M383.0 289L385.7 289L390.4 511L388.0 511Z"/><path d="M527.5 324L530.1 324L521.5 496L519.1 496Z"/><path d="M532.3 311L534.9 311L523.5 531L521.2 531Z"/><path d="M532.9 340L535.4 340L525.9 522L523.5 522Z"/><path d="M542.9 345L545.5 345L535.3 521L532.9 521Z"/><path d="M551.8 333L554.3 333L543.3 512L540.9 512Z"/><path d="M555.1 313L557.6 313L546.6 488L544.2 488Z"/><path d="M586.8 295L589.3 295L571.2 528L568.9 528Z"/><path d="M600.5 365L602.9 365L587.4 542L585.2 542Z"/><path d="M603.9 348L606.3 348L588.4 551L586.2 551Z"/><path d="M650.2 358L652.4 358L634.4 518L632.4 518Z"/><path d="M662.5 368L664.7 368L644.4 539L642.4 539Z"/><path d="M689.6 345L691.7 345L670.6 506L668.7 506Z"/><path d="M695.0 339L697.1 339L668.5 554L666.6 554Z"/><path d="M749.7 292L751.4 292L716.1 518L714.5 518Z"/></g><g fill="url(#ml)" fill-opacity="0.074"><path d="M81.3 298L82.8 298L121.5 527L120.1 527Z"/><path d="M93.9 367L95.4 367L122.9 530L121.6 530Z"/><path d="M123.4 347L125.2 347L153.3 533L151.7 533Z"/><path d="M125.9 347L127.7 347L153.0 515L151.3 515Z"/><path d="M128.8 322L130.7 322L154.0 480L152.2 480Z"/><path d="M132.7 321L134.6 321L158.1 482L156.3 482Z"/><path d="M201.9 318L204.1 318L228.5 537L226.4 537Z"/><path d="M214.7 322L217.0 322L237.0 512L234.8 512Z"/><path d="M233.0 302L235.4 302L254.5 503L252.3 503Z"/><path d="M292.5 366L295.0 366L307.0 542L304.7 542Z"/><path d="M295.2 316L297.7 316L309.2 493L306.8 493Z"/><path d="M333.9 303L336.5 303L346.9 530L344.5 530Z"/><path d="M536.6 308L539.2 308L529.8 483L527.4 483Z"/><path d="M542.4 318L545.0 318L535.7 481L533.3 481Z"/><path d="M560.6 290L563.2 290L549.1 508L546.7 508Z"/><path d="M559.5 339L562.0 339L548.2 550L545.9 550Z"/><path d="M574.3 300L576.8 300L563.1 491L560.8 491Z"/><path d="M602.8 317L605.2 317L591.4 477L589.1 477Z"/><path d="M627.0 322L629.4 322L609.8 521L607.6 521Z"/><path d="M625.1 360L627.5 360L609.0 546L606.8 546Z"/><path d="M634.7 371L637.0 371L621.2 522L619.1 522Z"/><path d="M674.8 335L677.0 335L647.9 571L646.0 571Z"/></g><g fill="url(#ml)" fill-opacity="0.093"><path d="M120.4 319L122.2 319L151.6 513L149.9 513Z"/><path d="M190.0 320L192.3 320L217.1 532L215.0 532Z"/><path d="M196.9 305L199.2 305L224.0 526L221.9 526Z"/><path d="M204.1 322L206.4 322L227.2 511L225.1 511Z"/><path d="M211.9 361L214.1 361L233.4 539L231.3 539Z"/><path d="M215.4 378L217.6 378L234.4 534L232.3 534Z"/><path d="M232.5 316L234.9 316L251.8 493L249.6 493Z"/><path d="M238.2 317L240.6 317L260.1 527L257.9 527Z"/><path d="M274.0 303L276.5 303L293.3 527L291.0 527Z"/><path d="M279.8 354L282.3 354L294.8 523L292.5 523Z"/><path d="M286.7 367L289.1 367L301.4 540L299.1 540Z"/><path d="M315.8 353L318.3 353L329.3 551L327.0 551Z"/><path d="M331.5 339L334.0 339L343.6 540L341.2 540Z"/><path d="M456.7 358L459.3 358L456.5 546L454.1 546Z"/><path d="M540.2 320L542.7 320L534.4 471L531.9 471Z"/><path d="M570.1 331L572.6 331L556.1 564L553.8 564Z"/><path d="M587.1 316L589.6 316L575.6 495L573.3 495Z"/><path d="M588.4 350L590.8 350L577.3 518L575.0 518Z"/><path d="M593.4 336L595.8 336L580.0 528L577.8 528Z"/><path d="M597.9 328L600.4 328L585.9 500L583.6 500Z"/><path d="M638.7 315L641.0 315L619.3 525L617.2 525Z"/><path d="M672.4 327L674.6 327L646.4 560L644.4 560Z"/><path d="M677.8 296L680.0 296L654.8 503L652.8 503Z"/><path d="M724.3 300L726.2 300L696.3 507L694.5 507Z"/></g><g fill="url(#ml)" fill-opacity="0.111"><path d="M126.9 318L128.8 318L158.0 516L156.2 516Z"/><path d="M137.8 374L139.6 374L162.0 526L160.3 526Z"/><path d="M184.1 367L186.2 367L204.8 519L202.8 519Z"/><path d="M185.0 334L187.2 334L209.4 519L207.3 519Z"/><path d="M191.1 343L193.2 343L219.1 563L217.1 563Z"/><path d="M225.4 356L227.7 356L246.3 539L244.1 539Z"/><path d="M571.1 287L573.7 287L557.3 522L554.9 522Z"/><path d="M594.8 295L597.3 295L578.8 521L576.5 521Z"/><path d="M594.7 344L597.1 344L581.0 537L578.8 537Z"/><path d="M632.1 345L634.4 345L618.4 501L616.2 501Z"/><path d="M636.3 321L638.6 321L618.4 518L616.2 518Z"/><path d="M638.1 356L640.3 356L624.4 507L622.2 507Z"/><path d="M662.0 314L664.3 314L639.6 528L637.5 528Z"/><path d="M664.9 304L667.1 304L639.2 544L637.2 544Z"/></g><g fill="url(#ml)" fill-opacity="0.130"><path d="M126.4 342L128.2 342L156.6 531L155.0 531Z"/><path d="M178.1 305L180.2 305L205.7 514L203.7 514Z"/><path d="M185.1 308L187.3 308L214.6 537L212.6 537Z"/><path d="M192.8 329L195.0 329L217.4 523L215.4 523Z"/><path d="M195.8 340L198.0 340L215.9 495L213.8 495Z"/><path d="M192.8 299L195.0 299L216.8 490L214.7 490Z"/><path d="M195.7 310L198.0 310L218.6 492L216.6 492Z"/><path d="M202.2 336L204.4 336L224.7 518L222.6 518Z"/><path d="M202.9 295L205.2 295L230.6 528L228.5 528Z"/><path d="M210.0 311L212.3 311L237.5 548L235.4 548Z"/><path d="M538.7 308L541.3 308L531.1 494L528.7 494Z"/><path d="M563.2 314L565.7 314L550.2 546L547.9 546Z"/><path d="M564.0 332L566.5 332L552.6 537L550.3 537Z"/><path d="M566.3 328L568.8 328L558.0 485L555.6 485Z"/><path d="M572.1 359L574.5 359L562.3 527L560.0 527Z"/><path d="M574.9 374L577.4 374L565.6 531L563.3 531Z"/><path d="M582.2 303L584.7 303L570.5 490L568.2 490Z"/><path d="M581.5 338L584.0 338L568.8 536L566.5 536Z"/><path d="M607.3 331L609.7 331L595.9 486L593.6 486Z"/><path d="M605.6 371L608.0 371L593.4 533L591.2 533Z"/><path d="M611.1 332L613.4 332L593.2 554L591.1 554Z"/><path d="M611.1 352L613.4 352L599.4 505L597.2 505Z"/><path d="M615.6 324L618.0 324L602.7 487L600.5 487Z"/><path d="M618.9 308L621.3 308L602.0 514L599.8 514Z"/><path d="M620.9 307L623.3 307L602.6 525L600.4 525Z"/><path d="M619.4 343L621.7 343L604.4 524L602.2 524Z"/><path d="M623.7 318L626.1 318L607.0 515L604.8 515Z"/><path d="M630.5 324L632.8 324L617.0 481L614.8 481Z"/><path d="M631.0 337L633.3 337L617.1 498L614.9 498Z"/><path d="M669.8 277L672.0 277L644.2 515L642.1 515Z"/><path d="M667.8 309L670.0 309L643.0 538L641.0 538Z"/><path d="M666.9 345L669.1 345L649.0 513L647.0 513Z"/><path d="M672.5 312L674.7 312L653.4 489L651.4 489Z"/><path d="M673.9 368L676.0 368L654.8 539L652.8 539Z"/></g><g fill="url(#md)" fill-opacity="0.016"><path d="M50.3 359L51.6 359L93.5 580L92.3 580Z"/><path d="M50.5 356L51.8 356L93.1 574L91.9 574Z"/><path d="M66.6 387L68.3 387L99.1 555L97.5 555Z"/><path d="M73.8 359L75.1 359L114.6 581L113.4 581Z"/><path d="M79.2 370L80.7 370L117.2 577L115.9 577Z"/><path d="M112.5 382L114.3 382L145.5 577L143.8 577Z"/><path d="M116.2 372L118.0 372L151.1 582L149.4 582Z"/><path d="M127.4 381L129.4 381L156.3 557L154.5 557Z"/><path d="M219.9 409L222.4 409L239.8 572L237.5 572Z"/><path d="M227.0 399L229.5 399L246.4 564L244.1 564Z"/><path d="M345.8 421L348.6 421L357.1 624L354.5 624Z"/><path d="M383.2 404L386.1 404L390.5 601L387.8 601Z"/><path d="M424.2 379L427.1 379L427.4 602L424.7 602Z"/><path d="M470.7 379L473.7 379L469.7 556L467.0 556Z"/><path d="M477.6 397L480.5 397L475.8 578L473.1 578Z"/><path d="M482.4 398L485.3 398L480.0 584L477.3 584Z"/><path d="M512.5 365L515.4 365L506.4 571L503.8 571Z"/><path d="M513.5 396L516.4 396L508.6 571L506.0 571Z"/><path d="M531.1 419L533.9 419L525.1 583L522.5 583Z"/><path d="M607.3 410L609.9 410L590.3 622L587.9 622Z"/><path d="M620.2 385L622.8 385L604.4 573L602.0 573Z"/><path d="M627.3 356L629.9 356L608.0 575L605.6 575Z"/><path d="M665.4 423L667.7 423L645.0 606L642.9 606Z"/><path d="M715.5 402L717.6 402L691.9 576L690.0 576Z"/><path d="M732.9 357L734.9 357L702.1 571L700.3 571Z"/><path d="M760.2 383L761.9 383L730.4 570L728.9 570Z"/><path d="M768.9 365L770.4 365L735.5 569L734.0 569Z"/><path d="M772.8 389L774.3 389L746.4 548L745.0 548Z"/><path d="M791.4 394L793.0 394L763.4 554L761.9 554Z"/></g><g fill="url(#md)" fill-opacity="0.031"><path d="M58.5 394L59.8 394L90.9 559L89.7 559Z"/><path d="M62.2 409L63.5 409L104.3 625L103.0 625Z"/><path d="M67.8 388L69.6 388L101.7 562L100.0 562Z"/><path d="M67.9 381L69.7 381L100.5 550L98.8 550Z"/><path d="M83.2 408L84.6 408L110.8 555L109.5 555Z"/><path d="M84.5 405L85.9 405L119.1 593L117.8 593Z"/><path d="M90.0 416L91.5 416L120.9 584L119.6 584Z"/><path d="M104.8 417L106.5 417L132.4 573L130.9 573Z"/><path d="M99.6 379L101.3 379L138.4 602L136.9 602Z"/><path d="M104.3 401L106.0 401L131.8 556L130.2 556Z"/><path d="M111.2 390L113.0 390L140.2 559L138.5 559Z"/><path d="M177.3 441L179.6 441L201.5 608L199.4 608Z"/><path d="M178.0 419L180.3 419L207.5 630L205.4 630Z"/><path d="M201.4 401L203.8 401L220.8 547L218.5 547Z"/><path d="M205.0 398L207.4 398L230.7 603L228.5 603Z"/><path d="M216.2 411L218.7 411L242.2 628L240.0 628Z"/><path d="M216.4 395L218.9 395L238.5 577L236.2 577Z"/><path d="M337.6 395L340.4 395L350.5 616L347.9 616Z"/><path d="M339.0 375L341.9 375L350.6 571L347.9 571Z"/><path d="M364.6 423L367.5 423L373.4 605L370.7 605Z"/><path d="M380.6 398L383.5 398L388.2 595L385.5 595Z"/><path d="M395.0 391L397.9 391L401.1 588L398.4 588Z"/><path d="M407.4 415L410.3 415L412.0 579L409.3 579Z"/><path d="M417.0 413L420.0 413L420.7 556L417.9 556Z"/><path d="M457.7 431L460.6 431L458.1 585L455.4 585Z"/><path d="M468.5 368L471.5 368L467.2 568L464.5 568Z"/><path d="M474.9 410L477.8 410L473.3 589L470.7 589Z"/><path d="M617.0 397L619.6 397L605.0 547L602.5 547Z"/><path d="M623.8 412L626.4 412L607.8 594L605.5 594Z"/><path d="M626.8 402L629.4 402L611.9 572L609.6 572Z"/><path d="M633.8 395L636.3 395L621.1 538L618.7 538Z"/><path d="M673.3 389L675.6 389L655.1 552L652.9 552Z"/><path d="M696.2 414L698.4 414L670.3 616L668.4 616Z"/><path d="M705.6 417L707.7 417L683.8 583L681.8 583Z"/><path d="M726.2 372L728.2 372L694.6 594L692.7 594Z"/><path d="M724.1 405L726.1 405L695.4 606L693.6 606Z"/><path d="M750.7 413L752.4 413L715.8 632L714.2 632Z"/><path d="M748.2 442L749.8 442L722.3 606L720.7 606Z"/><path d="M761.9 399L763.5 399L728.9 601L727.5 601Z"/><path d="M760.7 425L762.2 425L730.2 610L728.8 610Z"/><path d="M772.6 396L774.0 396L739.4 592L738.1 592Z"/><path d="M781.2 373L782.5 373L744.7 585L743.5 585Z"/><path d="M787.1 434L788.5 434L755.1 612L753.8 612Z"/><path d="M795.2 404L796.7 404L762.0 588L760.6 588Z"/></g><g fill="url(#md)" fill-opacity="0.047"><path d="M79.1 394L80.4 394L118.0 604L116.7 604Z"/><path d="M82.5 398L83.9 398L112.2 558L110.9 558Z"/><path d="M96.1 423L97.6 423L126.8 592L125.4 592Z"/><path d="M109.2 409L110.9 409L134.6 552L132.9 552Z"/><path d="M115.9 379L117.8 379L145.7 555L143.9 555Z"/><path d="M124.5 407L126.4 407L149.3 554L147.6 554Z"/><path d="M177.2 426L179.4 426L204.8 621L202.7 621Z"/><path d="M221.9 409L224.4 409L247.5 627L245.3 627Z"/><path d="M228.7 436L231.2 436L249.9 616L247.6 616Z"/><path d="M362.2 422L365.1 422L370.5 583L367.8 583Z"/><path d="M378.2 398L381.1 398L385.1 559L382.4 559Z"/><path d="M441.2 401L444.2 401L442.5 627L439.8 627Z"/><path d="M443.6 415L446.5 415L444.5 637L441.9 637Z"/><path d="M446.0 414L448.9 414L447.3 574L444.6 574Z"/><path d="M473.2 378L476.1 378L470.8 604L468.1 604Z"/><path d="M519.1 429L521.9 429L513.3 607L510.7 607Z"/><path d="M601.2 430L603.9 430L588.8 597L586.3 597Z"/><path d="M656.6 418L659.0 418L635.0 620L632.8 620Z"/><path d="M698.2 412L700.3 412L670.7 624L668.8 624Z"/><path d="M704.0 405L706.1 405L679.1 596L677.1 596Z"/><path d="M709.2 380L711.3 380L684.0 571L682.1 571Z"/><path d="M752.5 423L754.1 423L727.8 579L726.3 579Z"/><path d="M773.1 408L774.5 408L739.2 607L737.9 607Z"/><path d="M774.6 424L775.9 424L742.5 609L741.3 609Z"/><path d="M795.8 377L797.3 377L758.9 583L757.5 583Z"/><path d="M794.3 400L795.6 400L758.1 600L756.9 600Z"/></g><g fill="url(#md)" fill-opacity="0.063"><path d="M65.6 399L67.1 399L95.6 553L94.2 553Z"/><path d="M84.3 388L85.7 388L117.8 571L116.5 571Z"/><path d="M94.3 361L96.0 361L132.1 577L130.5 577Z"/><path d="M113.0 424L114.8 424L141.9 590L140.2 590Z"/><path d="M112.5 391L114.3 391L144.3 577L142.6 577Z"/><path d="M116.8 367L118.7 367L149.7 565L148.0 565Z"/><path d="M212.6 396L215.1 396L239.4 618L237.2 618Z"/><path d="M359.2 401L362.0 401L367.0 546L364.3 546Z"/><path d="M375.5 387L378.4 387L384.1 604L381.4 604Z"/><path d="M385.2 388L388.2 388L392.0 569L389.3 569Z"/><path d="M393.4 438L396.3 438L399.2 603L396.5 603Z"/><path d="M397.5 397L400.5 397L402.9 558L400.1 558Z"/><path d="M421.7 376L424.7 376L425.2 576L422.5 576Z"/><path d="M464.9 431L467.8 431L464.7 583L462.1 583Z"/><path d="M604.7 416L607.3 416L589.4 610L587.0 610Z"/><path d="M630.7 384L633.3 384L610.5 604L608.2 604Z"/><path d="M664.5 384L666.9 384L647.3 547L645.0 547Z"/><path d="M670.6 365L673.0 365L647.8 571L645.6 571Z"/><path d="M674.0 426L676.3 426L651.4 621L649.3 621Z"/><path d="M682.1 377L684.4 377L658.0 581L655.9 581Z"/><path d="M761.9 380L763.5 380L730.5 575L729.0 575Z"/><path d="M757.9 411L759.5 411L735.1 554L733.6 554Z"/><path d="M773.1 382L774.6 382L737.9 591L736.5 591Z"/><path d="M781.7 365L783.0 365L745.1 578L743.8 578Z"/><path d="M785.9 405L787.6 405L759.7 557L758.0 557Z"/><path d="M796.5 393L797.8 393L756.7 611L755.5 611Z"/></g><g fill="url(#md)" fill-opacity="0.079"><path d="M60.8 384L62.2 384L100.2 587L98.9 587Z"/><path d="M85.4 400L86.8 400L113.9 554L112.6 554Z"/><path d="M85.7 385L87.2 385L122.9 591L121.6 591Z"/><path d="M92.0 410L93.5 410L126.9 603L125.5 603Z"/><path d="M93.3 412L94.8 412L130.0 616L128.6 616Z"/><path d="M97.5 413L99.1 413L134.6 621L133.2 621Z"/><path d="M93.6 378L95.2 378L125.1 554L123.6 554Z"/><path d="M116.9 440L118.6 440L145.8 607L144.2 607Z"/><path d="M171.0 432L173.2 432L198.3 619L196.3 619Z"/><path d="M206.5 394L208.9 394L234.5 621L232.2 621Z"/><path d="M357.1 411L360.0 411L365.3 559L362.6 559Z"/><path d="M389.7 369L392.7 369L396.8 593L394.2 593Z"/><path d="M402.5 404L405.4 404L407.6 583L404.9 583Z"/><path d="M448.7 378L451.7 378L449.2 597L446.6 597Z"/><path d="M629.0 421L631.5 421L612.5 603L610.2 603Z"/><path d="M675.0 389L677.4 389L649.7 608L647.6 608Z"/><path d="M672.3 426L674.5 426L650.0 619L647.9 619Z"/><path d="M683.5 421L685.8 421L661.3 605L659.3 605Z"/><path d="M766.5 397L768.0 397L733.5 596L732.1 596Z"/><path d="M765.3 410L766.8 410L739.0 570L737.6 570Z"/><path d="M773.0 404L774.4 404L737.1 614L735.8 614Z"/><path d="M775.7 426L777.0 426L743.9 609L742.7 609Z"/><path d="M781.5 402L782.8 402L755.0 555L753.8 555Z"/><path d="M780.0 415L781.2 415L754.7 561L753.5 561Z"/><path d="M781.8 420L783.6 420L755.8 572L754.1 572Z"/><path d="M798.8 390L800.2 390L767.4 563L766.1 563Z"/><path d="M799.4 399L800.7 399L762.5 600L761.3 600Z"/></g><g fill="url(#md)" fill-opacity="0.094"><path d="M58.4 385L59.9 385L94.6 569L93.2 569Z"/><path d="M90.5 378L92.1 378L121.5 550L120.0 550Z"/><path d="M103.0 420L104.6 420L136.9 611L135.4 611Z"/><path d="M113.6 381L115.4 381L146.0 573L144.3 573Z"/><path d="M171.8 424L174.0 424L197.9 605L195.9 605Z"/><path d="M695.8 368L698.0 368L668.1 589L666.0 589Z"/><path d="M696.6 399L698.8 399L675.5 568L673.4 568Z"/><path d="M701.3 414L703.4 414L676.7 602L674.7 602Z"/><path d="M725.6 385L727.6 385L698.0 581L696.1 581Z"/><path d="M775.4 432L776.7 432L745.4 605L744.2 605Z"/></g><g fill="url(#md)" fill-opacity="0.110"><path d="M64.0 409L65.3 409L97.4 580L96.2 580Z"/><path d="M59.9 383L61.2 383L93.1 553L91.9 553Z"/><path d="M67.1 412L68.5 412L99.2 577L97.9 577Z"/><path d="M76.1 418L77.9 418L106.6 576L104.9 576Z"/><path d="M68.9 372L70.1 372L110.5 594L109.3 594Z"/><path d="M81.3 436L82.5 436L111.6 596L110.4 596Z"/><path d="M70.8 374L72.1 374L107.4 569L106.2 569Z"/><path d="M83.6 440L84.8 440L114.2 603L113.0 603Z"/><path d="M75.2 390L76.4 390L114.1 599L112.9 599Z"/><path d="M81.0 418L82.2 418L120.6 631L119.4 631Z"/><path d="M77.3 393L78.6 393L113.0 584L111.7 584Z"/><path d="M73.3 366L74.7 366L112.6 578L111.4 578Z"/><path d="M95.6 437L97.1 437L123.5 589L122.1 589Z"/><path d="M92.0 393L93.5 393L129.6 603L128.2 603Z"/><path d="M101.0 415L102.6 415L132.4 591L130.9 591Z"/><path d="M161.7 400L163.9 400L188.6 581L186.5 581Z"/><path d="M162.1 391L164.3 391L191.6 592L189.5 592Z"/><path d="M163.4 388L165.6 388L195.9 613L193.9 613Z"/><path d="M175.0 436L177.2 436L197.8 592L195.7 592Z"/><path d="M366.4 405L369.3 405L374.0 557L371.3 557Z"/><path d="M369.6 430L372.4 430L377.4 597L374.8 597Z"/><path d="M370.7 388L373.6 388L379.3 588L376.7 588Z"/><path d="M373.7 408L376.6 408L381.8 600L379.2 600Z"/><path d="M388.8 445L391.7 445L394.7 594L392.0 594Z"/><path d="M400.2 414L403.1 414L406.1 630L403.4 630Z"/><path d="M404.3 360L407.3 360L409.8 580L407.1 580Z"/><path d="M451.3 365L454.3 365L451.5 590L448.8 590Z"/><path d="M453.4 396L456.3 396L453.4 608L450.8 608Z"/><path d="M455.9 389L458.9 389L455.8 597L453.1 597Z"/><path d="M679.8 409L682.1 409L656.1 609L654.0 609Z"/><path d="M682.9 398L685.2 398L666.2 544L664.0 544Z"/><path d="M684.0 404L686.2 404L657.4 622L655.4 622Z"/><path d="M686.6 411L688.8 411L667.3 572L665.2 572Z"/><path d="M694.2 367L696.4 367L667.9 579L665.9 579Z"/><path d="M690.4 420L692.6 420L664.3 628L662.3 628Z"/><path d="M692.4 418L694.5 418L664.9 634L663.0 634Z"/><path d="M705.4 372L707.6 372L679.1 575L677.1 575Z"/><path d="M760.1 404L761.7 404L728.2 600L726.7 600Z"/><path d="M783.2 380L784.5 380L748.7 579L747.5 579Z"/><path d="M786.1 385L787.4 385L753.2 573L752.0 573Z"/><path d="M779.6 425L781.5 425L750.1 597L748.3 597Z"/><path d="M792.3 377L794.0 377L761.4 554L759.8 554Z"/><path d="M783.7 430L785.4 430L753.9 600L752.4 600Z"/><path d="M787.0 429L788.5 429L754.6 611L753.2 611Z"/><path d="M797.9 399L799.2 399L765.5 577L764.4 577Z"/><path d="M799.8 393L801.1 393L768.8 563L767.6 563Z"/></g><g fill="url(#ml)" fill-opacity="0.016"><path d="M101.8 432L103.4 432L129.8 587L128.3 587Z"/><path d="M108.5 412L110.2 412L135.6 566L134.0 566Z"/><path d="M129.7 376L131.6 376L163.0 583L161.1 583Z"/><path d="M136.0 388L138.0 388L167.0 583L165.1 583Z"/><path d="M184.0 439L186.3 439L208.5 613L206.4 613Z"/><path d="M181.6 406L183.9 406L206.1 582L204.0 582Z"/><path d="M181.2 389L183.5 389L207.3 578L205.2 578Z"/><path d="M264.1 389L266.8 389L281.7 568L279.2 568Z"/><path d="M304.4 386L307.2 386L317.3 549L314.7 549Z"/><path d="M333.2 403L336.1 403L343.5 558L340.9 558Z"/><path d="M336.2 416L339.0 416L347.7 602L345.1 602Z"/><path d="M355.0 416L357.8 416L363.1 559L360.4 559Z"/><path d="M412.4 436L415.3 436L416.6 611L413.9 611Z"/><path d="M414.6 412L417.5 412L418.5 566L415.8 566Z"/><path d="M426.7 429L429.6 429L429.6 622L426.9 622Z"/><path d="M439.0 363L442.0 363L440.7 569L438.0 569Z"/><path d="M460.9 381L463.9 381L460.4 583L457.7 583Z"/><path d="M462.7 422L465.6 422L462.4 592L459.7 592Z"/><path d="M516.1 391L519.0 391L508.7 616L506.1 616Z"/><path d="M544.4 389L547.2 389L537.6 549L535.0 549Z"/><path d="M598.4 414L601.1 414L581.8 631L579.4 631Z"/><path d="M600.7 413L603.3 413L583.8 631L581.4 631Z"/><path d="M622.1 387L624.7 387L602.4 612L600.0 612Z"/><path d="M633.9 413L636.4 413L613.5 627L611.2 627Z"/><path d="M646.4 424L648.8 424L626.4 621L624.2 621Z"/><path d="M656.6 402L659.0 402L633.0 623L630.8 623Z"/><path d="M659.6 441L661.9 441L642.8 597L640.7 597Z"/><path d="M713.6 384L715.7 384L691.4 551L689.4 551Z"/><path d="M717.2 422L719.2 422L688.8 624L687.0 624Z"/><path d="M734.4 357L736.3 357L702.9 574L701.1 574Z"/><path d="M735.3 397L737.2 397L713.8 546L712.0 546Z"/></g><g fill="url(#ml)" fill-opacity="0.031"><path d="M61.8 367L63.4 367L101.0 571L99.5 571Z"/><path d="M101.1 374L102.8 374L138.6 591L137.1 591Z"/><path d="M137.6 438L139.5 438L162.9 592L161.1 592Z"/><path d="M191.8 400L194.2 400L217.2 590L215.0 590Z"/><path d="M242.8 414L245.4 414L266.6 637L264.3 637Z"/><path d="M268.2 386L270.9 386L285.9 571L283.4 571Z"/><path d="M273.9 373L276.6 373L290.5 553L288.0 553Z"/><path d="M282.4 396L285.1 396L297.9 569L295.4 569Z"/><path d="M290.9 422L293.6 422L306.5 604L304.0 604Z"/><path d="M298.9 408L301.7 408L314.9 609L312.4 609Z"/><path d="M300.3 394L303.1 394L312.5 539L309.8 539Z"/><path d="M310.6 412L313.4 412L324.9 604L322.3 604Z"/><path d="M312.5 405L315.3 405L327.5 613L324.9 613Z"/><path d="M409.9 422L412.8 422L414.3 590L411.6 590Z"/><path d="M419.5 422L422.4 422L423.2 629L420.5 629Z"/><path d="M431.5 397L434.5 397L434.0 569L431.3 569Z"/><path d="M436.3 412L439.3 412L438.5 555L435.8 555Z"/><path d="M499.7 447L502.5 447L496.7 600L494.1 600Z"/><path d="M538.5 411L541.3 411L532.6 562L530.0 562Z"/><path d="M552.4 408L555.2 408L545.6 556L543.0 556Z"/><path d="M557.4 402L560.1 402L548.9 570L546.3 570Z"/><path d="M571.9 389L574.6 389L563.6 539L561.0 539Z"/><path d="M577.9 369L580.7 369L565.5 567L563.0 567Z"/><path d="M581.7 406L584.4 406L571.7 566L569.2 566Z"/><path d="M641.7 377L644.2 377L624.7 557L622.3 557Z"/><path d="M740.8 405L742.6 405L707.2 625L705.6 625Z"/><path d="M744.9 418L746.6 418L720.6 577L718.9 577Z"/></g><g fill="url(#ml)" fill-opacity="0.047"><path d="M124.6 442L126.4 442L149.9 589L148.2 589Z"/><path d="M127.7 410L129.6 410L158.5 597L156.7 597Z"/><path d="M134.4 444L136.3 444L158.6 589L156.8 589Z"/><path d="M127.1 388L129.1 388L160.9 596L159.1 596Z"/><path d="M135.3 404L137.3 404L169.1 615L167.2 615Z"/><path d="M144.9 417L146.9 417L175.7 614L173.8 614Z"/><path d="M149.5 428L151.5 428L174.2 585L172.3 585Z"/><path d="M145.4 378L147.5 378L172.7 554L170.7 554Z"/><path d="M156.4 398L158.6 398L185.3 591L183.3 591Z"/><path d="M228.3 392L230.8 392L251.0 590L248.6 590Z"/><path d="M248.8 388L251.5 388L268.3 573L265.8 573Z"/><path d="M253.6 417L256.2 417L274.7 623L272.4 623Z"/><path d="M286.3 420L289.1 420L300.9 583L298.4 583Z"/><path d="M285.1 372L287.9 372L302.4 575L299.8 575Z"/><path d="M308.7 419L311.5 419L320.7 570L318.1 570Z"/><path d="M316.3 391L319.1 391L327.4 538L324.7 538Z"/><path d="M429.1 436L432.0 436L431.8 605L429.1 605Z"/><path d="M489.3 407L492.2 407L485.6 612L483.0 612Z"/><path d="M491.1 426L493.9 426L487.5 620L484.8 620Z"/><path d="M496.3 412L499.2 412L494.0 555L491.3 555Z"/><path d="M523.6 431L526.4 431L517.0 617L514.4 617Z"/><path d="M526.2 425L529.0 425L521.2 577L518.6 577Z"/><path d="M548.9 428L551.6 428L540.7 601L538.1 601Z"/><path d="M559.9 432L562.6 432L551.5 592L548.9 592Z"/><path d="M567.9 413L570.6 413L558.9 574L556.4 574Z"/><path d="M639.9 448L642.3 448L625.6 597L623.4 597Z"/><path d="M710.1 397L712.2 397L691.2 542L689.2 542Z"/><path d="M712.6 401L714.6 401L681.9 625L680.1 625Z"/><path d="M713.0 409L715.1 409L684.6 616L682.8 616Z"/><path d="M721.1 453L723.0 453L700.7 597L698.9 597Z"/><path d="M732.6 423L734.4 423L703.3 620L701.6 620Z"/><path d="M739.0 408L740.8 408L713.5 578L711.8 578Z"/><path d="M744.8 404L746.6 404L718.4 577L716.7 577Z"/><path d="M747.2 441L748.8 441L720.1 612L718.6 612Z"/></g><g fill="url(#ml)" fill-opacity="0.063"><path d="M148.1 449L150.1 449L171.5 595L169.7 595Z"/><path d="M150.8 426L152.8 426L179.2 609L177.3 609Z"/><path d="M188.6 418L190.9 418L210.8 579L208.6 579Z"/><path d="M196.7 424L199.1 424L221.0 607L218.8 607Z"/><path d="M197.2 381L199.6 381L224.4 593L222.2 593Z"/><path d="M206.8 431L209.2 431L229.5 607L227.3 607Z"/><path d="M257.4 362L260.1 362L278.8 581L276.3 581Z"/><path d="M265.2 375L267.9 375L284.1 573L281.6 573Z"/><path d="M283.4 439L286.1 439L299.0 611L296.5 611Z"/><path d="M434.0 388L436.9 388L436.2 588L433.5 588Z"/><path d="M486.9 408L489.8 408L482.8 633L480.2 633Z"/><path d="M506.0 406L508.9 406L499.7 632L497.1 632Z"/><path d="M584.5 426L587.2 426L571.0 624L568.5 624Z"/><path d="M591.0 426L593.6 426L579.7 590L577.2 590Z"/><path d="M615.0 395L617.6 395L600.5 573L598.1 573Z"/><path d="M637.5 434L640.0 434L621.2 605L619.0 605Z"/><path d="M645.6 378L648.1 378L624.2 594L622.0 594Z"/><path d="M646.7 439L649.1 439L629.7 607L627.5 607Z"/><path d="M731.4 413L733.3 413L702.8 607L701.1 607Z"/><path d="M742.7 424L744.5 424L711.1 628L709.5 628Z"/></g><g fill="url(#ml)" fill-opacity="0.079"><path d="M136.9 405L138.9 405L165.5 583L163.7 583Z"/><path d="M146.8 377L149.0 377L179.3 590L177.3 590Z"/><path d="M160.4 415L162.5 415L188.9 606L186.9 606Z"/><path d="M232.3 411L234.8 411L251.4 577L249.1 577Z"/><path d="M232.5 372L235.1 372L257.5 600L255.1 600Z"/><path d="M255.8 418L258.5 418L275.4 609L273.0 609Z"/><path d="M276.4 376L279.1 376L292.9 557L290.4 557Z"/><path d="M293.8 432L296.6 432L309.5 618L307.0 618Z"/><path d="M340.3 351L343.2 351L353.0 577L350.4 577Z"/><path d="M347.9 415L350.7 415L357.6 584L354.9 584Z"/><path d="M508.4 404L511.3 404L504.3 570L501.7 570Z"/><path d="M546.2 436L548.9 436L538.8 599L536.2 599Z"/><path d="M556.2 453L558.9 453L548.9 600L546.4 600Z"/><path d="M571.7 422L574.4 422L560.5 607L558.0 607Z"/><path d="M733.3 392L735.2 392L701.4 608L699.7 608Z"/><path d="M732.6 431L734.4 431L705.3 615L703.6 615Z"/><path d="M743.1 399L744.9 399L714.0 589L712.4 589Z"/><path d="M747.3 381L749.1 381L714.8 592L713.1 592Z"/></g><g fill="url(#ml)" fill-opacity="0.094"><path d="M146.6 419L148.7 419L171.9 578L170.0 578Z"/><path d="M159.3 430L161.4 430L181.7 576L179.7 576Z"/><path d="M188.6 433L190.9 433L209.5 582L207.3 582Z"/><path d="M190.1 416L192.4 416L217.9 623L215.8 623Z"/><path d="M195.5 383L197.9 383L217.4 548L215.1 548Z"/><path d="M238.1 408L240.7 408L256.7 572L254.3 572Z"/><path d="M238.9 395L241.5 395L256.5 551L254.1 551Z"/><path d="M242.0 383L244.6 383L263.6 585L261.2 585Z"/><path d="M259.1 406L261.7 406L278.3 598L275.9 598Z"/><path d="M295.8 427L298.5 427L308.8 578L306.3 578Z"/><path d="M295.6 392L298.4 392L312.3 600L309.8 600Z"/><path d="M321.2 437L324.0 437L332.3 588L329.7 588Z"/><path d="M321.2 354L324.1 354L335.9 577L333.3 577Z"/><path d="M326.0 353L328.9 353L340.0 573L337.3 573Z"/><path d="M351.7 451L354.5 451L360.5 602L357.8 602Z"/><path d="M494.1 407L497.0 407L490.3 599L487.7 599Z"/><path d="M504.3 389L507.2 389L499.6 581L496.9 581Z"/><path d="M522.6 403L525.5 403L516.6 584L513.9 584Z"/><path d="M544.2 430L547.0 430L538.1 575L535.5 575Z"/><path d="M578.5 419L581.2 419L565.0 626L562.5 626Z"/><path d="M596.7 384L599.4 384L581.5 591L579.0 591Z"/><path d="M637.6 396L640.1 396L619.6 587L617.2 587Z"/></g><g fill="url(#ml)" fill-opacity="0.110"><path d="M146.1 446L148.1 446L170.7 599L168.9 599Z"/><path d="M151.6 399L153.7 399L174.4 545L172.4 545Z"/><path d="M154.1 405L156.2 405L179.3 569L177.3 569Z"/><path d="M192.4 420L194.8 420L217.1 603L214.9 603Z"/><path d="M197.5 415L199.9 415L219.3 579L217.1 579Z"/><path d="M234.1 409L236.7 409L251.4 558L249.0 558Z"/><path d="M242.5 366L245.2 366L265.8 588L263.4 588Z"/><path d="M250.7 431L253.3 431L267.2 582L264.7 582Z"/><path d="M255.1 386L257.8 386L275.2 585L272.7 585Z"/><path d="M261.0 379L263.7 379L280.6 580L278.2 580Z"/><path d="M272.2 380L274.9 380L290.9 584L288.4 584Z"/><path d="M301.3 374L304.1 374L315.4 552L312.8 552Z"/><path d="M315.0 409L317.8 409L327.8 582L325.2 582Z"/><path d="M321.3 398L324.1 398L333.2 566L330.6 566Z"/><path d="M326.0 398L328.8 398L340.3 621L337.8 621Z"/><path d="M332.7 439L335.5 439L343.8 608L341.2 608Z"/><path d="M497.9 434L500.7 434L495.3 579L492.7 579Z"/><path d="M541.2 403L544.1 403L531.6 615L529.1 615Z"/><path d="M552.1 449L554.8 449L545.4 592L542.8 592Z"/><path d="M562.5 426L565.2 426L551.9 615L549.4 615Z"/><path d="M579.8 373L582.6 373L568.4 556L565.9 556Z"/><path d="M593.9 442L596.5 442L581.8 610L579.4 610Z"/><path d="M608.9 416L611.5 416L597.6 564L595.1 564Z"/><path d="M611.8 408L614.4 408L600.3 556L597.8 556Z"/><path d="M728.1 416L730.0 416L706.5 568L704.7 568Z"/><path d="M734.5 428L736.3 428L711.1 586L709.4 586Z"/><path d="M777.5 403L778.8 403L752.5 550L751.2 550Z"/></g><g fill="url(#md)" fill-opacity="0.006"><path d="M69.1 454L70.3 454L97.9 599L96.7 599Z"/><path d="M85.8 496L86.9 496L111.3 628L110.2 628Z"/><path d="M85.5 479L86.7 479L116.3 640L115.1 640Z"/><path d="M95.5 502L97.0 502L121.9 640L120.5 640Z"/><path d="M88.2 455L89.6 455L118.8 618L117.4 618Z"/><path d="M103.8 490L105.5 490L131.7 640L130.1 640Z"/><path d="M122.8 502L124.7 502L142.4 610L140.6 610Z"/><path d="M151.2 522L153.4 522L169.7 630L167.6 630Z"/><path d="M152.5 496L154.8 496L174.7 630L172.5 630Z"/><path d="M186.2 514L188.8 514L205.3 640L202.9 640Z"/><path d="M278.1 479L281.3 479L291.0 602L288.0 602Z"/><path d="M312.5 506L315.7 506L324.0 640L320.9 640Z"/><path d="M335.2 462L338.6 462L345.3 603L342.2 603Z"/><path d="M339.7 497L343.1 497L349.7 640L346.6 640Z"/><path d="M378.9 466L382.3 466L385.4 590L382.2 590Z"/><path d="M550.2 479L553.5 479L544.3 618L541.2 618Z"/><path d="M578.0 506L581.1 506L570.1 640L567.1 640Z"/><path d="M618.6 457L621.6 457L607.9 592L605.1 592Z"/><path d="M623.3 483L626.3 483L614.7 594L611.9 594Z"/><path d="M636.7 450L639.6 450L621.2 617L618.5 617Z"/><path d="M655.3 492L658.0 492L643.5 610L640.9 610Z"/><path d="M655.7 507L658.5 507L641.9 640L639.4 640Z"/><path d="M657.1 513L659.8 513L645.1 631L642.6 631Z"/><path d="M669.7 516L672.3 516L656.8 633L654.3 633Z"/><path d="M760.4 462L762.0 462L740.2 586L738.6 586Z"/><path d="M755.6 520L757.1 520L736.5 634L735.1 634Z"/><path d="M768.7 505L769.9 505L745.0 640L743.8 640Z"/><path d="M771.5 520L773.0 520L752.0 632L750.6 632Z"/><path d="M776.5 508L777.8 508L752.8 640L751.6 640Z"/><path d="M781.9 488L783.0 488L754.2 640L753.1 640Z"/></g><g fill="url(#md)" fill-opacity="0.013"><path d="M70.8 467L72.1 467L101.6 622L100.4 622Z"/><path d="M75.6 461L77.2 461L104.3 606L102.8 606Z"/><path d="M81.6 487L83.3 487L105.2 605L103.6 605Z"/><path d="M90.8 512L92.1 512L112.5 623L111.3 623Z"/><path d="M101.3 512L102.8 512L125.5 639L124.0 639Z"/><path d="M103.0 492L104.7 492L124.6 605L123.0 605Z"/><path d="M109.3 515L111.0 515L132.8 640L131.2 640Z"/><path d="M122.0 523L123.9 523L142.9 636L141.1 636Z"/><path d="M123.5 471L125.5 471L145.6 595L143.7 595Z"/><path d="M140.8 499L143.0 499L160.9 615L158.9 615Z"/><path d="M138.4 472L140.6 472L165.2 632L163.1 632Z"/><path d="M146.6 504L148.9 504L169.6 640L167.5 640Z"/><path d="M178.5 487L181.1 487L201.5 640L199.1 640Z"/><path d="M185.8 462L188.5 462L207.8 613L205.3 613Z"/><path d="M197.8 522L200.5 522L215.3 640L212.7 640Z"/><path d="M231.6 476L234.6 476L249.6 621L246.9 621Z"/><path d="M232.9 464L235.9 464L251.1 612L248.3 612Z"/><path d="M256.2 497L259.2 497L269.8 611L266.9 611Z"/><path d="M288.0 469L291.3 469L300.3 592L297.3 592Z"/><path d="M292.0 486L295.2 486L302.9 592L299.8 592Z"/><path d="M292.5 455L295.8 455L307.3 618L304.2 618Z"/><path d="M313.4 476L316.6 476L323.4 588L320.3 588Z"/><path d="M315.1 460L318.5 460L327.6 616L324.6 616Z"/><path d="M321.7 476L325.0 476L334.0 636L330.9 636Z"/><path d="M631.5 476L634.4 476L619.6 611L616.9 611Z"/><path d="M664.9 486L667.6 486L652.2 607L649.7 607Z"/><path d="M726.3 474L728.5 474L703.0 633L701.0 633Z"/><path d="M729.7 463L731.8 463L706.7 620L704.7 620Z"/><path d="M735.8 492L737.7 492L713.1 640L711.3 640Z"/><path d="M736.1 515L738.0 515L717.0 640L715.2 640Z"/><path d="M755.9 474L757.6 474L732.9 616L731.3 616Z"/><path d="M764.5 452L766.1 452L737.4 613L735.9 613Z"/><path d="M759.5 503L761.0 503L736.4 640L735.0 640Z"/><path d="M765.5 475L767.0 475L747.2 585L745.7 585Z"/><path d="M761.8 511L763.2 511L742.1 628L740.7 628Z"/></g><g fill="url(#md)" fill-opacity="0.019"><path d="M77.7 496L79.1 496L106.4 640L105.1 640Z"/><path d="M122.0 480L124.0 480L148.9 632L147.0 632Z"/><path d="M208.4 462L211.3 462L230.0 623L227.3 623Z"/><path d="M239.3 479L242.3 479L258.5 640L255.7 640Z"/><path d="M306.6 458L309.9 458L318.2 589L315.1 589Z"/><path d="M488.4 458L491.8 458L487.4 591L484.2 591Z"/><path d="M615.1 516L618.1 516L605.3 640L602.5 640Z"/><path d="M629.7 470L632.6 470L615.7 627L612.9 627Z"/><path d="M633.4 502L636.3 502L620.8 640L618.1 640Z"/><path d="M690.3 498L692.8 498L672.6 640L670.3 640Z"/><path d="M694.9 479L697.3 479L674.3 640L672.1 640Z"/><path d="M725.7 467L727.9 467L706.2 604L704.1 604Z"/><path d="M756.9 462L758.6 462L731.2 619L729.6 619Z"/><path d="M751.3 507L753.0 507L732.4 624L730.9 624Z"/><path d="M765.3 487L766.7 487L742.1 623L740.7 623Z"/><path d="M770.1 470L771.5 470L742.9 627L741.6 627Z"/><path d="M776.8 452L778.1 452L751.3 598L750.1 598Z"/><path d="M783.7 474L785.1 474L764.2 584L762.8 584Z"/></g><g fill="url(#md)" fill-opacity="0.026"><path d="M78.1 492L79.3 492L105.3 630L104.1 630Z"/><path d="M92.4 499L93.8 499L119.4 640L118.1 640Z"/><path d="M114.0 467L115.9 467L135.6 585L133.7 585Z"/><path d="M245.8 494L248.8 494L263.1 640L260.3 640Z"/><path d="M244.4 454L247.5 454L262.4 609L259.6 609Z"/><path d="M251.1 496L254.1 496L267.7 640L264.9 640Z"/><path d="M301.9 472L305.2 472L315.9 633L312.9 633Z"/><path d="M303.9 460L307.2 460L317.7 622L314.6 622Z"/><path d="M319.7 489L323.0 489L330.5 620L327.4 620Z"/><path d="M332.5 465L335.8 465L342.9 606L339.7 606Z"/><path d="M420.2 469L423.7 469L424.1 590L420.8 590Z"/><path d="M604.5 497L607.5 497L595.6 622L592.7 622Z"/><path d="M621.2 480L624.2 480L611.1 606L608.3 606Z"/><path d="M623.3 507L626.2 507L612.0 640L609.3 640Z"/><path d="M641.8 448L644.7 448L627.3 602L624.6 602Z"/><path d="M712.0 512L714.2 512L694.4 640L692.3 640Z"/><path d="M725.3 459L727.5 459L701.0 627L699.0 627Z"/><path d="M738.1 460L740.1 460L718.6 590L716.7 590Z"/><path d="M732.9 500L734.9 500L713.2 631L711.3 631Z"/><path d="M737.8 521L739.6 521L719.6 639L717.8 639Z"/><path d="M749.5 490L751.2 490L725.7 638L724.0 638Z"/><path d="M749.9 495L751.6 495L732.8 603L731.2 603Z"/><path d="M763.6 491L765.1 491L744.9 602L743.6 602Z"/></g><g fill="url(#md)" fill-opacity="0.032"><path d="M76.1 469L77.6 469L99.4 585L97.9 585Z"/><path d="M283.1 474L286.3 474L296.0 602L293.0 602Z"/><path d="M611.3 479L614.3 479L599.2 632L596.4 632Z"/><path d="M730.7 476L732.8 476L714.9 587L713.0 587Z"/><path d="M725.3 529L727.3 529L709.7 636L707.8 636Z"/><path d="M774.6 450L776.0 450L747.2 608L745.9 608Z"/><path d="M768.7 487L770.1 487L748.5 606L747.2 606Z"/><path d="M772.5 495L774.3 495L749.6 628L747.9 628Z"/></g><g fill="url(#md)" fill-opacity="0.039"><path d="M252.7 487L255.8 487L265.8 594L262.9 594Z"/><path d="M283.4 512L286.5 512L296.5 640L293.5 640Z"/><path d="M299.7 479L303.0 479L310.9 596L307.8 596Z"/><path d="M727.8 504L729.8 504L707.7 640L705.8 640Z"/><path d="M751.4 457L753.2 457L729.3 597L727.5 597Z"/><path d="M742.3 525L744.0 525L724.2 640L722.5 640Z"/></g><g fill="url(#md)" fill-opacity="0.045"><path d="M296.1 466L299.3 466L309.3 611L306.3 611Z"/><path d="M489.0 528L492.3 528L488.7 634L485.5 634Z"/><path d="M613.8 480L616.8 480L600.9 638L598.1 638Z"/><path d="M724.8 504L726.8 504L709.0 614L707.0 614Z"/><path d="M735.2 504L737.1 504L714.4 640L712.6 640Z"/><path d="M743.8 461L745.7 461L718.3 625L716.5 625Z"/><path d="M748.1 452L750.0 452L721.7 620L719.9 620Z"/><path d="M750.9 452L752.8 452L728.3 595L726.5 595Z"/><path d="M754.8 445L756.6 445L729.5 602L727.8 602Z"/><path d="M761.6 480L763.1 480L736.9 627L735.5 627Z"/></g><g fill="url(#ml)" fill-opacity="0.011"><path d="M79.3 495L80.6 495L107.9 640L106.6 640Z"/><path d="M88.5 503L89.8 503L114.9 640L113.7 640Z"/><path d="M84.6 470L85.9 470L110.4 604L109.1 604Z"/><path d="M95.2 519L96.5 519L118.6 640L117.3 640Z"/><path d="M99.8 509L101.3 509L124.6 640L123.2 640Z"/><path d="M114.4 494L116.3 494L138.1 623L136.3 623Z"/><path d="M116.6 474L118.5 474L144.3 629L142.5 629Z"/><path d="M121.1 483L123.0 483L141.6 597L139.7 597Z"/><path d="M155.9 494L158.3 494L178.7 634L176.5 634Z"/><path d="M175.4 480L178.0 480L193.7 597L191.3 597Z"/><path d="M184.2 483L186.8 483L204.1 616L201.6 616Z"/><path d="M202.8 509L205.5 509L221.4 640L218.8 640Z"/><path d="M217.0 474L219.9 474L232.4 587L229.7 587Z"/><path d="M222.9 485L225.8 485L242.8 640L240.1 640Z"/><path d="M223.7 471L226.7 471L238.7 582L235.9 582Z"/><path d="M229.5 479L232.4 479L248.7 633L245.9 633Z"/><path d="M241.8 479L244.8 479L256.5 597L253.6 597Z"/><path d="M274.3 497L277.4 497L288.9 638L286.0 638Z"/><path d="M328.3 493L331.6 493L339.4 640L336.3 640Z"/><path d="M426.1 449L429.6 449L429.6 611L426.4 611Z"/><path d="M481.8 481L485.2 481L481.5 606L478.3 606Z"/><path d="M502.2 479L505.5 479L501.0 590L497.8 590Z"/><path d="M551.6 500L554.8 500L545.7 635L542.7 635Z"/><path d="M553.3 515L556.5 515L548.1 636L545.1 636Z"/><path d="M654.3 462L657.1 462L642.4 584L639.8 584Z"/><path d="M671.7 484L674.3 484L659.2 599L656.7 599Z"/><path d="M691.9 473L694.4 473L678.7 584L676.4 584Z"/><path d="M707.0 487L709.3 487L687.5 632L685.4 632Z"/><path d="M712.2 522L714.4 522L697.0 633L694.9 633Z"/><path d="M760.4 469L762.0 469L740.1 592L738.6 592Z"/><path d="M769.0 507L770.2 507L745.6 640L744.5 640Z"/><path d="M774.7 508L776.1 508L751.3 640L750.0 640Z"/></g><g fill="url(#ml)" fill-opacity="0.023"><path d="M104.7 507L106.3 507L125.5 617L124.0 617Z"/><path d="M106.6 492L108.3 492L131.4 626L129.8 626Z"/><path d="M109.0 485L110.8 485L133.9 620L132.2 620Z"/><path d="M137.1 507L139.2 507L160.2 640L158.2 640Z"/><path d="M135.9 479L138.1 479L155.9 593L153.8 593Z"/><path d="M164.5 501L166.9 501L182.0 607L179.7 607Z"/><path d="M189.4 506L192.0 506L209.3 640L206.8 640Z"/><path d="M189.4 473L192.1 473L208.8 605L206.3 605Z"/><path d="M193.1 449L195.9 449L215.7 610L213.1 610Z"/><path d="M202.4 488L205.2 488L223.5 640L220.9 640Z"/><path d="M213.4 484L216.2 484L233.4 634L230.8 634Z"/><path d="M220.6 527L223.4 527L236.2 640L233.6 640Z"/><path d="M219.0 472L221.9 472L236.4 602L233.7 602Z"/><path d="M238.9 499L241.8 499L252.9 608L250.1 608Z"/><path d="M257.0 478L260.1 478L274.5 637L271.6 637Z"/><path d="M256.9 449L260.1 449L274.6 612L271.7 612Z"/><path d="M264.2 500L267.2 500L279.5 640L276.6 640Z"/><path d="M267.8 482L270.9 482L284.3 640L281.4 640Z"/><path d="M267.9 452L271.0 452L284.8 617L281.8 617Z"/><path d="M394.2 497L397.6 497L400.1 640L396.9 640Z"/><path d="M455.3 498L458.7 498L456.5 640L453.3 640Z"/><path d="M475.6 497L479.0 497L475.9 611L472.7 611Z"/><path d="M496.9 464L500.3 464L495.2 601L492.0 601Z"/><path d="M522.4 475L525.7 475L519.9 589L516.7 589Z"/><path d="M527.3 490L530.6 490L523.5 620L520.4 620Z"/><path d="M570.1 469L573.4 469L564.1 590L561.1 590Z"/><path d="M593.7 444L596.8 444L582.1 612L579.2 612Z"/><path d="M594.6 465L597.7 465L584.0 619L581.0 619Z"/><path d="M602.3 466L605.4 466L592.4 605L589.5 605Z"/><path d="M677.6 503L680.1 503L661.5 640L659.1 640Z"/><path d="M711.0 496L713.2 496L691.2 640L689.1 640Z"/></g><g fill="url(#ml)" fill-opacity="0.034"><path d="M92.3 507L93.6 507L114.4 621L113.1 621Z"/><path d="M92.7 491L94.1 491L121.0 640L119.7 640Z"/><path d="M104.8 526L106.3 526L125.9 636L124.4 636Z"/><path d="M97.7 474L99.3 474L125.5 623L124.0 623Z"/><path d="M113.3 479L115.2 479L141.6 636L139.8 636Z"/><path d="M135.0 483L137.2 483L156.7 608L154.7 608Z"/><path d="M144.1 464L146.4 464L165.3 590L163.1 590Z"/><path d="M153.8 467L156.2 467L180.0 631L177.7 631Z"/><path d="M170.8 461L173.4 461L191.4 594L189.0 594Z"/><path d="M210.7 500L213.5 500L229.8 640L227.2 640Z"/><path d="M265.7 488L268.8 488L280.0 619L277.1 619Z"/><path d="M359.9 505L363.2 505L368.1 640L365.0 640Z"/><path d="M408.7 499L412.1 499L413.5 640L410.3 640Z"/><path d="M414.7 525L418.1 525L418.8 640L415.7 640Z"/><path d="M417.6 514L420.9 514L421.5 640L418.3 640Z"/><path d="M423.1 452L426.6 452L426.8 596L423.6 596Z"/><path d="M434.9 503L438.3 503L437.7 634L434.5 634Z"/><path d="M457.9 516L461.3 516L459.2 640L456.0 640Z"/><path d="M464.2 486L467.6 486L465.2 607L461.9 607Z"/><path d="M472.1 522L475.5 522L472.8 628L469.6 628Z"/><path d="M492.8 499L496.1 499L491.1 640L487.9 640Z"/><path d="M514.3 464L517.7 464L510.1 626L507.0 626Z"/><path d="M515.6 499L518.9 499L512.1 640L509.0 640Z"/><path d="M524.5 488L527.9 488L522.2 596L519.0 596Z"/><path d="M534.1 468L537.4 468L528.1 630L525.1 630Z"/><path d="M557.0 500L560.2 500L550.4 640L547.4 640Z"/><path d="M569.7 511L572.8 511L562.7 640L559.8 640Z"/><path d="M604.4 472L607.4 472L596.7 585L593.8 585Z"/><path d="M606.1 506L609.1 506L596.1 640L593.3 640Z"/><path d="M650.1 516L652.8 516L639.8 624L637.2 624Z"/><path d="M661.6 495L664.3 495L649.4 613L646.9 613Z"/><path d="M674.9 492L677.5 492L657.7 640L655.3 640Z"/><path d="M679.6 503L682.1 503L663.4 640L661.0 640Z"/><path d="M681.1 522L683.6 522L667.1 640L664.8 640Z"/><path d="M705.0 463L707.4 463L683.5 625L681.3 625Z"/></g><g fill="url(#ml)" fill-opacity="0.046"><path d="M105.9 526L107.4 526L127.5 640L126.0 640Z"/><path d="M355.5 466L358.9 466L364.4 613L361.3 613Z"/><path d="M365.6 504L368.9 504L373.4 640L370.3 640Z"/><path d="M370.5 477L373.9 477L377.9 612L374.7 612Z"/><path d="M384.6 461L388.1 461L391.6 619L388.4 619Z"/><path d="M396.8 482L400.3 482L402.0 591L398.7 591Z"/><path d="M400.0 495L403.4 495L405.0 612L401.8 612Z"/><path d="M405.8 496L409.2 496L410.8 640L407.6 640Z"/><path d="M478.9 482L482.3 482L477.8 640L474.7 640Z"/><path d="M530.2 487L533.5 487L526.8 608L523.7 608Z"/><path d="M542.3 472L545.6 472L536.0 627L533.0 627Z"/><path d="M558.7 515L561.9 515L554.3 621L551.2 621Z"/><path d="M565.6 456L568.9 456L557.9 605L554.9 605Z"/><path d="M563.9 516L567.1 516L559.0 625L556.0 625Z"/><path d="M641.2 474L644.1 474L631.3 586L628.6 586Z"/><path d="M644.9 463L647.8 463L632.7 593L630.0 593Z"/><path d="M696.2 484L698.6 484L678.3 624L676.1 624Z"/><path d="M708.1 454L710.5 454L687.7 608L685.4 608Z"/></g><g fill="url(#ml)" fill-opacity="0.057"><path d="M94.0 503L95.4 503L120.2 640L118.9 640Z"/><path d="M108.3 473L110.1 473L136.7 629L135.0 629Z"/><path d="M125.4 473L127.4 473L145.7 586L143.7 586Z"/><path d="M154.2 456L156.6 456L179.6 616L177.4 616Z"/><path d="M167.3 494L169.8 494L190.2 640L187.9 640Z"/><path d="M173.0 491L175.5 491L195.8 640L193.4 640Z"/><path d="M341.8 481L345.1 481L350.7 604L347.6 604Z"/><path d="M362.5 498L365.9 498L370.5 633L367.3 633Z"/><path d="M429.1 482L432.5 482L432.3 603L429.1 603Z"/><path d="M437.8 498L441.3 498L440.4 640L437.2 640Z"/><path d="M440.7 498L444.2 498L443.2 617L440.0 617Z"/><path d="M446.5 509L449.9 509L448.4 640L445.2 640Z"/><path d="M461.2 490L464.7 490L462.6 598L459.4 598Z"/><path d="M503.3 523L506.6 523L501.7 638L498.6 638Z"/><path d="M506.0 525L509.2 525L504.2 640L501.1 640Z"/><path d="M509.2 516L512.5 516L506.9 640L503.7 640Z"/><path d="M536.8 470L540.1 470L531.2 622L528.1 622Z"/><path d="M646.4 490L649.2 490L636.2 601L633.5 601Z"/><path d="M699.5 474L701.9 474L684.3 596L682.0 596Z"/></g><g fill="url(#ml)" fill-opacity="0.069"><path d="M109.7 496L111.4 496L130.2 606L128.6 606Z"/><path d="M155.3 451L157.7 451L180.0 606L177.7 606Z"/><path d="M206.9 488L209.7 488L224.7 615L222.1 615Z"/><path d="M368.1 493L371.5 493L375.6 625L372.4 625Z"/><path d="M382.5 493L385.9 493L389.4 640L386.2 640Z"/><path d="M444.0 460L447.4 460L445.9 621L442.7 621Z"/><path d="M544.0 490L547.2 490L537.8 640L534.7 640Z"/><path d="M596.6 501L599.6 501L587.6 631L584.7 631Z"/><path d="M639.9 527L642.7 527L629.4 640L626.8 640Z"/><path d="M647.6 500L650.4 500L633.6 640L631.0 640Z"/><path d="M686.7 495L689.2 495L669.0 640L666.6 640Z"/><path d="M712.7 473L714.9 473L693.9 611L691.8 611Z"/></g><g fill="url(#ml)" fill-opacity="0.080"><path d="M108.9 499L110.6 499L135.0 640L133.4 640Z"/><path d="M166.7 503L169.1 503L188.4 640L186.1 640Z"/><path d="M166.6 460L169.1 460L191.0 619L188.6 619Z"/><path d="M206.6 504L209.3 504L225.6 640L223.0 640Z"/><path d="M272.6 445L275.8 445L289.1 609L286.1 609Z"/><path d="M345.2 494L348.6 494L355.0 640L351.8 640Z"/><path d="M346.7 463L350.1 463L356.3 609L353.1 609Z"/><path d="M351.0 496L354.4 496L359.8 629L356.6 629Z"/><path d="M351.9 447L355.3 447L361.4 603L358.2 603Z"/><path d="M387.8 469L391.2 469L394.3 622L391.1 622Z"/><path d="M402.3 458L405.8 458L407.7 612L404.5 612Z"/><path d="M449.4 502L452.8 502L451.1 640L447.9 640Z"/><path d="M467.3 479L470.7 479L467.9 605L464.7 605Z"/><path d="M470.4 472L473.8 472L471.3 578L468.0 578Z"/><path d="M538.1 497L541.3 497L532.7 640L529.6 640Z"/><path d="M594.1 499L597.2 499L587.4 607L584.5 607Z"/><path d="M679.1 476L681.7 476L665.2 599L662.7 599Z"/><path d="M696.5 508L698.9 508L680.0 637L677.8 637Z"/></g></g></g></svg></div>
<div id="tabs"></div>
<div id="main"></div>
<div id="redge"></div>
<div style="left:862.4px;top:429.9px;width:35.2px;height:34.7px;background:#303030;border-radius:5.5px 0 0 5.5px"></div>
<div style="left:863.4px;top:182.6px;width:34px;height:1.2px;background:#141414;opacity:.5"></div>
<div style="left:863.4px;top:229.6px;width:34px;height:1.2px;background:#141414;opacity:.5"></div>
<div style="left:863.4px;top:502.8px;width:34px;height:1.2px;background:#141414;opacity:.5"></div>
<div style="left:863.4px;top:550.0px;width:34px;height:1.2px;background:#141414;opacity:.5"></div>
<svg class="ic" style="left:870.4px;top:3.8px;width:20px;height:20px" viewBox="0 0 20 20" ><rect x="0" y="3.4" width="19.7" height="14.9" rx="1.6" fill="#bdbdbd"/><path d="M4.4 4 L5.6 0.6 Q5.9 0 6.6 0 L11.2 0 Q11.9 0 12.2 0.6 L13.4 4 Z" fill="#bdbdbd"/><rect x="7.4" y="1.2" width="3.1" height="1.5" rx=".6" fill="#1d1d1d"/><rect x="15.1" y="0" width="3.2" height="1.3" rx=".6" fill="#bdbdbd"/><rect x="2.2" y="6.6" width="11.4" height="8.8" fill="#1d1d1d"/><rect x="2.2" y="9.1" width="11.4" height="1" fill="#4c4c4c"/><rect x="2.2" y="12" width="11.4" height="1" fill="#4c4c4c"/><circle cx="16.8" cy="8.3" r="1.15" fill="#1d1d1d"/><circle cx="16.8" cy="13.8" r="1.15" fill="#1d1d1d"/></svg>
<svg class="ic" style="left:870.4px;top:41.3px;width:20px;height:20px" viewBox="0 0 20 20" ><path d="M0 2 Q0 0 2 0 L17.7 0 Q19.7 0 19.7 2 L19.7 9.6 Q19.7 10.4 18.9 10.4 L17.2 10.4 L17.2 6.3 L2.5 6.3 L2.5 10.4 L0.8 10.4 Q0 10.4 0 9.6 Z" fill="#bdbdbd"/><rect x="2.5" y="4.5" width="14.7" height="1.8" fill="#1d1d1d"/><rect x="4.1" y="6.2" width="11.8" height="13.7" fill="#9b9b9b"/><path d="M6 17.6 L9.1 13.2 L12.3 17.6 Z" fill="#1d1d1d"/><circle cx="12.6" cy="11" r="1.05" fill="#1d1d1d"/></svg>
<svg class="ic" style="left:870.2px;top:78.7px;width:20px;height:20px" viewBox="0 0 20 20" ><path d="M0.7 6.4 L0.7 19.3 L13.9 19.3" fill="none" stroke="#808080" stroke-width="1.6"/><path d="M3.6 3.2 L3.6 16.3 L16.7 16.3" fill="none" stroke="#808080" stroke-width="1.6"/><rect x="6.5" y="0.6" width="13" height="13" fill="#0e0e0e" stroke="#c6c6c6" stroke-width="1.2"/><path d="M7.3 12.8 L11.2 4.2 L13.6 8.6 L14.8 7.2 L18.6 12.8 Z" fill="#c6c6c6"/><circle cx="15.4" cy="4.2" r="1.25" fill="#c6c6c6"/></svg>
<svg class="ic" style="left:870.2px;top:116.0px;width:20px;height:20px" viewBox="0 0 20 20" ><path d="M6.5 0.6 Q7.2 0.2 7.7 1 L11.6 9.6 Q8.4 11.4 8.6 16.2 Q3 16.4 0.3 14.6 Q-0.1 14.2 0.2 13.5 L5.9 1.2 Z" fill="#bdbdbd"/><circle cx="16.8" cy="3.1" r="2.9" fill="#bdbdbd"/><circle cx="14.2" cy="14.3" r="6.9" fill="#1d1d1d"/><circle cx="14.2" cy="14.3" r="5.1" fill="#161616" stroke="#bdbdbd" stroke-width="1.4"/><path d="M11.6 13.4 A2.9 2.9 0 0 1 13.6 11.5" fill="none" stroke="#9a9a9a" stroke-width="1.1" stroke-linecap="round"/></svg>
<svg class="ic" style="left:870.0px;top:153.5px;width:20px;height:20px" viewBox="0 0 20 20" ><path d="M0.4 19.3 L3.6 16.4 M16.6 3.7 L19.9 0.7" stroke="#c65f6a" stroke-width="1.3" stroke-linecap="round" fill="none"/><circle cx="10.1" cy="10" r="8.7" fill="none" stroke="#c65f6a" stroke-width="1.5"/><path d="M3 6.2 Q5.2 2.6 9.4 1.9 L11.3 3.3 L9.6 4.4 L10.4 5.9 L8.3 7.1 L8.9 8.8 L6.9 10.1 L5.2 8.9 L3.6 9.6 Q2.4 8.2 3 6.2 Z" fill="#c65f6a"/><path d="M8.6 10.3 L11.4 9.4 L14.6 10.3 L16.4 12.2 L14.9 14.2 L13.6 16.9 L11.8 17.4 L11.2 14.3 L9.2 12.6 Z" fill="#c65f6a"/></svg>
<svg class="ic" style="left:870.4px;top:202.7px;width:20px;height:20px" viewBox="0 0 20 20" ><rect x="0.7" y="0.7" width="18.3" height="4.6" rx=".7" fill="none" stroke="#e2e2e2" stroke-width="1.4"/><path d="M2.1 5.3 L2.1 17.6 L17.6 17.6 L17.6 5.3" fill="none" stroke="#e2e2e2" stroke-width="1.4"/><rect x="6.9" y="8.9" width="5.8" height="2.5" rx="1.2" fill="#e2e2e2"/></svg>
<svg class="ic" style="left:870.0px;top:249.7px;width:20px;height:20px" viewBox="0 0 20 20" ><rect x="4.2" y="3.9" width="11.8" height="11.5" fill="#d38d4f"/><path d="M0.6 5.6 L0.6 0.6 L5.8 0.6 M14.4 0.6 L19.6 0.6 L19.6 5.6 M19.6 14 L19.6 19 L14.4 19 M5.8 19 L0.6 19 L0.6 14" fill="none" stroke="#a06c40" stroke-width="1.2"/></svg>
<svg class="ic" style="left:870.0px;top:287.0px;width:20px;height:20px" viewBox="0 0 20 20" ><path d="M2.9 17.4 L10.4 9.8" stroke="#6293e2" stroke-width="4.6" stroke-linecap="round" fill="none"/><circle cx="13.2" cy="7.2" r="6.5" fill="#6293e2"/><path d="M13.9 6.6 L21 -0.5" stroke="#1d1d1d" stroke-width="5.3" stroke-linecap="round" fill="none"/></svg>
<svg class="ic" style="left:870.0px;top:324.4px;width:20px;height:20px" viewBox="0 0 20 20" ><path d="M3.9 3.9 L18.2 3.9 M3.9 3.9 L3.9 17.7 M3.9 3.9 L17.2 17.1" stroke="#4a72b8" stroke-width="1.3" fill="none"/><circle cx="3.9" cy="3.9" r="3.7" fill="#6696e6"/><circle cx="18.1" cy="3.9" r="1.8" fill="#4a72b8"/><circle cx="3.9" cy="17.7" r="2.1" fill="#4a72b8"/><circle cx="17.1" cy="17.1" r="2.9" fill="#5480cc"/></svg>
<svg class="ic" style="left:870.2px;top:361.8px;width:20px;height:20px" viewBox="0 0 20 20" ><path d="M11.55 1.69 A8.9 8.9 0 1 0 17.25 15.12" fill="none" stroke="#4a72b8" stroke-width="1.4"/><circle cx="9.7" cy="10.4" r="4.4" fill="#6696e6"/><circle cx="17" cy="3.5" r="2.5" fill="#5480cc"/></svg>
<svg class="ic" style="left:870.2px;top:400.0px;width:20px;height:20px" viewBox="0 0 20 20" ><path d="M15.07 14.20 L18.68 5.08 A3.2 3.2 0 0 0 14.60 0.89 L5.39 4.26 A7.6 7.6 0 1 0 15.07 14.20 Z" fill="none" stroke="#6696e6" stroke-width="1.3"/><circle cx="8.0" cy="11.4" r="4.2" fill="none" stroke="#6696e6" stroke-width="2.5"/><circle cx="8.0" cy="11.4" r="1.3" fill="#6696e6"/><circle cx="15.7" cy="3.9" r="1.25" fill="#6696e6"/></svg>
<svg class="ic" style="left:870.1px;top:437.3px;width:20px;height:20px" viewBox="0 0 20 20" ><path d="M5.6 3.2 L14.3 3.2 M4.4 5.6 L8.7 14.4 M15.5 5.6 L11.2 14.4" stroke="#00d6a3" stroke-width="1.3" fill="none"/><rect x="0.90" y="0.90" width="4.6" height="4.6" fill="none" stroke="#00d6a3" stroke-width="1.3"/><rect x="14.40" y="0.90" width="4.6" height="4.6" fill="none" stroke="#00d6a3" stroke-width="1.3"/><rect x="7.65" y="14.40" width="4.6" height="4.6" fill="none" stroke="#00d6a3" stroke-width="1.3"/></svg>
<svg class="ic" style="left:870.1px;top:475.0px;width:20px;height:20px" viewBox="0 0 20 20" ><circle cx="10.1" cy="9.9" r="9.7" fill="#c65f6a"/><path d="M10.5 1.6 A8.3 8.3 0 0 1 18.4 9.3 Q14.6 11.4 10.5 11.2 Z" fill="#1d1d1d"/><path d="M9.7 18.2 A8.3 8.3 0 0 1 1.9 10.9 Q5.4 12.9 9.7 12.9 Z" fill="#1d1d1d"/></svg>
<svg class="ic" style="left:870.2px;top:522.6px;width:20px;height:20px" viewBox="0 0 20 20" ><rect x="0.3" y="0.3" width="19.6" height="19.6" rx=".8" fill="#c65f6a"/><rect x="6.30" y="2.25" width="3.55" height="3.55" fill="#1d1d1d"/><rect x="14.40" y="2.25" width="3.55" height="3.55" fill="#1d1d1d"/><rect x="2.25" y="6.30" width="3.55" height="3.55" fill="#1d1d1d"/><rect x="10.35" y="6.30" width="3.55" height="3.55" fill="#1d1d1d"/><rect x="6.30" y="10.35" width="3.55" height="3.55" fill="#1d1d1d"/><rect x="14.40" y="10.35" width="3.55" height="3.55" fill="#1d1d1d"/><rect x="2.25" y="14.40" width="3.55" height="3.55" fill="#1d1d1d"/><rect x="10.35" y="14.40" width="3.55" height="3.55" fill="#1d1d1d"/></svg>
<div style="left:0;top:0;width:1280px;height:759.5px;overflow:hidden" class="abs"><div style="left:908.3px;top:-6px;width:42.4px;height:27.3px;background:#282828;border:1px solid #424242;border-right:none;border-radius:0 0 0 5px;box-sizing:border-box"></div>
<div style="left:950.2px;top:-6px;width:299px;height:27.3px;background:#1d1d1d;border-bottom:1px solid #3a3a3a;border-left:1px solid #3a3a3a;box-sizing:border-box"></div>
<div style="left:1249.1px;top:-6px;width:27.1px;height:26.6px;background:#545454;border-radius:0 0 5px 0"></div>
<svg class="ic" style="left:913.6px;top:-2.2px;width:20px;height:20px" viewBox="0 0 20 20" ><path d="M5.6 3.2 L14.3 3.2 M4.4 5.6 L8.7 14.4 M15.5 5.6 L11.2 14.4" stroke="#f0f0f0" stroke-width="1.5" fill="none"/><rect x="0.90" y="0.90" width="4.6" height="4.6" fill="none" stroke="#f0f0f0" stroke-width="1.5"/><rect x="14.40" y="0.90" width="4.6" height="4.6" fill="none" stroke="#f0f0f0" stroke-width="1.5"/><rect x="7.65" y="14.40" width="4.6" height="4.6" fill="none" stroke="#f0f0f0" stroke-width="1.5"/></svg>
<svg style="left:0;top:0;width:1280px;height:791px" viewBox="0 0 1280 791"><path d="M938.20 7.60 L942.20 11.80 L946.20 7.60" fill="none" stroke="#f0f0f0" stroke-width="1.5" stroke-linecap="round" stroke-linejoin="round"/><path d="M1262.5 -2.6 Q1259.6 1.3 1254.1 1.9 L1254.1 7.2 Q1254.1 13.6 1262.5 17.7 Q1270.9 13.6 1270.9 7.2 L1270.9 1.9 Q1265.4 1.3 1262.5 -2.6 Z" fill="none" stroke="#b6b6b6" stroke-width="1.3"/></svg>
<div class="t" style="left:961.40px;top:-2.29px;font-size:16.4px;transform:scaleX(0.9309);color:#e8e8e8;">Cylinder</div>
<div class="panel" style="top:34.8px;height:162.3px"></div>
<div class="t" style="left:938.00px;top:41.66px;font-size:16.4px;transform:scaleX(0.9329);">Vertex Groups</div>
<div class="panel" style="top:199.9px;height:196.1px"></div>
<div class="t" style="left:938.00px;top:206.76px;font-size:16.4px;transform:scaleX(0.9159);">Shape Keys</div>
<div class="panel" style="top:398.8px;height:33.2px"></div>
<div class="t" style="left:938.00px;top:405.66px;font-size:16.4px;transform:scaleX(0.9267);">UV Maps</div>
<div class="panel" style="top:434.9px;height:162.0px"></div>
<div class="t" style="left:938.00px;top:441.76px;font-size:16.4px;transform:scaleX(0.9436);">Color Attributes</div>
<div class="panel" style="top:600.3px;height:32.7px"></div>
<div class="t" style="left:938.00px;top:607.16px;font-size:16.4px;transform:scaleX(0.9411);">Attributes</div>
<div class="panel" style="top:636.4px;height:32.9px"></div>
<div class="t" style="left:938.00px;top:643.26px;font-size:16.4px;transform:scaleX(0.9481);">Texture Space</div>
<div class="panel" style="top:672.6px;height:32.9px"></div>
<div class="t" style="left:938.00px;top:679.46px;font-size:16.4px;transform:scaleX(0.9006);">Remesh</div>
<div class="panel" style="top:708.7px;height:33.6px"></div>
<div class="t" style="left:938.00px;top:715.56px;font-size:16.4px;transform:scaleX(0.9083);">Geometry Data</div>
<div class="panel" style="top:745.0px;height:33.0px"></div>
<div class="t" style="left:938.00px;top:751.86px;font-size:16.4px;transform:scaleX(0.9175);">Custom Properties</div>
<svg style="left:0;top:0;width:1280px;height:791px" viewBox="0 0 1280 791"><path d="M919.30 50.60 L924.90 56.40 L930.50 50.60" fill="none" stroke="#d6d6d6" stroke-width="1.5" stroke-linecap="round" stroke-linejoin="round"/><rect x="1252.40" y="48.50" width="1.7" height="1.8" fill="#b4b4b4"/><rect x="1252.40" y="50.30" width="1.7" height="1.8" fill="#121212"/><rect x="1256.95" y="48.50" width="1.7" height="1.8" fill="#b4b4b4"/><rect x="1256.95" y="50.30" width="1.7" height="1.8" fill="#121212"/><rect x="1261.50" y="48.50" width="1.7" height="1.8" fill="#b4b4b4"/><rect x="1261.50" y="50.30" width="1.7" height="1.8" fill="#121212"/><rect x="1266.05" y="48.50" width="1.7" height="1.8" fill="#b4b4b4"/><rect x="1266.05" y="50.30" width="1.7" height="1.8" fill="#121212"/><rect x="1252.40" y="52.60" width="1.7" height="1.8" fill="#b4b4b4"/><rect x="1252.40" y="54.40" width="1.7" height="1.8" fill="#121212"/><rect x="1256.95" y="52.60" width="1.7" height="1.8" fill="#b4b4b4"/><rect x="1256.95" y="54.40" width="1.7" height="1.8" fill="#121212"/><rect x="1261.50" y="52.60" width="1.7" height="1.8" fill="#b4b4b4"/><rect x="1261.50" y="54.40" width="1.7" height="1.8" fill="#121212"/><rect x="1266.05" y="52.60" width="1.7" height="1.8" fill="#b4b4b4"/><rect x="1266.05" y="54.40" width="1.7" height="1.8" fill="#121212"/><path d="M919.30 215.70 L924.90 221.50 L930.50 215.70" fill="none" stroke="#d6d6d6" stroke-width="1.5" stroke-linecap="round" stroke-linejoin="round"/><rect x="1252.40" y="213.60" width="1.7" height="1.8" fill="#b4b4b4"/><rect x="1252.40" y="215.40" width="1.7" height="1.8" fill="#121212"/><rect x="1256.95" y="213.60" width="1.7" height="1.8" fill="#b4b4b4"/><rect x="1256.95" y="215.40" width="1.7" height="1.8" fill="#121212"/><rect x="1261.50" y="213.60" width="1.7" height="1.8" fill="#b4b4b4"/><rect x="1261.50" y="215.40" width="1.7" height="1.8" fill="#121212"/><rect x="1266.05" y="213.60" width="1.7" height="1.8" fill="#b4b4b4"/><rect x="1266.05" y="215.40" width="1.7" height="1.8" fill="#121212"/><rect x="1252.40" y="217.70" width="1.7" height="1.8" fill="#b4b4b4"/><rect x="1252.40" y="219.50" width="1.7" height="1.8" fill="#121212"/><rect x="1256.95" y="217.70" width="1.7" height="1.8" fill="#b4b4b4"/><rect x="1256.95" y="219.50" width="1.7" height="1.8" fill="#121212"/><rect x="1261.50" y="217.70" width="1.7" height="1.8" fill="#b4b4b4"/><rect x="1261.50" y="219.50" width="1.7" height="1.8" fill="#121212"/><rect x="1266.05" y="217.70" width="1.7" height="1.8" fill="#b4b4b4"/><rect x="1266.05" y="219.50" width="1.7" height="1.8" fill="#121212"/><path d="M923.55 411.00 L929.45 416.40 L923.55 421.80" fill="none" stroke="#cdcdcd" stroke-width="1.5" stroke-linecap="round" stroke-linejoin="round"/><rect x="1252.40" y="412.50" width="1.7" height="1.8" fill="#b4b4b4"/><rect x="1252.40" y="414.30" width="1.7" height="1.8" fill="#121212"/><rect x="1256.95" y="412.50" width="1.7" height="1.8" fill="#b4b4b4"/><rect x="1256.95" y="414.30" width="1.7" height="1.8" fill="#121212"/><rect x="1261.50" y="412.50" width="1.7" height="1.8" fill="#b4b4b4"/><rect x="1261.50" y="414.30" width="1.7" height="1.8" fill="#121212"/><rect x="1266.05" y="412.50" width="1.7" height="1.8" fill="#b4b4b4"/><rect x="1266.05" y="414.30" width="1.7" height="1.8" fill="#121212"/><rect x="1252.40" y="416.60" width="1.7" height="1.8" fill="#b4b4b4"/><rect x="1252.40" y="418.40" width="1.7" height="1.8" fill="#121212"/><rect x="1256.95" y="416.60" width="1.7" height="1.8" fill="#b4b4b4"/><rect x="1256.95" y="418.40" width="1.7" height="1.8" fill="#121212"/><rect x="1261.50" y="416.60" width="1.7" height="1.8" fill="#b4b4b4"/><rect x="1261.50" y="418.40" width="1.7" height="1.8" fill="#121212"/><rect x="1266.05" y="416.60" width="1.7" height="1.8" fill="#b4b4b4"/><rect x="1266.05" y="418.40" width="1.7" height="1.8" fill="#121212"/><path d="M919.30 450.70 L924.90 456.50 L930.50 450.70" fill="none" stroke="#d6d6d6" stroke-width="1.5" stroke-linecap="round" stroke-linejoin="round"/><rect x="1252.40" y="448.60" width="1.7" height="1.8" fill="#b4b4b4"/><rect x="1252.40" y="450.40" width="1.7" height="1.8" fill="#121212"/><rect x="1256.95" y="448.60" width="1.7" height="1.8" fill="#b4b4b4"/><rect x="1256.95" y="450.40" width="1.7" height="1.8" fill="#121212"/><rect x="1261.50" y="448.60" width="1.7" height="1.8" fill="#b4b4b4"/><rect x="1261.50" y="450.40" width="1.7" height="1.8" fill="#121212"/><rect x="1266.05" y="448.60" width="1.7" height="1.8" fill="#b4b4b4"/><rect x="1266.05" y="450.40" width="1.7" height="1.8" fill="#121212"/><rect x="1252.40" y="452.70" width="1.7" height="1.8" fill="#b4b4b4"/><rect x="1252.40" y="454.50" width="1.7" height="1.8" fill="#121212"/><rect x="1256.95" y="452.70" width="1.7" height="1.8" fill="#b4b4b4"/><rect x="1256.95" y="454.50" width="1.7" height="1.8" fill="#121212"/><rect x="1261.50" y="452.70" width="1.7" height="1.8" fill="#b4b4b4"/><rect x="1261.50" y="454.50" width="1.7" height="1.8" fill="#121212"/><rect x="1266.05" y="452.70" width="1.7" height="1.8" fill="#b4b4b4"/><rect x="1266.05" y="454.50" width="1.7" height="1.8" fill="#121212"/><path d="M923.55 612.50 L929.45 617.90 L923.55 623.30" fill="none" stroke="#cdcdcd" stroke-width="1.5" stroke-linecap="round" stroke-linejoin="round"/><rect x="1252.40" y="614.00" width="1.7" height="1.8" fill="#b4b4b4"/><rect x="1252.40" y="615.80" width="1.7" height="1.8" fill="#121212"/><rect x="1256.95" y="614.00" width="1.7" height="1.8" fill="#b4b4b4"/><rect x="1256.95" y="615.80" width="1.7" height="1.8" fill="#121212"/><rect x="1261.50" y="614.00" width="1.7" height="1.8" fill="#b4b4b4"/><rect x="1261.50" y="615.80" width="1.7" height="1.8" fill="#121212"/><rect x="1266.05" y="614.00" width="1.7" height="1.8" fill="#b4b4b4"/><rect x="1266.05" y="615.80" width="1.7" height="1.8" fill="#121212"/><rect x="1252.40" y="618.10" width="1.7" height="1.8" fill="#b4b4b4"/><rect x="1252.40" y="619.90" width="1.7" height="1.8" fill="#121212"/><rect x="1256.95" y="618.10" width="1.7" height="1.8" fill="#b4b4b4"/><rect x="1256.95" y="619.90" width="1.7" height="1.8" fill="#121212"/><rect x="1261.50" y="618.10" width="1.7" height="1.8" fill="#b4b4b4"/><rect x="1261.50" y="619.90" width="1.7" height="1.8" fill="#121212"/><rect x="1266.05" y="618.10" width="1.7" height="1.8" fill="#b4b4b4"/><rect x="1266.05" y="619.90" width="1.7" height="1.8" fill="#121212"/><path d="M923.55 648.60 L929.45 654.00 L923.55 659.40" fill="none" stroke="#cdcdcd" stroke-width="1.5" stroke-linecap="round" stroke-linejoin="round"/><rect x="1252.40" y="650.10" width="1.7" height="1.8" fill="#b4b4b4"/><rect x="1252.40" y="651.90" width="1.7" height="1.8" fill="#121212"/><rect x="1256.95" y="650.10" width="1.7" height="1.8" fill="#b4b4b4"/><rect x="1256.95" y="651.90" width="1.7" height="1.8" fill="#121212"/><rect x="1261.50" y="650.10" width="1.7" height="1.8" fill="#b4b4b4"/><rect x="1261.50" y="651.90" width="1.7" height="1.8" fill="#121212"/><rect x="1266.05" y="650.10" width="1.7" height="1.8" fill="#b4b4b4"/><rect x="1266.05" y="651.90" width="1.7" height="1.8" fill="#121212"/><rect x="1252.40" y="654.20" width="1.7" height="1.8" fill="#b4b4b4"/><rect x="1252.40" y="656.00" width="1.7" height="1.8" fill="#121212"/><rect x="1256.95" y="654.20" width="1.7" height="1.8" fill="#b4b4b4"/><rect x="1256.95" y="656.00" width="1.7" height="1.8" fill="#121212"/><rect x="1261.50" y="654.20" width="1.7" height="1.8" fill="#b4b4b4"/><rect x="1261.50" y="656.00" width="1.7" height="1.8" fill="#121212"/><rect x="1266.05" y="654.20" width="1.7" height="1.8" fill="#b4b4b4"/><rect x="1266.05" y="656.00" width="1.7" height="1.8" fill="#121212"/><path d="M923.55 684.80 L929.45 690.20 L923.55 695.60" fill="none" stroke="#cdcdcd" stroke-width="1.5" stroke-linecap="round" stroke-linejoin="round"/><rect x="1252.40" y="686.30" width="1.7" height="1.8" fill="#b4b4b4"/><rect x="1252.40" y="688.10" width="1.7" height="1.8" fill="#121212"/><rect x="1256.95" y="686.30" width="1.7" height="1.8" fill="#b4b4b4"/><rect x="1256.95" y="688.10" width="1.7" height="1.8" fill="#121212"/><rect x="1261.50" y="686.30" width="1.7" height="1.8" fill="#b4b4b4"/><rect x="1261.50" y="688.10" width="1.7" height="1.8" fill="#121212"/><rect x="1266.05" y="686.30" width="1.7" height="1.8" fill="#b4b4b4"/><rect x="1266.05" y="688.10" width="1.7" height="1.8" fill="#121212"/><rect x="1252.40" y="690.40" width="1.7" height="1.8" fill="#b4b4b4"/><rect x="1252.40" y="692.20" width="1.7" height="1.8" fill="#121212"/><rect x="1256.95" y="690.40" width="1.7" height="1.8" fill="#b4b4b4"/><rect x="1256.95" y="692.20" width="1.7" height="1.8" fill="#121212"/><rect x="1261.50" y="690.40" width="1.7" height="1.8" fill="#b4b4b4"/><rect x="1261.50" y="692.20" width="1.7" height="1.8" fill="#121212"/><rect x="1266.05" y="690.40" width="1.7" height="1.8" fill="#b4b4b4"/><rect x="1266.05" y="692.20" width="1.7" height="1.8" fill="#121212"/><path d="M923.55 720.90 L929.45 726.30 L923.55 731.70" fill="none" stroke="#cdcdcd" stroke-width="1.5" stroke-linecap="round" stroke-linejoin="round"/><rect x="1252.40" y="722.40" width="1.7" height="1.8" fill="#b4b4b4"/><rect x="1252.40" y="724.20" width="1.7" height="1.8" fill="#121212"/><rect x="1256.95" y="722.40" width="1.7" height="1.8" fill="#b4b4b4"/><rect x="1256.95" y="724.20" width="1.7" height="1.8" fill="#121212"/><rect x="1261.50" y="722.40" width="1.7" height="1.8" fill="#b4b4b4"/><rect x="1261.50" y="724.20" width="1.7" height="1.8" fill="#121212"/><rect x="1266.05" y="722.40" width="1.7" height="1.8" fill="#b4b4b4"/><rect x="1266.05" y="724.20" width="1.7" height="1.8" fill="#121212"/><rect x="1252.40" y="726.50" width="1.7" height="1.8" fill="#b4b4b4"/><rect x="1252.40" y="728.30" width="1.7" height="1.8" fill="#121212"/><rect x="1256.95" y="726.50" width="1.7" height="1.8" fill="#b4b4b4"/><rect x="1256.95" y="728.30" width="1.7" height="1.8" fill="#121212"/><rect x="1261.50" y="726.50" width="1.7" height="1.8" fill="#b4b4b4"/><rect x="1261.50" y="728.30" width="1.7" height="1.8" fill="#121212"/><rect x="1266.05" y="726.50" width="1.7" height="1.8" fill="#b4b4b4"/><rect x="1266.05" y="728.30" width="1.7" height="1.8" fill="#121212"/><path d="M923.55 757.20 L929.45 762.60 L923.55 768.00" fill="none" stroke="#cdcdcd" stroke-width="1.5" stroke-linecap="round" stroke-linejoin="round"/><rect x="1252.40" y="758.70" width="1.7" height="1.8" fill="#b4b4b4"/><rect x="1252.40" y="760.50" width="1.7" height="1.8" fill="#121212"/><rect x="1256.95" y="758.70" width="1.7" height="1.8" fill="#b4b4b4"/><rect x="1256.95" y="760.50" width="1.7" height="1.8" fill="#121212"/><rect x="1261.50" y="758.70" width="1.7" height="1.8" fill="#b4b4b4"/><rect x="1261.50" y="760.50" width="1.7" height="1.8" fill="#121212"/><rect x="1266.05" y="758.70" width="1.7" height="1.8" fill="#b4b4b4"/><rect x="1266.05" y="760.50" width="1.7" height="1.8" fill="#121212"/><rect x="1252.40" y="762.80" width="1.7" height="1.8" fill="#b4b4b4"/><rect x="1252.40" y="764.60" width="1.7" height="1.8" fill="#121212"/><rect x="1256.95" y="762.80" width="1.7" height="1.8" fill="#b4b4b4"/><rect x="1256.95" y="764.60" width="1.7" height="1.8" fill="#121212"/><rect x="1261.50" y="762.80" width="1.7" height="1.8" fill="#b4b4b4"/><rect x="1261.50" y="764.60" width="1.7" height="1.8" fill="#121212"/><rect x="1266.05" y="762.80" width="1.7" height="1.8" fill="#b4b4b4"/><rect x="1266.05" y="764.60" width="1.7" height="1.8" fill="#121212"/></svg>
<div class="list" style="top:80.2px;height:104.9px"></div>
<div class="btn" style="top:80.0px;height:24.8px;border-radius:4.5px 4.5px 0 0"></div>
<div class="btn" style="top:105.6px;height:26.6px;border-radius:0 0 4.5px 4.5px;background:#494949;box-shadow:0 1px 1px rgba(0,0,0,.35)"></div>
<div class="btn" style="top:142.2px;height:24.8px;border-radius:4.5px;background:#232323;box-shadow:0 1px 1px rgba(0,0,0,.3)"></div>
<svg style="left:0;top:0;width:1280px;height:791px;pointer-events:none" viewBox="0 0 1280 791"><path d="M1246.7 92.10000000000001 L1259.1000000000001 92.10000000000001 M1252.9 85.9 L1252.9 98.30000000000001" stroke="#e8e8e8" stroke-width="1.9" fill="none"/><path d="M1246.7 118.6 L1259.1000000000001 118.6" stroke="#6c6c6c" stroke-width="1.9" fill="none"/><path d="M1246.10 152.50 L1251.90 158.50 L1257.70 152.50" fill="none" stroke="#f0f0f0" stroke-width="1.6" stroke-linecap="round" stroke-linejoin="round"/><path d="M934.2 168.80 L942.3 172.90 L934.2 177.00 Z" fill="#b4b4b4"/><rect x="1079.20" y="170.60" width="1.7" height="1.8" fill="#a4a4a4"/><rect x="1079.20" y="172.40" width="1.7" height="1.8" fill="#161616"/><rect x="1083.70" y="170.60" width="1.7" height="1.8" fill="#a4a4a4"/><rect x="1083.70" y="172.40" width="1.7" height="1.8" fill="#161616"/><rect x="1088.20" y="170.60" width="1.7" height="1.8" fill="#a4a4a4"/><rect x="1088.20" y="172.40" width="1.7" height="1.8" fill="#161616"/><rect x="1092.70" y="170.60" width="1.7" height="1.8" fill="#a4a4a4"/><rect x="1092.70" y="172.40" width="1.7" height="1.8" fill="#161616"/><rect x="1079.20" y="174.70" width="1.7" height="1.8" fill="#a4a4a4"/><rect x="1079.20" y="176.50" width="1.7" height="1.8" fill="#161616"/><rect x="1083.70" y="174.70" width="1.7" height="1.8" fill="#a4a4a4"/><rect x="1083.70" y="176.50" width="1.7" height="1.8" fill="#161616"/><rect x="1088.20" y="174.70" width="1.7" height="1.8" fill="#a4a4a4"/><rect x="1088.20" y="176.50" width="1.7" height="1.8" fill="#161616"/><rect x="1092.70" y="174.70" width="1.7" height="1.8" fill="#a4a4a4"/><rect x="1092.70" y="176.50" width="1.7" height="1.8" fill="#161616"/></svg>
<div class="list" style="top:245.3px;height:104.9px"></div>
<div class="btn" style="top:245.1px;height:24.8px;border-radius:4.5px 4.5px 0 0"></div>
<div class="btn" style="top:270.7px;height:26.6px;border-radius:0 0 4.5px 4.5px;background:#494949;box-shadow:0 1px 1px rgba(0,0,0,.35)"></div>
<div class="btn" style="top:307.3px;height:24.8px;border-radius:4.5px;background:#232323;box-shadow:0 1px 1px rgba(0,0,0,.3)"></div>
<svg style="left:0;top:0;width:1280px;height:791px;pointer-events:none" viewBox="0 0 1280 791"><path d="M1246.7 257.2 L1259.1000000000001 257.2 M1252.9 251.0 L1252.9 263.4" stroke="#e8e8e8" stroke-width="1.9" fill="none"/><path d="M1246.7 283.7 L1259.1000000000001 283.7" stroke="#6c6c6c" stroke-width="1.9" fill="none"/><path d="M1246.10 317.60 L1251.90 323.60 L1257.70 317.60" fill="none" stroke="#f0f0f0" stroke-width="1.6" stroke-linecap="round" stroke-linejoin="round"/><path d="M934.2 333.90 L942.3 338.00 L934.2 342.10 Z" fill="#b4b4b4"/><rect x="1079.20" y="335.70" width="1.7" height="1.8" fill="#a4a4a4"/><rect x="1079.20" y="337.50" width="1.7" height="1.8" fill="#161616"/><rect x="1083.70" y="335.70" width="1.7" height="1.8" fill="#a4a4a4"/><rect x="1083.70" y="337.50" width="1.7" height="1.8" fill="#161616"/><rect x="1088.20" y="335.70" width="1.7" height="1.8" fill="#a4a4a4"/><rect x="1088.20" y="337.50" width="1.7" height="1.8" fill="#161616"/><rect x="1092.70" y="335.70" width="1.7" height="1.8" fill="#a4a4a4"/><rect x="1092.70" y="337.50" width="1.7" height="1.8" fill="#161616"/><rect x="1079.20" y="339.80" width="1.7" height="1.8" fill="#a4a4a4"/><rect x="1079.20" y="341.60" width="1.7" height="1.8" fill="#161616"/><rect x="1083.70" y="339.80" width="1.7" height="1.8" fill="#a4a4a4"/><rect x="1083.70" y="341.60" width="1.7" height="1.8" fill="#161616"/><rect x="1088.20" y="339.80" width="1.7" height="1.8" fill="#a4a4a4"/><rect x="1088.20" y="341.60" width="1.7" height="1.8" fill="#161616"/><rect x="1092.70" y="339.80" width="1.7" height="1.8" fill="#a4a4a4"/><rect x="1092.70" y="341.60" width="1.7" height="1.8" fill="#161616"/></svg>
<div class="list" style="top:480.3px;height:104.9px"></div>
<div class="btn" style="top:480.1px;height:24.8px;border-radius:4.5px 4.5px 0 0"></div>
<div class="btn" style="top:505.7px;height:26.6px;border-radius:0 0 4.5px 4.5px;background:#545454;box-shadow:0 1px 1px rgba(0,0,0,.35)"></div>
<div class="btn" style="top:542.3px;height:24.8px;border-radius:4.5px;background:#232323;box-shadow:0 1px 1px rgba(0,0,0,.3)"></div>
<svg style="left:0;top:0;width:1280px;height:791px;pointer-events:none" viewBox="0 0 1280 791"><path d="M1246.7 492.2 L1259.1000000000001 492.2 M1252.9 486.0 L1252.9 498.4" stroke="#e8e8e8" stroke-width="1.9" fill="none"/><path d="M1246.7 518.7 L1259.1000000000001 518.7" stroke="#e4e4e4" stroke-width="1.9" fill="none"/><path d="M1246.10 552.60 L1251.90 558.60 L1257.70 552.60" fill="none" stroke="#f0f0f0" stroke-width="1.6" stroke-linecap="round" stroke-linejoin="round"/><path d="M934.2 568.90 L942.3 573.00 L934.2 577.10 Z" fill="#b4b4b4"/><rect x="1079.20" y="570.70" width="1.7" height="1.8" fill="#a4a4a4"/><rect x="1079.20" y="572.50" width="1.7" height="1.8" fill="#161616"/><rect x="1083.70" y="570.70" width="1.7" height="1.8" fill="#a4a4a4"/><rect x="1083.70" y="572.50" width="1.7" height="1.8" fill="#161616"/><rect x="1088.20" y="570.70" width="1.7" height="1.8" fill="#a4a4a4"/><rect x="1088.20" y="572.50" width="1.7" height="1.8" fill="#161616"/><rect x="1092.70" y="570.70" width="1.7" height="1.8" fill="#a4a4a4"/><rect x="1092.70" y="572.50" width="1.7" height="1.8" fill="#161616"/><rect x="1079.20" y="574.80" width="1.7" height="1.8" fill="#a4a4a4"/><rect x="1079.20" y="576.60" width="1.7" height="1.8" fill="#161616"/><rect x="1083.70" y="574.80" width="1.7" height="1.8" fill="#a4a4a4"/><rect x="1083.70" y="576.60" width="1.7" height="1.8" fill="#161616"/><rect x="1088.20" y="574.80" width="1.7" height="1.8" fill="#a4a4a4"/><rect x="1088.20" y="576.60" width="1.7" height="1.8" fill="#161616"/><rect x="1092.70" y="574.80" width="1.7" height="1.8" fill="#a4a4a4"/><rect x="1092.70" y="576.60" width="1.7" height="1.8" fill="#161616"/></svg>
<div style="left:919.6px;top:363.9px;width:16.7px;height:16.9px;background:#545454;border-radius:3.5px;box-shadow:0 1px 1px rgba(0,0,0,.35)"></div>
<div class="t" style="left:942.40px;top:361.71px;font-size:16.4px;transform:scaleX(0.9205);">Add Rest Position</div>
<div style="left:926px;top:486.7px;width:294.5px;height:24.7px;background:#4772b3;border-radius:4.5px"></div>
<svg style="left:0;top:0;width:1280px;height:791px" viewBox="0 0 1280 791"><rect x="929.7" y="489.9" width="4.2" height="4.2" fill="none" stroke="#ffffff" stroke-width="1.7"/><path d="M928.9 496.2 L934.5 496.2 L934.5 506 A2.8 2.8 0 0 1 928.9 506 Z" fill="#ffffff"/><circle cx="931.7" cy="505.9" r="1.15" fill="#4772b3"/><path d="M936.2 496.2 L941.3 499.8 L936.2 504.4 Z" fill="#ffffff" fill-opacity=".72"/><path d="M935.6 508.4 L941.1 508.4 L941.1 502.9 Z" fill="#ffffff" fill-opacity=".5"/><rect x="941.9" y="491.4" width="4.1" height="4.1" fill="none" stroke="#ffffff" stroke-opacity=".85" stroke-width="1.6"/><rect x="943.6" y="503.8" width="3.9" height="3.9" fill="none" stroke="#ffffff" stroke-opacity=".62" stroke-width="1.6"/><path d="M1154.9 491.9 L1166.6 498.75 L1154.9 505.6 Z" fill="#9cabc3"/><path d="M1199.2 493.4 L1203.6 493.4 L1205 490.9 Q1205.2 490.6 1205.7 490.6 L1210.5 490.6 Q1211 490.6 1211.2 490.9 L1212.6 493.4 L1216 493.4 Q1216.8 493.4 1216.8 494.2 L1216.8 505.2 Q1216.8 506 1216 506 L1199.2 506 Q1198.4 506 1198.4 505.2 L1198.4 494.2 Q1198.4 493.4 1199.2 493.4 Z" fill="#f4f4f4"/><circle cx="1208.1" cy="498.9" r="4.9" fill="none" stroke="#4772b3" stroke-width="1.25"/><circle cx="1208.1" cy="498.9" r="2.75" fill="#4772b3"/></svg>
<div class="t" style="left:961.00px;top:488.41px;font-size:16.4px;transform:scaleX(0.9037);color:#ffffff;">MASK</div>
<div class="t" style="left:1066.50px;top:488.41px;font-size:16.4px;transform:scaleX(0.9073);color:#a4b2c8;text-shadow:none;">Face Corner</div>
<div class="t" style="left:1170.90px;top:488.41px;font-size:16.4px;transform:scaleX(0.8600);color:#b3c0d6;text-shadow:none;-webkit-text-stroke:0.4px #b3c0d6;">...</div></div>
<div id="status"></div>
<div id="bstrip"></div>
<div class="t" style="left:1235.20px;top:763.98px;font-size:16.2px;transform:scaleX(0.9713);color:#939393;text-shadow:none;-webkit-text-stroke:0;">4.2.1</div>
<div style="left:938px;top:752.3px;width:79.7px;height:35.3px;background:rgba(33,35,37,.93);border-radius:5.5px"></div>
<div class="t" style="left:947.80px;top:760.82px;font-size:13.2px;transform:scaleX(0.9574);color:#6f6f6f;text-shadow:none;-webkit-text-stroke:0;">Flameshot</div>
</div>
</body>
</html>
